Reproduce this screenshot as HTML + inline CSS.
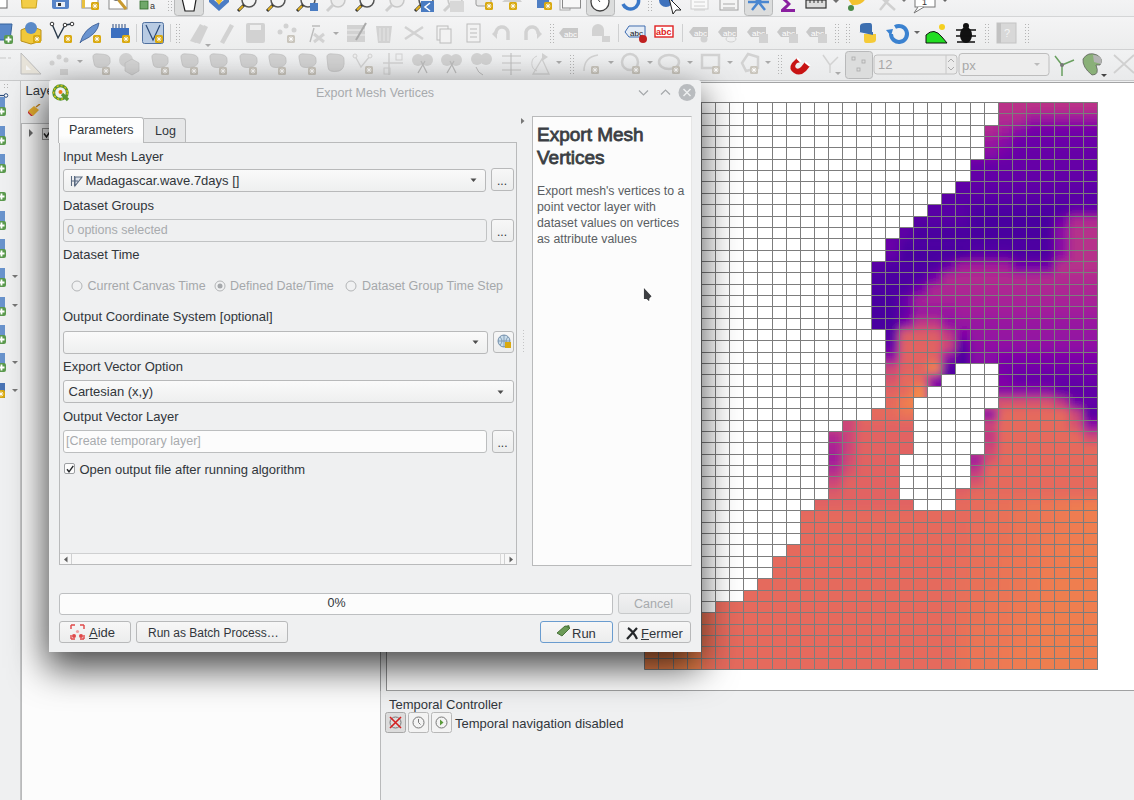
<!DOCTYPE html><html><head><meta charset="utf-8"><style>
*{box-sizing:border-box}
html,body{margin:0;padding:0}
body{width:1134px;height:800px;overflow:hidden;position:relative;background:#eff0f1;font-family:"Liberation Sans",sans-serif;}
div{position:absolute}
.t{white-space:nowrap;line-height:1;}
.btn{border:1px solid #b8b9ba;border-radius:3px;background:linear-gradient(#f7f7f7,#eceded);}
.fld{border:1px solid #bcbebf;border-radius:3px;background:#fcfcfc;}
.cmb{border:1px solid #b8b9ba;border-radius:3px;background:linear-gradient(#fafafa,#eeefef);}
</style></head><body>
<div style="left:0;top:0;width:1134px;height:81px;background:#eff0f1;"></div><div style="left:0;top:0;width:1134px;height:16px;background:linear-gradient(#f3f3f4,#eeeff0);"></div><div style="left:0;top:16px;width:1134px;height:1px;background:#d4d5d6;"></div><div style="left:0;top:17px;width:1134px;height:32px;background:linear-gradient(#f4f4f5,#eceded);"></div><div style="left:0;top:49px;width:1134px;height:1px;background:#d0d1d2;"></div><div style="left:0;top:50px;width:1134px;height:30px;background:linear-gradient(#f1f2f3,#e9eaeb);"></div><div style="left:0;top:80px;width:1134px;height:1px;background:#c9cacb;"></div><svg style="position:absolute;left:0;top:0" width="1134" height="81"><rect x="-10" y="-8" width="17" height="16" fill="#fff" stroke="#666"/><path d="M21 -8H38L36 8H22Z" fill="#f3cd47" stroke="#c9a21c"/><rect x="52" y="-8" width="17" height="17" rx="2" fill="#5784c8"/><rect x="56" y="2" width="9" height="5" fill="#e9eef6"/><rect x="58" y="3" width="3" height="3" fill="#333"/><rect x="82" y="-8" width="16" height="16" fill="#fff" stroke="#888"/><rect x="82" y="-8" width="3" height="16" fill="#e8c040"/><rect x="91" y="2" width="8" height="8" rx="1.5" fill="#d9a90f"/><path d="M95 3.5V8.5M92.5 6H97.5M93.2 4.2L96.8 7.8M96.8 4.2L93.2 7.8" stroke="#fff" stroke-width="0.9"/><rect x="109" y="-8" width="18" height="17" fill="#fff" stroke="#888"/><path d="M117 -2L126 9" stroke="#c99a30" stroke-width="3"/><circle cx="116" cy="-3" r="3.5" fill="#ddd" stroke="#666"/><rect x="140" y="1" width="8" height="8" fill="#6fa86a" stroke="#2f6a2a" stroke-width="0.8"/><text x="150" y="9" font-size="9" font-family="Liberation Sans" fill="#333">a</text><rect x="168" y="1" width="1" height="1" fill="#b4b4b4"/><rect x="171" y="1" width="1" height="1" fill="#b4b4b4"/><rect x="168" y="4" width="1" height="1" fill="#b4b4b4"/><rect x="171" y="4" width="1" height="1" fill="#b4b4b4"/><rect x="168" y="7" width="1" height="1" fill="#b4b4b4"/><rect x="171" y="7" width="1" height="1" fill="#b4b4b4"/><rect x="168" y="10" width="1" height="1" fill="#b4b4b4"/><rect x="171" y="10" width="1" height="1" fill="#b4b4b4"/><rect x="174.5" y="-7.5" width="29" height="23" rx="3" fill="#dcdddd" stroke="#b8b9ba"/><path d="M181 -6L197 -6L194 11L185 11Z" fill="#fff" stroke="#222" stroke-width="1.2"/><path d="M209 -4L219 4L229 -4L229 2L219 11L209 2Z" fill="#4b7cc4"/><path d="M214 -2h10l-5 7z" fill="#f2c030"/><circle cx="249" cy="0" r="7" fill="#f4f4f4" stroke="#555" stroke-width="1.5"/><path d="M244 5L238 11" stroke="#333" stroke-width="3"/><path d="M243 6L239 10" stroke="#e0b020" stroke-width="2"/><circle cx="278" cy="0" r="7" fill="#f4f4f4" stroke="#555" stroke-width="1.5"/><path d="M273 5L267 11" stroke="#333" stroke-width="3"/><path d="M272 6L268 10" stroke="#e0b020" stroke-width="2"/><circle cx="308" cy="0" r="7" fill="#f4f4f4" stroke="#555" stroke-width="1.5"/><path d="M303 5L297 11" stroke="#333" stroke-width="3"/><path d="M302 6L298 10" stroke="#e0b020" stroke-width="2"/><path d="M310 3h8v8h-8z" fill="#4a7cc2"/><circle cx="338" cy="0" r="7" fill="#ececec" stroke="#c8c8c8" stroke-width="1.5"/><path d="M333 5L327 11" stroke="#cfcfcf" stroke-width="3"/><circle cx="367" cy="0" r="7" fill="#f4f4f4" stroke="#555" stroke-width="1.5"/><path d="M362 5L356 11" stroke="#333" stroke-width="3"/><path d="M361 6L357 10" stroke="#e0b020" stroke-width="2"/><circle cx="397" cy="0" r="7" fill="#ececec" stroke="#c8c8c8" stroke-width="1.5"/><path d="M392 5L386 11" stroke="#cfcfcf" stroke-width="3"/><circle cx="426" cy="0" r="7" fill="#f4f4f4" stroke="#555" stroke-width="1.5"/><path d="M421 5L415 11" stroke="#333" stroke-width="3"/><path d="M420 6L416 10" stroke="#e0b020" stroke-width="2"/><rect x="421" y="1" width="13" height="11" fill="#4a7cc2"/><path d="M430 3L425 7L430 11" stroke="#fff" stroke-width="1.6" fill="none"/><circle cx="455" cy="0" r="7" fill="#ececec" stroke="#c8c8c8" stroke-width="1.5"/><path d="M450 5L444 11" stroke="#cfcfcf" stroke-width="3"/><rect x="450" y="1" width="14" height="11" fill="#d8d8d8"/><rect x="476" y="-8" width="15" height="14" rx="2" fill="#e8e8e8" stroke="#999"/><rect x="485" y="2" width="8" height="8" rx="1.5" fill="#d9a90f"/><path d="M489 3.5V8.5M486.5 6H491.5M487.2 4.2L490.8 7.8M490.8 4.2L487.2 7.8" stroke="#fff" stroke-width="0.9"/><path d="M502 2L514 -8L522 2Z" fill="#d0d0d0"/><rect x="509" y="2" width="8" height="8" rx="1.5" fill="#d9a90f"/><path d="M513 3.5V8.5M510.5 6H515.5M511.2 4.2L514.8 7.8M514.8 4.2L511.2 7.8" stroke="#fff" stroke-width="0.9"/><rect x="537" y="-8" width="12" height="16" fill="#4f7fc4"/><rect x="544" y="2" width="8" height="8" rx="1.5" fill="#d9a90f"/><path d="M548 3.5V8.5M545.5 6H550.5M546.2 4.2L549.8 7.8M549.8 4.2L546.2 7.8" stroke="#fff" stroke-width="0.9"/><rect x="560" y="-8" width="10" height="18" fill="#f7f7f7" stroke="#aaa"/><rect x="562.5" y="-8" width="18" height="16" fill="#f7f7f7" stroke="#888"/><rect x="586.5" y="-7.5" width="28" height="23" rx="3" fill="#dcdddd" stroke="#b8b9ba"/><circle cx="600" cy="2" r="9" fill="#fff" stroke="#444" stroke-width="1.3"/><path d="M600 2L596 -3" stroke="#444"/><path d="M623 4 A8 8 0 1 0 638 -2" stroke="#3a78c8" stroke-width="3.5" fill="none"/><rect x="648" y="1" width="1" height="1" fill="#b4b4b4"/><rect x="651" y="1" width="1" height="1" fill="#b4b4b4"/><rect x="648" y="4" width="1" height="1" fill="#b4b4b4"/><rect x="651" y="4" width="1" height="1" fill="#b4b4b4"/><rect x="648" y="7" width="1" height="1" fill="#b4b4b4"/><rect x="651" y="7" width="1" height="1" fill="#b4b4b4"/><rect x="648" y="10" width="1" height="1" fill="#b4b4b4"/><rect x="651" y="10" width="1" height="1" fill="#b4b4b4"/><circle cx="666" cy="0" r="7" fill="#3f72bd"/><path d="M669 -2L681 10L676 10L673 14Z" fill="#fff" stroke="#222"/><rect x="691" y="-8" width="17" height="17" fill="#f9f9f9" stroke="#cdcdcd"/><path d="M694 2h11M694 6h11M694 10h11" stroke="#d0d0d0"/><rect x="720" y="-8" width="18" height="18" fill="#f4f4f4" stroke="#a0a0a0"/><path d="M723 4h12M723 8h12" stroke="#aaa"/><rect x="744.5" y="-7.5" width="28" height="23" rx="3" fill="#dcdddd" stroke="#b8b9ba"/><path d="M752 -6L765 10M765 -6L752 10M748 2H769" stroke="#4a86d0" stroke-width="2.5"/><path d="M781 -4H795L795 -1H786L791 4L786 9H795V12H781V9.5L787 4L781 -1.5Z" fill="#8a1fa0"/><rect x="806" y="0" width="20" height="8" fill="#ddd" stroke="#333" stroke-width="1.2"/><path d="M810 0v3M814 0v3M818 0v3M822 0v3" stroke="#333"/><path d="M833 0h6l-3 3z" fill="#6e6e6e"/><path d="M846 -4Q856 -10 866 -2Q862 6 852 5Z" fill="#f2c230"/><circle cx="851" cy="8" r="3" fill="#4a8a4a"/><path d="M875 -8L895 10M880 10L893 -6" stroke="#d0d0d0" stroke-width="2.5"/><path d="M901 -1h6l-3 3z" fill="#777"/><rect x="915" y="-8" width="20" height="15" fill="#fff" stroke="#777"/><path d="M918 7L914 13L924 7" fill="#fff" stroke="#777"/><text x="922" y="5" font-size="9" font-family="Liberation Sans" fill="#333">1</text><path d="M942 -1h6l-3 3z" fill="#666"/><path d="M-4 24H12L10 40H-4Z" fill="#5a88c8" stroke="#37629c"/><rect x="4" y="35" width="9" height="9" rx="2" fill="#5b9a4e"/><path d="M8.5 36.5V42.5M5.5 39.5H11.5" stroke="#fff" stroke-width="1.8"/><path d="M21 30L31 26L41 30V41L31 44L21 41Z" fill="#f0c83a" stroke="#b8901a"/><circle cx="31" cy="28" r="6" fill="#5a8ac8"/><rect x="33" y="35" width="8" height="8" rx="1.5" fill="#d9a90f"/><path d="M37 36.5V41.5M34.5 39H39.5M35.2 37.2L38.8 40.8M38.8 37.2L35.2 40.8" stroke="#fff" stroke-width="0.9"/><path d="M52 24L58 38L65 25L72 24" stroke="#2a3a4a" stroke-width="1.4" fill="none"/><circle cx="52" cy="24" r="1.8" fill="#fff" stroke="#333"/><circle cx="65" cy="25" r="1.8" fill="#fff" stroke="#333"/><circle cx="72" cy="24" r="1.8" fill="#fff" stroke="#333"/><rect x="64" y="35" width="8" height="8" rx="1.5" fill="#d9a90f"/><path d="M68 36.5V41.5M65.5 39H70.5M66.2 37.2L69.8 40.8M69.8 37.2L66.2 40.8" stroke="#fff" stroke-width="0.9"/><path d="M80 43Q84 28 99 23Q98 34 82 41Z" fill="#6a94d0" stroke="#3a5a90" stroke-width="0.8"/><rect x="93" y="35" width="8" height="8" rx="1.5" fill="#d9a90f"/><path d="M97 36.5V41.5M94.5 39H99.5M95.2 37.2L98.8 40.8M98.8 37.2L95.2 40.8" stroke="#fff" stroke-width="0.9"/><rect x="111" y="28" width="18" height="10" fill="#3c70c0"/><path d="M113 24v4M116 24v4M119 24v4M122 24v4M125 24v4" stroke="#2a4a80"/><rect x="122" y="35" width="8" height="8" rx="1.5" fill="#d9a90f"/><path d="M126 36.5V41.5M123.5 39H128.5M124.2 37.2L127.8 40.8M127.8 37.2L124.2 40.8" stroke="#fff" stroke-width="0.9"/><rect x="136" y="24" width="1" height="18" fill="#cfd0d1"/><rect x="142.5" y="22.5" width="21" height="21" rx="2" fill="#b8cbe3" stroke="#5071a0"/><path d="M146 25L153 40L160 25" stroke="#2a4a78" stroke-width="1.2" fill="none"/><rect x="155" y="35" width="8" height="8" rx="1.5" fill="#d9a90f"/><path d="M159 36.5V41.5M156.5 39H161.5M157.2 37.2L160.8 40.8M160.8 37.2L157.2 40.8" stroke="#fff" stroke-width="0.9"/><rect x="170" y="24" width="1" height="18" fill="#cfd0d1"/><rect x="176" y="24" width="1" height="1" fill="#b4b4b4"/><rect x="179" y="24" width="1" height="1" fill="#b4b4b4"/><rect x="176" y="27" width="1" height="1" fill="#b4b4b4"/><rect x="179" y="27" width="1" height="1" fill="#b4b4b4"/><rect x="176" y="30" width="1" height="1" fill="#b4b4b4"/><rect x="179" y="30" width="1" height="1" fill="#b4b4b4"/><rect x="176" y="33" width="1" height="1" fill="#b4b4b4"/><rect x="179" y="33" width="1" height="1" fill="#b4b4b4"/><rect x="176" y="36" width="1" height="1" fill="#b4b4b4"/><rect x="179" y="36" width="1" height="1" fill="#b4b4b4"/><rect x="176" y="39" width="1" height="1" fill="#b4b4b4"/><rect x="179" y="39" width="1" height="1" fill="#b4b4b4"/><rect x="176" y="42" width="1" height="1" fill="#b4b4b4"/><rect x="179" y="42" width="1" height="1" fill="#b4b4b4"/><path d="M190 41L200 24L204 26L196 43Z" fill="#d2d2d2"/><path d="M194 42L204 25L208 27L200 44Z" fill="#d2d2d2"/><path d="M205 44h6l-3 3z" fill="#aaa"/><path d="M220 42L230 24L234 26L224 44Z" fill="#d2d2d2"/><rect x="246" y="23" width="19" height="20" rx="2" fill="#d2d2d2"/><rect x="250" y="25" width="11" height="5" fill="#eee"/><circle cx="280" cy="32" r="2.5" fill="#d2d2d2"/><circle cx="286" cy="26" r="2.5" fill="#d2d2d2"/><circle cx="294" cy="30" r="2.5" fill="#d2d2d2"/><rect x="287" y="35" width="8" height="8" rx="1.5" fill="#c9c5bc"/><path d="M291 36.5V41.5M288.5 39H293.5M289.2 37.2L292.8 40.8M292.8 37.2L289.2 40.8" stroke="#fff" stroke-width="0.9"/><path d="M310 42L314 28M312 26h8" stroke="#bcbcbc" stroke-width="1.4" fill="none"/><path d="M314 34L324 42M324 34L314 42" stroke="#d2d2d2" stroke-width="3"/><path d="M333 32h6l-3 3z" fill="#aaa"/><rect x="347" y="25" width="18" height="17" fill="#d2d2d2"/><path d="M347 30h18M347 35h18" stroke="#eee"/><path d="M356 40L366 23" stroke="#aaa" stroke-width="2"/><path d="M376 26H392L390 43H378Z" fill="#d2d2d2"/><path d="M380 28V41M384 28V41M388 28V41" stroke="#e6e6e6"/><path d="M405 27L423 39M405 39L423 27" stroke="#d2d2d2" stroke-width="2.5"/><rect x="437" y="26" width="11" height="14" fill="#f2f2f2" stroke="#bcbcbc"/><rect x="440" y="29" width="11" height="14" fill="#f2f2f2" stroke="#bcbcbc"/><rect x="467" y="24" width="13" height="18" fill="#f2f2f2" stroke="#bcbcbc"/><path d="M470 29h7M470 33h7M470 37h7" stroke="#bcbcbc"/><path d="M496 34A6 6 0 0 1 508 32L508 40" stroke="#d2d2d2" stroke-width="3.5" fill="none"/><path d="M492 34l5 -5v10z" fill="#d2d2d2"/><path d="M538 34A6 6 0 0 0 526 32L526 40" stroke="#d2d2d2" stroke-width="3.5" fill="none"/><path d="M542 34l-5 -5v10z" fill="#d2d2d2"/><rect x="550" y="24" width="1" height="1" fill="#b4b4b4"/><rect x="553" y="24" width="1" height="1" fill="#b4b4b4"/><rect x="550" y="27" width="1" height="1" fill="#b4b4b4"/><rect x="553" y="27" width="1" height="1" fill="#b4b4b4"/><rect x="550" y="30" width="1" height="1" fill="#b4b4b4"/><rect x="553" y="30" width="1" height="1" fill="#b4b4b4"/><rect x="550" y="33" width="1" height="1" fill="#b4b4b4"/><rect x="553" y="33" width="1" height="1" fill="#b4b4b4"/><rect x="550" y="36" width="1" height="1" fill="#b4b4b4"/><rect x="553" y="36" width="1" height="1" fill="#b4b4b4"/><rect x="550" y="39" width="1" height="1" fill="#b4b4b4"/><rect x="553" y="39" width="1" height="1" fill="#b4b4b4"/><rect x="550" y="42" width="1" height="1" fill="#b4b4b4"/><rect x="553" y="42" width="1" height="1" fill="#b4b4b4"/><path d="M559 33L563 28H578V38H563Z" fill="#c8c8c8"/><text x="564" y="36.5" font-size="8" font-family="Liberation Sans" fill="#fff">abc</text><path d="M592 30A6 6 0 0 1 604 30V36H592Z" fill="#d2d2d2"/><rect x="602" y="36" width="8" height="6" fill="#d2d2d2"/><rect x="618" y="24" width="1" height="18" fill="#cfd0d1"/><path d="M625 32L629 27H644V37H629Z" fill="#e4ecf6"/><text x="630" y="35.5" font-size="8" font-family="Liberation Sans" fill="#111">abc</text><path d="M625 32L629 26H645V37H629Z" fill="none" stroke="#3a6ab0"/><circle cx="643" cy="39" r="4" fill="#c02020"/><rect x="655" y="26" width="18" height="11" fill="#fff" stroke="#e02020" stroke-width="1.4"/><text x="656" y="35" font-size="9" font-weight="bold" font-family="Liberation Sans" fill="#e02020">abc</text><rect x="682" y="24" width="1" height="18" fill="#cfd0d1"/><path d="M689 32L693 27H708V37H693Z" fill="#c8c8c8"/><text x="694" y="35.5" font-size="8" font-family="Liberation Sans" fill="#fff">abc</text><circle cx="704" cy="39" r="3.5" fill="#d2d2d2"/><path d="M718 32L722 27H737V37H722Z" fill="#c8c8c8"/><text x="723" y="35.5" font-size="8" font-family="Liberation Sans" fill="#fff">abc</text><ellipse cx="731" cy="39" rx="5" ry="3" fill="none" stroke="#d2d2d2"/><path d="M747 32L751 27H766V37H751Z" fill="#c8c8c8"/><text x="752" y="35.5" font-size="8" font-family="Liberation Sans" fill="#fff">abc</text><rect x="759" y="34" width="9" height="9" fill="#d2d2d2"/><path d="M777 32L781 27H796V37H781Z" fill="#c8c8c8"/><text x="782" y="35.5" font-size="8" font-family="Liberation Sans" fill="#fff">abc</text><rect x="789" y="34" width="9" height="9" fill="#d2d2d2"/><path d="M806 32L810 27H825V37H810Z" fill="#c8c8c8"/><text x="811" y="35.5" font-size="8" font-family="Liberation Sans" fill="#fff">abc</text><rect x="818" y="34" width="9" height="9" fill="#d2d2d2"/><rect x="835" y="24" width="1" height="1" fill="#b4b4b4"/><rect x="838" y="24" width="1" height="1" fill="#b4b4b4"/><rect x="835" y="27" width="1" height="1" fill="#b4b4b4"/><rect x="838" y="27" width="1" height="1" fill="#b4b4b4"/><rect x="835" y="30" width="1" height="1" fill="#b4b4b4"/><rect x="838" y="30" width="1" height="1" fill="#b4b4b4"/><rect x="835" y="33" width="1" height="1" fill="#b4b4b4"/><rect x="838" y="33" width="1" height="1" fill="#b4b4b4"/><rect x="835" y="36" width="1" height="1" fill="#b4b4b4"/><rect x="838" y="36" width="1" height="1" fill="#b4b4b4"/><rect x="835" y="39" width="1" height="1" fill="#b4b4b4"/><rect x="838" y="39" width="1" height="1" fill="#b4b4b4"/><rect x="835" y="42" width="1" height="1" fill="#b4b4b4"/><rect x="838" y="42" width="1" height="1" fill="#b4b4b4"/><rect x="846" y="24" width="1" height="1" fill="#b4b4b4"/><rect x="849" y="24" width="1" height="1" fill="#b4b4b4"/><rect x="846" y="27" width="1" height="1" fill="#b4b4b4"/><rect x="849" y="27" width="1" height="1" fill="#b4b4b4"/><rect x="846" y="30" width="1" height="1" fill="#b4b4b4"/><rect x="849" y="30" width="1" height="1" fill="#b4b4b4"/><rect x="846" y="33" width="1" height="1" fill="#b4b4b4"/><rect x="849" y="33" width="1" height="1" fill="#b4b4b4"/><rect x="846" y="36" width="1" height="1" fill="#b4b4b4"/><rect x="849" y="36" width="1" height="1" fill="#b4b4b4"/><rect x="846" y="39" width="1" height="1" fill="#b4b4b4"/><rect x="849" y="39" width="1" height="1" fill="#b4b4b4"/><rect x="846" y="42" width="1" height="1" fill="#b4b4b4"/><rect x="849" y="42" width="1" height="1" fill="#b4b4b4"/><path d="M860 32V26Q860 23 866 23H870Q872 23 872 26V32H862Z" fill="#3d6fb0"/><path d="M876 34V40Q876 43 870 43H866Q864 43 864 40V34H874Z" fill="#f5cb38"/><path d="M859 32H873V35" fill="#3d6fb0"/><path d="M891 34 A8 8 0 1 0 895 27" stroke="#3b82d0" stroke-width="4" fill="none"/><path d="M886 30l7 -1l-2 7z" fill="#3b82d0"/><path d="M914 31h6l-3 3z" fill="#666"/><path d="M926 43V35Q934 27 942 37L947 43Z" fill="#22dd22" stroke="#111" stroke-width="1"/><circle cx="942" cy="27" r="3" fill="#f5d020"/><ellipse cx="966" cy="35" rx="6" ry="8" fill="#111"/><circle cx="966" cy="26" r="3" fill="#111"/><path d="M956 30h20M956 36h20M957 42h18" stroke="#111" stroke-width="1.3"/><rect x="985" y="24" width="1" height="1" fill="#b4b4b4"/><rect x="988" y="24" width="1" height="1" fill="#b4b4b4"/><rect x="985" y="27" width="1" height="1" fill="#b4b4b4"/><rect x="988" y="27" width="1" height="1" fill="#b4b4b4"/><rect x="985" y="30" width="1" height="1" fill="#b4b4b4"/><rect x="988" y="30" width="1" height="1" fill="#b4b4b4"/><rect x="985" y="33" width="1" height="1" fill="#b4b4b4"/><rect x="988" y="33" width="1" height="1" fill="#b4b4b4"/><rect x="985" y="36" width="1" height="1" fill="#b4b4b4"/><rect x="988" y="36" width="1" height="1" fill="#b4b4b4"/><rect x="985" y="39" width="1" height="1" fill="#b4b4b4"/><rect x="988" y="39" width="1" height="1" fill="#b4b4b4"/><rect x="985" y="42" width="1" height="1" fill="#b4b4b4"/><rect x="988" y="42" width="1" height="1" fill="#b4b4b4"/><rect x="997" y="23" width="19" height="20" fill="#d8d8d8" stroke="#c4c4c4"/><rect x="997" y="23" width="4" height="20" fill="#c2c2c2"/><text x="1004" y="37" font-size="11" font-family="Liberation Sans" fill="#f4f4f4">?</text><rect x="1025" y="24" width="1" height="1" fill="#b4b4b4"/><rect x="1028" y="24" width="1" height="1" fill="#b4b4b4"/><rect x="1025" y="27" width="1" height="1" fill="#b4b4b4"/><rect x="1028" y="27" width="1" height="1" fill="#b4b4b4"/><rect x="1025" y="30" width="1" height="1" fill="#b4b4b4"/><rect x="1028" y="30" width="1" height="1" fill="#b4b4b4"/><rect x="1025" y="33" width="1" height="1" fill="#b4b4b4"/><rect x="1028" y="33" width="1" height="1" fill="#b4b4b4"/><rect x="1025" y="36" width="1" height="1" fill="#b4b4b4"/><rect x="1028" y="36" width="1" height="1" fill="#b4b4b4"/><rect x="1025" y="39" width="1" height="1" fill="#b4b4b4"/><rect x="1028" y="39" width="1" height="1" fill="#b4b4b4"/><rect x="1025" y="42" width="1" height="1" fill="#b4b4b4"/><rect x="1028" y="42" width="1" height="1" fill="#b4b4b4"/><path d="M0 58h6M8 58h3" stroke="#c8c8c8" stroke-width="1.2"/><path d="M21 53V74H41Z" fill="#e8e4da" stroke="#bcbcbc"/><path d="M26 65V70H31Z" fill="#f6f6f6"/><circle cx="52" cy="63" r="2.5" fill="#d2d2d2"/><circle cx="59" cy="57" r="2.5" fill="#d2d2d2"/><circle cx="66" cy="60" r="2.5" fill="#d2d2d2"/><path d="M60 69h8v6h-8z" fill="#d2d2d2"/><path d="M77 60h6l-3 3z" fill="#aaa"/><path d="M93 58 Q92 53 99 54 Q111 54 110 60 Q111 65 105 67 Q94 69 94 63 Z" fill="#d2d2d2" stroke="#c2c2c2" stroke-width="0.8"/><rect x="102" y="67" width="8" height="8" rx="1.5" fill="#c9c5bc"/><path d="M106 68.5V73.5M103.5 71H108.5M104.2 69.2L107.8 72.8M107.8 69.2L104.2 72.8" stroke="#fff" stroke-width="0.9"/><path d="M181 58 Q180 53 187 54 Q199 54 198 60 Q199 65 193 67 Q182 69 182 63 Z" fill="#d2d2d2" stroke="#c2c2c2" stroke-width="0.8"/><rect x="190" y="67" width="8" height="8" rx="1.5" fill="#c9c5bc"/><path d="M194 68.5V73.5M191.5 71H196.5M192.2 69.2L195.8 72.8M195.8 69.2L192.2 72.8" stroke="#fff" stroke-width="0.9"/><path d="M210 58 Q209 53 216 54 Q228 54 227 60 Q228 65 222 67 Q211 69 211 63 Z" fill="#d2d2d2" stroke="#c2c2c2" stroke-width="0.8"/><rect x="219" y="67" width="8" height="8" rx="1.5" fill="#c9c5bc"/><path d="M223 68.5V73.5M220.5 71H225.5M221.2 69.2L224.8 72.8M224.8 69.2L221.2 72.8" stroke="#fff" stroke-width="0.9"/><path d="M240 58 Q239 53 246 54 Q258 54 257 60 Q258 65 252 67 Q241 69 241 63 Z" fill="#d2d2d2" stroke="#c2c2c2" stroke-width="0.8"/><rect x="249" y="67" width="8" height="8" rx="1.5" fill="#c9c5bc"/><path d="M253 68.5V73.5M250.5 71H255.5M251.2 69.2L254.8 72.8M254.8 69.2L251.2 72.8" stroke="#fff" stroke-width="0.9"/><path d="M269 58 Q268 53 275 54 Q287 54 286 60 Q287 65 281 67 Q270 69 270 63 Z" fill="#d2d2d2" stroke="#c2c2c2" stroke-width="0.8"/><rect x="278" y="67" width="8" height="8" rx="1.5" fill="#c9c5bc"/><path d="M282 68.5V73.5M279.5 71H284.5M280.2 69.2L283.8 72.8M283.8 69.2L280.2 72.8" stroke="#fff" stroke-width="0.9"/><path d="M299 58 Q298 53 305 54 Q317 54 316 60 Q317 65 311 67 Q300 69 300 63 Z" fill="#d2d2d2" stroke="#c2c2c2" stroke-width="0.8"/><rect x="308" y="67" width="8" height="8" rx="1.5" fill="#c9c5bc"/><path d="M312 68.5V73.5M309.5 71H314.5M310.2 69.2L313.8 72.8M313.8 69.2L310.2 72.8" stroke="#fff" stroke-width="0.9"/><circle cx="126" cy="60" r="7" fill="#d2d2d2"/><path d="M125 63l7-4l7 4v8l-7 4l-7-4z" fill="#d4d4d4" stroke="#bcbcbc" stroke-width="0.6"/><path d="M152 58 Q151 53 158 54 Q169 54 168 60 Q169 65 163 67 Q153 69 153 63 Z" fill="#d2d2d2" stroke="#c2c2c2" stroke-width="0.8"/><rect x="161" y="67" width="8" height="8" rx="1.5" fill="#c9c5bc"/><path d="M165 68.5V73.5M162.5 71H167.5M163.2 69.2L166.8 72.8M166.8 69.2L163.2 72.8" stroke="#fff" stroke-width="0.9"/><path d="M327 58 Q326 53 333 54 Q345 54 344 60 Q345 69 339 71 Q328 73 328 67 Z" fill="#d2d2d2" stroke="#c2c2c2" stroke-width="0.8"/><path d="M355 56L361 67L370 56" stroke="#d2d2d2" stroke-width="1.3" fill="none"/><circle cx="355" cy="56" r="2" fill="#eee" stroke="#d2d2d2"/><circle cx="370" cy="56" r="2" fill="#eee" stroke="#d2d2d2"/><rect x="365" y="66" width="8" height="8" rx="1.5" fill="#c9c5bc"/><path d="M369 67.5V72.5M366.5 70H371.5M367.2 68.2L370.8 71.8M370.8 68.2L367.2 71.8" stroke="#fff" stroke-width="0.9"/><path d="M389 53V75M383 63H403" stroke="#d2d2d2" stroke-width="1.5"/><rect x="396" y="54" width="6" height="6" fill="none" stroke="#d2d2d2"/><rect x="384" y="68" width="6" height="6" fill="none" stroke="#d2d2d2"/><circle cx="418" cy="60" r="6" fill="#d2d2d2"/><circle cx="427" cy="60" r="6" fill="#d2d2d2"/><path d="M418 73L425 61M427 73L421 61" stroke="#bcbcbc" stroke-width="1.3"/><circle cx="447" cy="60" r="6" fill="#d2d2d2"/><circle cx="456" cy="60" r="6" fill="#d2d2d2"/><path d="M447 73L454 61M456 73L450 61" stroke="#bcbcbc" stroke-width="1.3"/><circle cx="477" cy="59" r="6" fill="#d2d2d2"/><circle cx="486" cy="59" r="6" fill="#d2d2d2"/><path d="M476 67Q478 73 483 75" stroke="#bcbcbc" fill="none"/><path d="M502 56H521M502 63H521M502 70H521" stroke="#d2d2d2" stroke-width="1.6"/><path d="M511 53V75" stroke="#bcbcbc"/><path d="M533 74L542 59L549 74Z" fill="none" stroke="#d2d2d2" stroke-width="1.3"/><path d="M542 53V61l6-4z" fill="#d2d2d2"/><path d="M537 56A8 8 0 0 0 537 71" stroke="#d2d2d2" fill="none"/><path d="M556 61h6l-3 3z" fill="#aaa"/><rect x="570" y="55" width="1" height="1" fill="#b4b4b4"/><rect x="573" y="55" width="1" height="1" fill="#b4b4b4"/><rect x="570" y="58" width="1" height="1" fill="#b4b4b4"/><rect x="573" y="58" width="1" height="1" fill="#b4b4b4"/><rect x="570" y="61" width="1" height="1" fill="#b4b4b4"/><rect x="573" y="61" width="1" height="1" fill="#b4b4b4"/><rect x="570" y="64" width="1" height="1" fill="#b4b4b4"/><rect x="573" y="64" width="1" height="1" fill="#b4b4b4"/><rect x="570" y="67" width="1" height="1" fill="#b4b4b4"/><rect x="573" y="67" width="1" height="1" fill="#b4b4b4"/><rect x="570" y="70" width="1" height="1" fill="#b4b4b4"/><rect x="573" y="70" width="1" height="1" fill="#b4b4b4"/><rect x="570" y="73" width="1" height="1" fill="#b4b4b4"/><rect x="573" y="73" width="1" height="1" fill="#b4b4b4"/><path d="M584 71Q584 57 598 55" stroke="#d2d2d2" stroke-width="1.5" fill="none"/><rect x="591" y="66" width="8" height="8" rx="1.5" fill="#c9c5bc"/><path d="M595 67.5V72.5M592.5 70H597.5M593.2 68.2L596.8 71.8M596.8 68.2L593.2 71.8" stroke="#fff" stroke-width="0.9"/><path d="M608 61h6l-3 3z" fill="#aaa"/><circle cx="630" cy="62" r="8" fill="none" stroke="#d2d2d2" stroke-width="2.5"/><rect x="632" y="66" width="8" height="8" rx="1.5" fill="#c9c5bc"/><path d="M636 67.5V72.5M633.5 70H638.5M634.2 68.2L637.8 71.8M637.8 68.2L634.2 71.8" stroke="#fff" stroke-width="0.9"/><path d="M647 61h6l-3 3z" fill="#aaa"/><ellipse cx="669" cy="62" rx="10" ry="7" fill="none" stroke="#d2d2d2" stroke-width="2.5"/><rect x="672" y="66" width="8" height="8" rx="1.5" fill="#c9c5bc"/><path d="M676 67.5V72.5M673.5 70H678.5M674.2 68.2L677.8 71.8M677.8 68.2L674.2 71.8" stroke="#fff" stroke-width="0.9"/><path d="M687 61h6l-3 3z" fill="#aaa"/><rect x="702" y="55" width="17" height="13" fill="none" stroke="#d2d2d2" stroke-width="2.5"/><rect x="712" y="66" width="8" height="8" rx="1.5" fill="#c9c5bc"/><path d="M716 67.5V72.5M713.5 70H718.5M714.2 68.2L717.8 71.8M717.8 68.2L714.2 71.8" stroke="#fff" stroke-width="0.9"/><path d="M727 61h6l-3 3z" fill="#aaa"/><path d="M742 63L748 54L758 57L758 68L746 71Z" fill="none" stroke="#d2d2d2" stroke-width="2.5"/><rect x="750" y="66" width="8" height="8" rx="1.5" fill="#c9c5bc"/><path d="M754 67.5V72.5M751.5 70H756.5M752.2 68.2L755.8 71.8M755.8 68.2L752.2 71.8" stroke="#fff" stroke-width="0.9"/><path d="M765 61h6l-3 3z" fill="#aaa"/><rect x="778" y="55" width="1" height="1" fill="#b4b4b4"/><rect x="781" y="55" width="1" height="1" fill="#b4b4b4"/><rect x="778" y="58" width="1" height="1" fill="#b4b4b4"/><rect x="781" y="58" width="1" height="1" fill="#b4b4b4"/><rect x="778" y="61" width="1" height="1" fill="#b4b4b4"/><rect x="781" y="61" width="1" height="1" fill="#b4b4b4"/><rect x="778" y="64" width="1" height="1" fill="#b4b4b4"/><rect x="781" y="64" width="1" height="1" fill="#b4b4b4"/><rect x="778" y="67" width="1" height="1" fill="#b4b4b4"/><rect x="781" y="67" width="1" height="1" fill="#b4b4b4"/><rect x="778" y="70" width="1" height="1" fill="#b4b4b4"/><rect x="781" y="70" width="1" height="1" fill="#b4b4b4"/><rect x="778" y="73" width="1" height="1" fill="#b4b4b4"/><rect x="781" y="73" width="1" height="1" fill="#b4b4b4"/><path d="M797 58L792 63Q788 69 794 73Q800 77 806 71L810 66L805 62L801 67Q798 70 796 68Q794 66 797 63L801 62Z" fill="#c81414"/><path d="M797 58L801 62M810 66L805 62" stroke="#fff" stroke-width="2"/><path d="M830 73V65L823 55M830 65L838 57" stroke="#d2d2d2" stroke-width="1.5" fill="none"/><path d="M835 72h6l-3 3z" fill="#aaa"/><rect x="845.5" y="51.5" width="27" height="27" rx="3" fill="#dcdddd" stroke="#b8b9ba"/><rect x="852" y="57" width="3" height="3" fill="none" stroke="#aaa" stroke-width="0.8"/><rect x="862" y="60" width="3" height="3" fill="none" stroke="#aaa" stroke-width="0.8"/><rect x="857" y="68" width="3" height="3" fill="none" stroke="#aaa" stroke-width="0.8"/><rect x="874" y="55" width="83" height="19" rx="3" fill="#ebebeb" stroke="#c0c0c0"/><text x="878" y="69" font-size="13" font-family="Liberation Sans" fill="#a8a8a8">12</text><path d="M946 55V74" stroke="#c8c8c8"/><path d="M948 62l3-3l3 3M948 67l3 3l3-3" stroke="#aaa" fill="none"/><rect x="959" y="53.5" width="90" height="22" rx="3" fill="#ededed" stroke="#bdbdbd"/><text x="962" y="70" font-size="13" font-family="Liberation Sans" fill="#a8a8a8">px</text><path d="M1034 63h6l-3 3z" fill="#bbb"/><path d="M1062 65V76M1062 65L1055 56M1062 65L1074 60" stroke="#6aa060" stroke-width="1.5"/><circle cx="1062" cy="65" r="2" fill="#777"/><path d="M1083 59Q1088 51 1097 55Q1104 59 1100 65L1096 65Q1100 75 1092 75Q1082 67 1083 59Z" fill="#8ab078" stroke="#555" stroke-width="0.7"/><path d="M1093 55Q1104 56 1101 64L1094 62Z" fill="#b4b4b4"/><path d="M1101 74h6l-3 3z" fill="#444"/><path d="M1114 55L1134 73M1134 55L1114 73" stroke="#d0d0d0" stroke-width="1.8"/></svg><div style="left:0;top:81px;width:20px;height:719px;background:#eff0f1;"></div><svg style="position:absolute;left:0;top:0" width="20" height="800"><rect x="4" y="84" width="1" height="1" fill="#b4b4b4"/><rect x="7" y="84" width="1" height="1" fill="#b4b4b4"/><rect x="4" y="87" width="1" height="1" fill="#b4b4b4"/><rect x="7" y="87" width="1" height="1" fill="#b4b4b4"/><path d="M0 95.5h4" stroke="#2a4a78" stroke-width="1.2"/><circle cx="6" cy="95.5" r="1.8" fill="#fff" stroke="#2a4a78"/><rect x="-6" y="97" width="11" height="15" fill="#5a88c8" opacity="0.9"/><rect x="-3" y="107" width="9" height="9" rx="2" fill="#5b9a4e"/><path d="M1.5 108.5V114.5M-1.5 111.5H4.5" stroke="#fff" stroke-width="1.8"/><rect x="-6" y="126" width="11" height="15" fill="#5a88c8" opacity="0.9"/><rect x="-3" y="136" width="9" height="9" rx="2" fill="#5b9a4e"/><path d="M1.5 137.5V143.5M-1.5 140.5H4.5" stroke="#fff" stroke-width="1.8"/><rect x="-6" y="154" width="11" height="15" fill="#5a88c8" opacity="0.9"/><rect x="-3" y="164" width="9" height="9" rx="2" fill="#5b9a4e"/><path d="M1.5 165.5V171.5M-1.5 168.5H4.5" stroke="#fff" stroke-width="1.8"/><rect x="-3" y="192" width="9" height="9" rx="2" fill="#5b9a4e"/><path d="M1.5 193.5V199.5M-1.5 196.5H4.5" stroke="#fff" stroke-width="1.8"/><rect x="-6" y="211" width="11" height="15" fill="#5a88c8" opacity="0.9"/><rect x="-3" y="221" width="9" height="9" rx="2" fill="#5b9a4e"/><path d="M1.5 222.5V228.5M-1.5 225.5H4.5" stroke="#fff" stroke-width="1.8"/><rect x="-6" y="239" width="11" height="15" fill="#5a88c8" opacity="0.9"/><rect x="-3" y="249" width="9" height="9" rx="2" fill="#5b9a4e"/><path d="M1.5 250.5V256.5M-1.5 253.5H4.5" stroke="#fff" stroke-width="1.8"/><rect x="-6" y="268" width="11" height="15" fill="#5a88c8" opacity="0.9"/><rect x="-3" y="278" width="9" height="9" rx="2" fill="#5b9a4e"/><path d="M1.5 279.5V285.5M-1.5 282.5H4.5" stroke="#fff" stroke-width="1.8"/><rect x="-6" y="297" width="11" height="15" fill="#5a88c8" opacity="0.9"/><rect x="-3" y="307" width="9" height="9" rx="2" fill="#5b9a4e"/><path d="M1.5 308.5V314.5M-1.5 311.5H4.5" stroke="#fff" stroke-width="1.8"/><rect x="-6" y="325" width="11" height="15" fill="#5a88c8" opacity="0.9"/><rect x="-3" y="335" width="9" height="9" rx="2" fill="#5b9a4e"/><path d="M1.5 336.5V342.5M-1.5 339.5H4.5" stroke="#fff" stroke-width="1.8"/><rect x="-6" y="353" width="11" height="15" fill="#5a88c8" opacity="0.9"/><rect x="-3" y="363" width="9" height="9" rx="2" fill="#5b9a4e"/><path d="M1.5 364.5V370.5M-1.5 367.5H4.5" stroke="#fff" stroke-width="1.8"/><rect x="-6" y="383" width="11" height="15" fill="#4a74b4"/><rect x="-3" y="390" width="8" height="8" rx="1.5" fill="#d9a90f"/><path d="M1 391.5V396.5M-1.5 394H3.5M-0.7999999999999998 392.2L2.8 395.8M2.8 392.2L-0.7999999999999998 395.8" stroke="#fff" stroke-width="0.9"/><path d="M12 275h6l-3 3z" fill="#777"/><path d="M12 304h6l-3 3z" fill="#777"/><path d="M12 361h6l-3 3z" fill="#777"/><path d="M12 389h6l-3 3z" fill="#777"/></svg><div style="left:21px;top:81px;width:360px;height:42px;background:#eff0f1;"></div><div class="t" style="left:25.5px;top:83.70px;font-size:13px;color:#31363b;">Layers</div><div style="left:20px;top:81px;width:1px;height:719px;background:#c4c5c6;"></div><div style="left:21px;top:123px;width:360px;height:690px;background:#fcfcfc;border:1px solid #b9babb;border-right-color:#9c9d9e;"></div><svg style="position:absolute;left:27px;top:104px" width="14" height="13" viewBox="0 0 14 13"><path d="M1 7 L7 2 L12 6 L6 12 Z" fill="#e8b030"/><path d="M1 7 L6 12 L4 12 L1 9Z" fill="#d03030"/><path d="M9 3 L13 0" stroke="#c08020" stroke-width="1.5"/></svg><svg style="position:absolute;left:28px;top:128px" width="24" height="12"><path d="M1 1 L5 5 L1 9Z" fill="#6a6a6a"/><rect x="14.5" y="0.5" width="9" height="11" fill="#f4f4f4" stroke="#999"/><path d="M16 5.5L18.5 9L23 2" stroke="#222" stroke-width="1.5" fill="none"/></svg><div style="left:386px;top:82px;width:748px;height:609px;background:#ffffff;border-left:1px solid #8f9091;border-top:1px solid #a3a4a5;border-bottom:1px solid #a0a1a2;overflow:hidden;"><svg style="position:absolute;left:0;top:0" width="748" height="610"><defs><filter id="bl" x="-5%" y="-5%" width="110%" height="110%"><feGaussianBlur stdDeviation="4.0"/></filter><clipPath id="cm"><rect x="611.34" y="19.60" width="98.98" height="11.34"/><rect x="611.34" y="30.94" width="98.98" height="11.34"/><rect x="597.20" y="42.28" width="113.12" height="11.34"/><rect x="597.20" y="53.62" width="113.12" height="11.34"/><rect x="597.20" y="64.96" width="113.12" height="11.34"/><rect x="583.06" y="76.30" width="127.26" height="11.34"/><rect x="583.06" y="87.64" width="127.26" height="11.34"/><rect x="568.92" y="98.98" width="141.40" height="11.34"/><rect x="554.78" y="110.32" width="155.54" height="11.34"/><rect x="540.64" y="121.66" width="169.68" height="11.34"/><rect x="526.50" y="133.00" width="183.82" height="11.34"/><rect x="512.36" y="144.34" width="197.96" height="11.34"/><rect x="498.22" y="155.68" width="212.10" height="11.34"/><rect x="498.22" y="167.02" width="212.10" height="11.34"/><rect x="484.08" y="178.36" width="226.24" height="11.34"/><rect x="484.08" y="189.70" width="226.24" height="11.34"/><rect x="484.08" y="201.04" width="226.24" height="11.34"/><rect x="484.08" y="212.38" width="226.24" height="11.34"/><rect x="484.08" y="223.72" width="226.24" height="11.34"/><rect x="484.08" y="235.06" width="226.24" height="11.34"/><rect x="498.22" y="246.40" width="212.10" height="11.34"/><rect x="498.22" y="257.74" width="212.10" height="11.34"/><rect x="498.22" y="269.08" width="212.10" height="11.34"/><rect x="498.22" y="280.42" width="70.70" height="11.34"/><rect x="611.34" y="280.42" width="98.98" height="11.34"/><rect x="498.22" y="291.76" width="56.56" height="11.34"/><rect x="611.34" y="291.76" width="98.98" height="11.34"/><rect x="498.22" y="303.10" width="42.42" height="11.34"/><rect x="611.34" y="303.10" width="98.98" height="11.34"/><rect x="498.22" y="314.44" width="28.28" height="11.34"/><rect x="611.34" y="314.44" width="98.98" height="11.34"/><rect x="484.08" y="325.78" width="42.42" height="11.34"/><rect x="597.20" y="325.78" width="113.12" height="11.34"/><rect x="455.80" y="337.12" width="70.70" height="11.34"/><rect x="597.20" y="337.12" width="113.12" height="11.34"/><rect x="441.66" y="348.46" width="84.84" height="11.34"/><rect x="597.20" y="348.46" width="113.12" height="11.34"/><rect x="441.66" y="359.80" width="84.84" height="11.34"/><rect x="597.20" y="359.80" width="113.12" height="11.34"/><rect x="441.66" y="371.14" width="70.70" height="11.34"/><rect x="583.06" y="371.14" width="127.26" height="11.34"/><rect x="441.66" y="382.48" width="70.70" height="11.34"/><rect x="583.06" y="382.48" width="127.26" height="11.34"/><rect x="441.66" y="393.82" width="70.70" height="11.34"/><rect x="583.06" y="393.82" width="127.26" height="11.34"/><rect x="441.66" y="405.16" width="70.70" height="11.34"/><rect x="568.92" y="405.16" width="141.40" height="11.34"/><rect x="427.52" y="416.50" width="98.98" height="11.34"/><rect x="568.92" y="416.50" width="141.40" height="11.34"/><rect x="413.38" y="427.84" width="296.94" height="11.34"/><rect x="413.38" y="439.18" width="296.94" height="11.34"/><rect x="413.38" y="450.52" width="296.94" height="11.34"/><rect x="399.24" y="461.86" width="311.08" height="11.34"/><rect x="385.10" y="473.20" width="325.22" height="11.34"/><rect x="385.10" y="484.54" width="325.22" height="11.34"/><rect x="370.96" y="495.88" width="339.36" height="11.34"/><rect x="356.82" y="507.22" width="353.50" height="11.34"/><rect x="328.54" y="518.56" width="381.78" height="11.34"/><rect x="314.40" y="529.90" width="395.92" height="11.34"/><rect x="314.40" y="541.24" width="395.92" height="11.34"/><rect x="314.40" y="552.58" width="395.92" height="11.34"/><rect x="314.40" y="563.92" width="395.92" height="11.34"/><rect x="314.40" y="575.26" width="395.92" height="11.34"/><rect x="257.84" y="563.92" width="56.56" height="11.34"/><rect x="257.84" y="575.26" width="56.56" height="11.34"/></clipPath></defs><g clip-path="url(#cm)"><g filter="url(#bl)"><rect x="214.9" y="-14.9" width="15.1" height="12.3" fill="#ba3388"/><rect x="229.1" y="-14.9" width="15.1" height="12.3" fill="#ba3388"/><rect x="243.2" y="-14.9" width="15.1" height="12.3" fill="#ba3388"/><rect x="257.3" y="-14.9" width="15.1" height="12.3" fill="#ba3388"/><rect x="271.5" y="-14.9" width="15.1" height="12.3" fill="#ba3388"/><rect x="285.6" y="-14.9" width="15.1" height="12.3" fill="#ba3388"/><rect x="299.8" y="-14.9" width="15.1" height="12.3" fill="#ba3388"/><rect x="313.9" y="-14.9" width="15.1" height="12.3" fill="#ba3388"/><rect x="328.0" y="-14.9" width="15.1" height="12.3" fill="#ba3388"/><rect x="342.2" y="-14.9" width="15.1" height="12.3" fill="#ba3388"/><rect x="356.3" y="-14.9" width="15.1" height="12.3" fill="#ba3388"/><rect x="370.5" y="-14.9" width="15.1" height="12.3" fill="#ba3388"/><rect x="384.6" y="-14.9" width="15.1" height="12.3" fill="#ba3388"/><rect x="398.7" y="-14.9" width="15.1" height="12.3" fill="#ba3388"/><rect x="412.9" y="-14.9" width="15.1" height="12.3" fill="#ba3388"/><rect x="427.0" y="-14.9" width="15.1" height="12.3" fill="#ba3388"/><rect x="441.2" y="-14.9" width="15.1" height="12.3" fill="#ba3388"/><rect x="455.3" y="-14.9" width="15.1" height="12.3" fill="#ba3388"/><rect x="469.4" y="-14.9" width="15.1" height="12.3" fill="#ba3388"/><rect x="483.6" y="-14.9" width="15.1" height="12.3" fill="#ba3388"/><rect x="497.7" y="-14.9" width="15.1" height="12.3" fill="#ba3388"/><rect x="511.9" y="-14.9" width="15.1" height="12.3" fill="#ba3388"/><rect x="526.0" y="-14.9" width="15.1" height="12.3" fill="#ba3388"/><rect x="540.1" y="-14.9" width="15.1" height="12.3" fill="#ba3388"/><rect x="554.3" y="-14.9" width="15.1" height="12.3" fill="#ba3388"/><rect x="568.4" y="-14.9" width="15.1" height="12.3" fill="#ba3388"/><rect x="582.6" y="-14.9" width="15.1" height="12.3" fill="#ba3388"/><rect x="596.7" y="-14.9" width="15.1" height="12.3" fill="#ba3388"/><rect x="610.8" y="-14.9" width="15.1" height="12.3" fill="#ba3388"/><rect x="625.0" y="-14.9" width="15.1" height="12.3" fill="#ba3388"/><rect x="639.1" y="-14.9" width="15.1" height="12.3" fill="#ba3388"/><rect x="653.3" y="-14.9" width="15.1" height="12.3" fill="#ba3388"/><rect x="667.4" y="-14.9" width="15.1" height="12.3" fill="#ba3388"/><rect x="681.5" y="-14.9" width="15.1" height="12.3" fill="#ba3388"/><rect x="695.7" y="-14.9" width="15.1" height="12.3" fill="#ba3388"/><rect x="709.8" y="-14.9" width="15.1" height="12.3" fill="#ba3388"/><rect x="724.0" y="-14.9" width="15.1" height="12.3" fill="#ba3388"/><rect x="738.1" y="-14.9" width="15.1" height="12.3" fill="#ba3388"/><rect x="214.9" y="-3.6" width="15.1" height="12.3" fill="#ba3388"/><rect x="229.1" y="-3.6" width="15.1" height="12.3" fill="#ba3388"/><rect x="243.2" y="-3.6" width="15.1" height="12.3" fill="#ba3388"/><rect x="257.3" y="-3.6" width="15.1" height="12.3" fill="#ba3388"/><rect x="271.5" y="-3.6" width="15.1" height="12.3" fill="#ba3388"/><rect x="285.6" y="-3.6" width="15.1" height="12.3" fill="#ba3388"/><rect x="299.8" y="-3.6" width="15.1" height="12.3" fill="#ba3388"/><rect x="313.9" y="-3.6" width="15.1" height="12.3" fill="#ba3388"/><rect x="328.0" y="-3.6" width="15.1" height="12.3" fill="#ba3388"/><rect x="342.2" y="-3.6" width="15.1" height="12.3" fill="#ba3388"/><rect x="356.3" y="-3.6" width="15.1" height="12.3" fill="#ba3388"/><rect x="370.5" y="-3.6" width="15.1" height="12.3" fill="#ba3388"/><rect x="384.6" y="-3.6" width="15.1" height="12.3" fill="#ba3388"/><rect x="398.7" y="-3.6" width="15.1" height="12.3" fill="#ba3388"/><rect x="412.9" y="-3.6" width="15.1" height="12.3" fill="#ba3388"/><rect x="427.0" y="-3.6" width="15.1" height="12.3" fill="#ba3388"/><rect x="441.2" y="-3.6" width="15.1" height="12.3" fill="#ba3388"/><rect x="455.3" y="-3.6" width="15.1" height="12.3" fill="#ba3388"/><rect x="469.4" y="-3.6" width="15.1" height="12.3" fill="#ba3388"/><rect x="483.6" y="-3.6" width="15.1" height="12.3" fill="#ba3388"/><rect x="497.7" y="-3.6" width="15.1" height="12.3" fill="#ba3388"/><rect x="511.9" y="-3.6" width="15.1" height="12.3" fill="#ba3388"/><rect x="526.0" y="-3.6" width="15.1" height="12.3" fill="#ba3388"/><rect x="540.1" y="-3.6" width="15.1" height="12.3" fill="#ba3388"/><rect x="554.3" y="-3.6" width="15.1" height="12.3" fill="#ba3388"/><rect x="568.4" y="-3.6" width="15.1" height="12.3" fill="#ba3388"/><rect x="582.6" y="-3.6" width="15.1" height="12.3" fill="#ba3388"/><rect x="596.7" y="-3.6" width="15.1" height="12.3" fill="#ba3388"/><rect x="610.8" y="-3.6" width="15.1" height="12.3" fill="#ba3388"/><rect x="625.0" y="-3.6" width="15.1" height="12.3" fill="#ba3388"/><rect x="639.1" y="-3.6" width="15.1" height="12.3" fill="#ba3388"/><rect x="653.3" y="-3.6" width="15.1" height="12.3" fill="#ba3388"/><rect x="667.4" y="-3.6" width="15.1" height="12.3" fill="#ba3388"/><rect x="681.5" y="-3.6" width="15.1" height="12.3" fill="#ba3388"/><rect x="695.7" y="-3.6" width="15.1" height="12.3" fill="#ba3388"/><rect x="709.8" y="-3.6" width="15.1" height="12.3" fill="#ba3388"/><rect x="724.0" y="-3.6" width="15.1" height="12.3" fill="#ba3388"/><rect x="738.1" y="-3.6" width="15.1" height="12.3" fill="#ba3388"/><rect x="214.9" y="7.8" width="15.1" height="12.3" fill="#ba3388"/><rect x="229.1" y="7.8" width="15.1" height="12.3" fill="#ba3388"/><rect x="243.2" y="7.8" width="15.1" height="12.3" fill="#ba3388"/><rect x="257.3" y="7.8" width="15.1" height="12.3" fill="#ba3388"/><rect x="271.5" y="7.8" width="15.1" height="12.3" fill="#ba3388"/><rect x="285.6" y="7.8" width="15.1" height="12.3" fill="#ba3388"/><rect x="299.8" y="7.8" width="15.1" height="12.3" fill="#ba3388"/><rect x="313.9" y="7.8" width="15.1" height="12.3" fill="#ba3388"/><rect x="328.0" y="7.8" width="15.1" height="12.3" fill="#ba3388"/><rect x="342.2" y="7.8" width="15.1" height="12.3" fill="#ba3388"/><rect x="356.3" y="7.8" width="15.1" height="12.3" fill="#ba3388"/><rect x="370.5" y="7.8" width="15.1" height="12.3" fill="#ba3388"/><rect x="384.6" y="7.8" width="15.1" height="12.3" fill="#ba3388"/><rect x="398.7" y="7.8" width="15.1" height="12.3" fill="#ba3388"/><rect x="412.9" y="7.8" width="15.1" height="12.3" fill="#ba3388"/><rect x="427.0" y="7.8" width="15.1" height="12.3" fill="#ba3388"/><rect x="441.2" y="7.8" width="15.1" height="12.3" fill="#ba3388"/><rect x="455.3" y="7.8" width="15.1" height="12.3" fill="#ba3388"/><rect x="469.4" y="7.8" width="15.1" height="12.3" fill="#ba3388"/><rect x="483.6" y="7.8" width="15.1" height="12.3" fill="#ba3388"/><rect x="497.7" y="7.8" width="15.1" height="12.3" fill="#ba3388"/><rect x="511.9" y="7.8" width="15.1" height="12.3" fill="#ba3388"/><rect x="526.0" y="7.8" width="15.1" height="12.3" fill="#ba3388"/><rect x="540.1" y="7.8" width="15.1" height="12.3" fill="#ba3388"/><rect x="554.3" y="7.8" width="15.1" height="12.3" fill="#ba3388"/><rect x="568.4" y="7.8" width="15.1" height="12.3" fill="#ba3388"/><rect x="582.6" y="7.8" width="15.1" height="12.3" fill="#ba3388"/><rect x="596.7" y="7.8" width="15.1" height="12.3" fill="#ba3388"/><rect x="610.8" y="7.8" width="15.1" height="12.3" fill="#ba3388"/><rect x="625.0" y="7.8" width="15.1" height="12.3" fill="#ba3388"/><rect x="639.1" y="7.8" width="15.1" height="12.3" fill="#ba3388"/><rect x="653.3" y="7.8" width="15.1" height="12.3" fill="#ba3388"/><rect x="667.4" y="7.8" width="15.1" height="12.3" fill="#ba3388"/><rect x="681.5" y="7.8" width="15.1" height="12.3" fill="#ba3388"/><rect x="695.7" y="7.8" width="15.1" height="12.3" fill="#ba3388"/><rect x="709.8" y="7.8" width="15.1" height="12.3" fill="#ba3388"/><rect x="724.0" y="7.8" width="15.1" height="12.3" fill="#ba3388"/><rect x="738.1" y="7.8" width="15.1" height="12.3" fill="#ba3388"/><rect x="214.9" y="19.1" width="15.1" height="12.3" fill="#ba3388"/><rect x="229.1" y="19.1" width="15.1" height="12.3" fill="#ba3388"/><rect x="243.2" y="19.1" width="15.1" height="12.3" fill="#ba3388"/><rect x="257.3" y="19.1" width="15.1" height="12.3" fill="#ba3388"/><rect x="271.5" y="19.1" width="15.1" height="12.3" fill="#ba3388"/><rect x="285.6" y="19.1" width="15.1" height="12.3" fill="#ba3388"/><rect x="299.8" y="19.1" width="15.1" height="12.3" fill="#ba3388"/><rect x="313.9" y="19.1" width="15.1" height="12.3" fill="#ba3388"/><rect x="328.0" y="19.1" width="15.1" height="12.3" fill="#ba3388"/><rect x="342.2" y="19.1" width="15.1" height="12.3" fill="#ba3388"/><rect x="356.3" y="19.1" width="15.1" height="12.3" fill="#ba3388"/><rect x="370.5" y="19.1" width="15.1" height="12.3" fill="#ba3388"/><rect x="384.6" y="19.1" width="15.1" height="12.3" fill="#ba3388"/><rect x="398.7" y="19.1" width="15.1" height="12.3" fill="#ba3388"/><rect x="412.9" y="19.1" width="15.1" height="12.3" fill="#ba3388"/><rect x="427.0" y="19.1" width="15.1" height="12.3" fill="#ba3388"/><rect x="441.2" y="19.1" width="15.1" height="12.3" fill="#ba3388"/><rect x="455.3" y="19.1" width="15.1" height="12.3" fill="#ba3388"/><rect x="469.4" y="19.1" width="15.1" height="12.3" fill="#ba3388"/><rect x="483.6" y="19.1" width="15.1" height="12.3" fill="#ba3388"/><rect x="497.7" y="19.1" width="15.1" height="12.3" fill="#ba3388"/><rect x="511.9" y="19.1" width="15.1" height="12.3" fill="#ba3388"/><rect x="526.0" y="19.1" width="15.1" height="12.3" fill="#ba3388"/><rect x="540.1" y="19.1" width="15.1" height="12.3" fill="#ba3388"/><rect x="554.3" y="19.1" width="15.1" height="12.3" fill="#ba3388"/><rect x="568.4" y="19.1" width="15.1" height="12.3" fill="#ba3388"/><rect x="582.6" y="19.1" width="15.1" height="12.3" fill="#ba3388"/><rect x="596.7" y="19.1" width="15.1" height="12.3" fill="#ba3388"/><rect x="610.8" y="19.1" width="15.1" height="12.3" fill="#ba3388"/><rect x="625.0" y="19.1" width="15.1" height="12.3" fill="#ba3388"/><rect x="639.1" y="19.1" width="15.1" height="12.3" fill="#ba3388"/><rect x="653.3" y="19.1" width="15.1" height="12.3" fill="#ba3388"/><rect x="667.4" y="19.1" width="15.1" height="12.3" fill="#ba3388"/><rect x="681.5" y="19.1" width="15.1" height="12.3" fill="#ba3388"/><rect x="695.7" y="19.1" width="15.1" height="12.3" fill="#ba3388"/><rect x="709.8" y="19.1" width="15.1" height="12.3" fill="#ba3388"/><rect x="724.0" y="19.1" width="15.1" height="12.3" fill="#ba3388"/><rect x="738.1" y="19.1" width="15.1" height="12.3" fill="#ba3388"/><rect x="214.9" y="30.4" width="15.1" height="12.3" fill="#b12a90"/><rect x="229.1" y="30.4" width="15.1" height="12.3" fill="#b12a90"/><rect x="243.2" y="30.4" width="15.1" height="12.3" fill="#b12a90"/><rect x="257.3" y="30.4" width="15.1" height="12.3" fill="#b12a90"/><rect x="271.5" y="30.4" width="15.1" height="12.3" fill="#b12a90"/><rect x="285.6" y="30.4" width="15.1" height="12.3" fill="#b12a90"/><rect x="299.8" y="30.4" width="15.1" height="12.3" fill="#b12a90"/><rect x="313.9" y="30.4" width="15.1" height="12.3" fill="#b12a90"/><rect x="328.0" y="30.4" width="15.1" height="12.3" fill="#b12a90"/><rect x="342.2" y="30.4" width="15.1" height="12.3" fill="#b12a90"/><rect x="356.3" y="30.4" width="15.1" height="12.3" fill="#b12a90"/><rect x="370.5" y="30.4" width="15.1" height="12.3" fill="#b12a90"/><rect x="384.6" y="30.4" width="15.1" height="12.3" fill="#b12a90"/><rect x="398.7" y="30.4" width="15.1" height="12.3" fill="#b12a90"/><rect x="412.9" y="30.4" width="15.1" height="12.3" fill="#b12a90"/><rect x="427.0" y="30.4" width="15.1" height="12.3" fill="#b12a90"/><rect x="441.2" y="30.4" width="15.1" height="12.3" fill="#b12a90"/><rect x="455.3" y="30.4" width="15.1" height="12.3" fill="#b12a90"/><rect x="469.4" y="30.4" width="15.1" height="12.3" fill="#b12a90"/><rect x="483.6" y="30.4" width="15.1" height="12.3" fill="#b12a90"/><rect x="497.7" y="30.4" width="15.1" height="12.3" fill="#b12a90"/><rect x="511.9" y="30.4" width="15.1" height="12.3" fill="#b12a90"/><rect x="526.0" y="30.4" width="15.1" height="12.3" fill="#b12a90"/><rect x="540.1" y="30.4" width="15.1" height="12.3" fill="#b12a90"/><rect x="554.3" y="30.4" width="15.1" height="12.3" fill="#b12a90"/><rect x="568.4" y="30.4" width="15.1" height="12.3" fill="#b12a90"/><rect x="582.6" y="30.4" width="15.1" height="12.3" fill="#b12a90"/><rect x="596.7" y="30.4" width="15.1" height="12.3" fill="#b12a90"/><rect x="610.8" y="30.4" width="15.1" height="12.3" fill="#b12a90"/><rect x="625.0" y="30.4" width="15.1" height="12.3" fill="#b12a90"/><rect x="639.1" y="30.4" width="15.1" height="12.3" fill="#9a169f"/><rect x="653.3" y="30.4" width="15.1" height="12.3" fill="#9a169f"/><rect x="667.4" y="30.4" width="15.1" height="12.3" fill="#9a169f"/><rect x="681.5" y="30.4" width="15.1" height="12.3" fill="#9a169f"/><rect x="695.7" y="30.4" width="15.1" height="12.3" fill="#9a169f"/><rect x="709.8" y="30.4" width="15.1" height="12.3" fill="#9a169f"/><rect x="724.0" y="30.4" width="15.1" height="12.3" fill="#9a169f"/><rect x="738.1" y="30.4" width="15.1" height="12.3" fill="#9a169f"/><rect x="214.9" y="41.8" width="15.1" height="12.3" fill="#b12a90"/><rect x="229.1" y="41.8" width="15.1" height="12.3" fill="#b12a90"/><rect x="243.2" y="41.8" width="15.1" height="12.3" fill="#b12a90"/><rect x="257.3" y="41.8" width="15.1" height="12.3" fill="#b12a90"/><rect x="271.5" y="41.8" width="15.1" height="12.3" fill="#b12a90"/><rect x="285.6" y="41.8" width="15.1" height="12.3" fill="#b12a90"/><rect x="299.8" y="41.8" width="15.1" height="12.3" fill="#b12a90"/><rect x="313.9" y="41.8" width="15.1" height="12.3" fill="#b12a90"/><rect x="328.0" y="41.8" width="15.1" height="12.3" fill="#b12a90"/><rect x="342.2" y="41.8" width="15.1" height="12.3" fill="#b12a90"/><rect x="356.3" y="41.8" width="15.1" height="12.3" fill="#b12a90"/><rect x="370.5" y="41.8" width="15.1" height="12.3" fill="#b12a90"/><rect x="384.6" y="41.8" width="15.1" height="12.3" fill="#b12a90"/><rect x="398.7" y="41.8" width="15.1" height="12.3" fill="#b12a90"/><rect x="412.9" y="41.8" width="15.1" height="12.3" fill="#b12a90"/><rect x="427.0" y="41.8" width="15.1" height="12.3" fill="#b12a90"/><rect x="441.2" y="41.8" width="15.1" height="12.3" fill="#b12a90"/><rect x="455.3" y="41.8" width="15.1" height="12.3" fill="#b12a90"/><rect x="469.4" y="41.8" width="15.1" height="12.3" fill="#b12a90"/><rect x="483.6" y="41.8" width="15.1" height="12.3" fill="#b12a90"/><rect x="497.7" y="41.8" width="15.1" height="12.3" fill="#b12a90"/><rect x="511.9" y="41.8" width="15.1" height="12.3" fill="#b12a90"/><rect x="526.0" y="41.8" width="15.1" height="12.3" fill="#b12a90"/><rect x="540.1" y="41.8" width="15.1" height="12.3" fill="#b12a90"/><rect x="554.3" y="41.8" width="15.1" height="12.3" fill="#b12a90"/><rect x="568.4" y="41.8" width="15.1" height="12.3" fill="#b12a90"/><rect x="582.6" y="41.8" width="15.1" height="12.3" fill="#b12a90"/><rect x="596.7" y="41.8" width="15.1" height="12.3" fill="#b12a90"/><rect x="610.8" y="41.8" width="15.1" height="12.3" fill="#a11b9b"/><rect x="625.0" y="41.8" width="15.1" height="12.3" fill="#8808a6"/><rect x="639.1" y="41.8" width="15.1" height="12.3" fill="#7201a8"/><rect x="653.3" y="41.8" width="15.1" height="12.3" fill="#7201a8"/><rect x="667.4" y="41.8" width="15.1" height="12.3" fill="#7201a8"/><rect x="681.5" y="41.8" width="15.1" height="12.3" fill="#7201a8"/><rect x="695.7" y="41.8" width="15.1" height="12.3" fill="#7201a8"/><rect x="709.8" y="41.8" width="15.1" height="12.3" fill="#7201a8"/><rect x="724.0" y="41.8" width="15.1" height="12.3" fill="#7201a8"/><rect x="738.1" y="41.8" width="15.1" height="12.3" fill="#7201a8"/><rect x="214.9" y="53.1" width="15.1" height="12.3" fill="#9a169f"/><rect x="229.1" y="53.1" width="15.1" height="12.3" fill="#9a169f"/><rect x="243.2" y="53.1" width="15.1" height="12.3" fill="#9a169f"/><rect x="257.3" y="53.1" width="15.1" height="12.3" fill="#9a169f"/><rect x="271.5" y="53.1" width="15.1" height="12.3" fill="#9a169f"/><rect x="285.6" y="53.1" width="15.1" height="12.3" fill="#9a169f"/><rect x="299.8" y="53.1" width="15.1" height="12.3" fill="#9a169f"/><rect x="313.9" y="53.1" width="15.1" height="12.3" fill="#9a169f"/><rect x="328.0" y="53.1" width="15.1" height="12.3" fill="#9a169f"/><rect x="342.2" y="53.1" width="15.1" height="12.3" fill="#9a169f"/><rect x="356.3" y="53.1" width="15.1" height="12.3" fill="#9a169f"/><rect x="370.5" y="53.1" width="15.1" height="12.3" fill="#9a169f"/><rect x="384.6" y="53.1" width="15.1" height="12.3" fill="#9a169f"/><rect x="398.7" y="53.1" width="15.1" height="12.3" fill="#9a169f"/><rect x="412.9" y="53.1" width="15.1" height="12.3" fill="#9a169f"/><rect x="427.0" y="53.1" width="15.1" height="12.3" fill="#9a169f"/><rect x="441.2" y="53.1" width="15.1" height="12.3" fill="#9a169f"/><rect x="455.3" y="53.1" width="15.1" height="12.3" fill="#9a169f"/><rect x="469.4" y="53.1" width="15.1" height="12.3" fill="#9a169f"/><rect x="483.6" y="53.1" width="15.1" height="12.3" fill="#9a169f"/><rect x="497.7" y="53.1" width="15.1" height="12.3" fill="#9a169f"/><rect x="511.9" y="53.1" width="15.1" height="12.3" fill="#9a169f"/><rect x="526.0" y="53.1" width="15.1" height="12.3" fill="#9a169f"/><rect x="540.1" y="53.1" width="15.1" height="12.3" fill="#9a169f"/><rect x="554.3" y="53.1" width="15.1" height="12.3" fill="#9a169f"/><rect x="568.4" y="53.1" width="15.1" height="12.3" fill="#9a169f"/><rect x="582.6" y="53.1" width="15.1" height="12.3" fill="#9a169f"/><rect x="596.7" y="53.1" width="15.1" height="12.3" fill="#9a169f"/><rect x="610.8" y="53.1" width="15.1" height="12.3" fill="#8808a6"/><rect x="625.0" y="53.1" width="15.1" height="12.3" fill="#6a00a8"/><rect x="639.1" y="53.1" width="15.1" height="12.3" fill="#6a00a8"/><rect x="653.3" y="53.1" width="15.1" height="12.3" fill="#6a00a8"/><rect x="667.4" y="53.1" width="15.1" height="12.3" fill="#6a00a8"/><rect x="681.5" y="53.1" width="15.1" height="12.3" fill="#6a00a8"/><rect x="695.7" y="53.1" width="15.1" height="12.3" fill="#6a00a8"/><rect x="709.8" y="53.1" width="15.1" height="12.3" fill="#6a00a8"/><rect x="724.0" y="53.1" width="15.1" height="12.3" fill="#6a00a8"/><rect x="738.1" y="53.1" width="15.1" height="12.3" fill="#6a00a8"/><rect x="214.9" y="64.5" width="15.1" height="12.3" fill="#8808a6"/><rect x="229.1" y="64.5" width="15.1" height="12.3" fill="#8808a6"/><rect x="243.2" y="64.5" width="15.1" height="12.3" fill="#8808a6"/><rect x="257.3" y="64.5" width="15.1" height="12.3" fill="#8808a6"/><rect x="271.5" y="64.5" width="15.1" height="12.3" fill="#8808a6"/><rect x="285.6" y="64.5" width="15.1" height="12.3" fill="#8808a6"/><rect x="299.8" y="64.5" width="15.1" height="12.3" fill="#8808a6"/><rect x="313.9" y="64.5" width="15.1" height="12.3" fill="#8808a6"/><rect x="328.0" y="64.5" width="15.1" height="12.3" fill="#8808a6"/><rect x="342.2" y="64.5" width="15.1" height="12.3" fill="#8808a6"/><rect x="356.3" y="64.5" width="15.1" height="12.3" fill="#8808a6"/><rect x="370.5" y="64.5" width="15.1" height="12.3" fill="#8808a6"/><rect x="384.6" y="64.5" width="15.1" height="12.3" fill="#8808a6"/><rect x="398.7" y="64.5" width="15.1" height="12.3" fill="#8808a6"/><rect x="412.9" y="64.5" width="15.1" height="12.3" fill="#8808a6"/><rect x="427.0" y="64.5" width="15.1" height="12.3" fill="#8808a6"/><rect x="441.2" y="64.5" width="15.1" height="12.3" fill="#8808a6"/><rect x="455.3" y="64.5" width="15.1" height="12.3" fill="#8808a6"/><rect x="469.4" y="64.5" width="15.1" height="12.3" fill="#8808a6"/><rect x="483.6" y="64.5" width="15.1" height="12.3" fill="#8808a6"/><rect x="497.7" y="64.5" width="15.1" height="12.3" fill="#8808a6"/><rect x="511.9" y="64.5" width="15.1" height="12.3" fill="#8808a6"/><rect x="526.0" y="64.5" width="15.1" height="12.3" fill="#8808a6"/><rect x="540.1" y="64.5" width="15.1" height="12.3" fill="#8808a6"/><rect x="554.3" y="64.5" width="15.1" height="12.3" fill="#8808a6"/><rect x="568.4" y="64.5" width="15.1" height="12.3" fill="#8808a6"/><rect x="582.6" y="64.5" width="15.1" height="12.3" fill="#8808a6"/><rect x="596.7" y="64.5" width="15.1" height="12.3" fill="#8808a6"/><rect x="610.8" y="64.5" width="15.1" height="12.3" fill="#7201a8"/><rect x="625.0" y="64.5" width="15.1" height="12.3" fill="#6600a7"/><rect x="639.1" y="64.5" width="15.1" height="12.3" fill="#6600a7"/><rect x="653.3" y="64.5" width="15.1" height="12.3" fill="#6600a7"/><rect x="667.4" y="64.5" width="15.1" height="12.3" fill="#6600a7"/><rect x="681.5" y="64.5" width="15.1" height="12.3" fill="#6600a7"/><rect x="695.7" y="64.5" width="15.1" height="12.3" fill="#6600a7"/><rect x="709.8" y="64.5" width="15.1" height="12.3" fill="#6600a7"/><rect x="724.0" y="64.5" width="15.1" height="12.3" fill="#6600a7"/><rect x="738.1" y="64.5" width="15.1" height="12.3" fill="#6600a7"/><rect x="214.9" y="75.8" width="15.1" height="12.3" fill="#6600a7"/><rect x="229.1" y="75.8" width="15.1" height="12.3" fill="#6600a7"/><rect x="243.2" y="75.8" width="15.1" height="12.3" fill="#6600a7"/><rect x="257.3" y="75.8" width="15.1" height="12.3" fill="#6600a7"/><rect x="271.5" y="75.8" width="15.1" height="12.3" fill="#6600a7"/><rect x="285.6" y="75.8" width="15.1" height="12.3" fill="#6600a7"/><rect x="299.8" y="75.8" width="15.1" height="12.3" fill="#6600a7"/><rect x="313.9" y="75.8" width="15.1" height="12.3" fill="#6600a7"/><rect x="328.0" y="75.8" width="15.1" height="12.3" fill="#6600a7"/><rect x="342.2" y="75.8" width="15.1" height="12.3" fill="#6600a7"/><rect x="356.3" y="75.8" width="15.1" height="12.3" fill="#6600a7"/><rect x="370.5" y="75.8" width="15.1" height="12.3" fill="#6600a7"/><rect x="384.6" y="75.8" width="15.1" height="12.3" fill="#6600a7"/><rect x="398.7" y="75.8" width="15.1" height="12.3" fill="#6600a7"/><rect x="412.9" y="75.8" width="15.1" height="12.3" fill="#6600a7"/><rect x="427.0" y="75.8" width="15.1" height="12.3" fill="#6600a7"/><rect x="441.2" y="75.8" width="15.1" height="12.3" fill="#6600a7"/><rect x="455.3" y="75.8" width="15.1" height="12.3" fill="#6600a7"/><rect x="469.4" y="75.8" width="15.1" height="12.3" fill="#6600a7"/><rect x="483.6" y="75.8" width="15.1" height="12.3" fill="#6600a7"/><rect x="497.7" y="75.8" width="15.1" height="12.3" fill="#6600a7"/><rect x="511.9" y="75.8" width="15.1" height="12.3" fill="#6600a7"/><rect x="526.0" y="75.8" width="15.1" height="12.3" fill="#6600a7"/><rect x="540.1" y="75.8" width="15.1" height="12.3" fill="#6600a7"/><rect x="554.3" y="75.8" width="15.1" height="12.3" fill="#6600a7"/><rect x="568.4" y="75.8" width="15.1" height="12.3" fill="#6600a7"/><rect x="582.6" y="75.8" width="15.1" height="12.3" fill="#6600a7"/><rect x="596.7" y="75.8" width="15.1" height="12.3" fill="#6600a7"/><rect x="610.8" y="75.8" width="15.1" height="12.3" fill="#6600a7"/><rect x="625.0" y="75.8" width="15.1" height="12.3" fill="#6600a7"/><rect x="639.1" y="75.8" width="15.1" height="12.3" fill="#6600a7"/><rect x="653.3" y="75.8" width="15.1" height="12.3" fill="#6600a7"/><rect x="667.4" y="75.8" width="15.1" height="12.3" fill="#6600a7"/><rect x="681.5" y="75.8" width="15.1" height="12.3" fill="#6600a7"/><rect x="695.7" y="75.8" width="15.1" height="12.3" fill="#6600a7"/><rect x="709.8" y="75.8" width="15.1" height="12.3" fill="#6600a7"/><rect x="724.0" y="75.8" width="15.1" height="12.3" fill="#6600a7"/><rect x="738.1" y="75.8" width="15.1" height="12.3" fill="#6600a7"/><rect x="214.9" y="87.1" width="15.1" height="12.3" fill="#6300a7"/><rect x="229.1" y="87.1" width="15.1" height="12.3" fill="#6300a7"/><rect x="243.2" y="87.1" width="15.1" height="12.3" fill="#6300a7"/><rect x="257.3" y="87.1" width="15.1" height="12.3" fill="#6300a7"/><rect x="271.5" y="87.1" width="15.1" height="12.3" fill="#6300a7"/><rect x="285.6" y="87.1" width="15.1" height="12.3" fill="#6300a7"/><rect x="299.8" y="87.1" width="15.1" height="12.3" fill="#6300a7"/><rect x="313.9" y="87.1" width="15.1" height="12.3" fill="#6300a7"/><rect x="328.0" y="87.1" width="15.1" height="12.3" fill="#6300a7"/><rect x="342.2" y="87.1" width="15.1" height="12.3" fill="#6300a7"/><rect x="356.3" y="87.1" width="15.1" height="12.3" fill="#6300a7"/><rect x="370.5" y="87.1" width="15.1" height="12.3" fill="#6300a7"/><rect x="384.6" y="87.1" width="15.1" height="12.3" fill="#6300a7"/><rect x="398.7" y="87.1" width="15.1" height="12.3" fill="#6300a7"/><rect x="412.9" y="87.1" width="15.1" height="12.3" fill="#6300a7"/><rect x="427.0" y="87.1" width="15.1" height="12.3" fill="#6300a7"/><rect x="441.2" y="87.1" width="15.1" height="12.3" fill="#6300a7"/><rect x="455.3" y="87.1" width="15.1" height="12.3" fill="#6300a7"/><rect x="469.4" y="87.1" width="15.1" height="12.3" fill="#6300a7"/><rect x="483.6" y="87.1" width="15.1" height="12.3" fill="#6300a7"/><rect x="497.7" y="87.1" width="15.1" height="12.3" fill="#6300a7"/><rect x="511.9" y="87.1" width="15.1" height="12.3" fill="#6300a7"/><rect x="526.0" y="87.1" width="15.1" height="12.3" fill="#6300a7"/><rect x="540.1" y="87.1" width="15.1" height="12.3" fill="#6300a7"/><rect x="554.3" y="87.1" width="15.1" height="12.3" fill="#6300a7"/><rect x="568.4" y="87.1" width="15.1" height="12.3" fill="#6300a7"/><rect x="582.6" y="87.1" width="15.1" height="12.3" fill="#6300a7"/><rect x="596.7" y="87.1" width="15.1" height="12.3" fill="#6300a7"/><rect x="610.8" y="87.1" width="15.1" height="12.3" fill="#6300a7"/><rect x="625.0" y="87.1" width="15.1" height="12.3" fill="#6300a7"/><rect x="639.1" y="87.1" width="15.1" height="12.3" fill="#6300a7"/><rect x="653.3" y="87.1" width="15.1" height="12.3" fill="#6300a7"/><rect x="667.4" y="87.1" width="15.1" height="12.3" fill="#6300a7"/><rect x="681.5" y="87.1" width="15.1" height="12.3" fill="#6300a7"/><rect x="695.7" y="87.1" width="15.1" height="12.3" fill="#6300a7"/><rect x="709.8" y="87.1" width="15.1" height="12.3" fill="#6300a7"/><rect x="724.0" y="87.1" width="15.1" height="12.3" fill="#6300a7"/><rect x="738.1" y="87.1" width="15.1" height="12.3" fill="#6300a7"/><rect x="214.9" y="98.5" width="15.1" height="12.3" fill="#5e01a6"/><rect x="229.1" y="98.5" width="15.1" height="12.3" fill="#5e01a6"/><rect x="243.2" y="98.5" width="15.1" height="12.3" fill="#5e01a6"/><rect x="257.3" y="98.5" width="15.1" height="12.3" fill="#5e01a6"/><rect x="271.5" y="98.5" width="15.1" height="12.3" fill="#5e01a6"/><rect x="285.6" y="98.5" width="15.1" height="12.3" fill="#5e01a6"/><rect x="299.8" y="98.5" width="15.1" height="12.3" fill="#5e01a6"/><rect x="313.9" y="98.5" width="15.1" height="12.3" fill="#5e01a6"/><rect x="328.0" y="98.5" width="15.1" height="12.3" fill="#5e01a6"/><rect x="342.2" y="98.5" width="15.1" height="12.3" fill="#5e01a6"/><rect x="356.3" y="98.5" width="15.1" height="12.3" fill="#5e01a6"/><rect x="370.5" y="98.5" width="15.1" height="12.3" fill="#5e01a6"/><rect x="384.6" y="98.5" width="15.1" height="12.3" fill="#5e01a6"/><rect x="398.7" y="98.5" width="15.1" height="12.3" fill="#5e01a6"/><rect x="412.9" y="98.5" width="15.1" height="12.3" fill="#5e01a6"/><rect x="427.0" y="98.5" width="15.1" height="12.3" fill="#5e01a6"/><rect x="441.2" y="98.5" width="15.1" height="12.3" fill="#5e01a6"/><rect x="455.3" y="98.5" width="15.1" height="12.3" fill="#5e01a6"/><rect x="469.4" y="98.5" width="15.1" height="12.3" fill="#5e01a6"/><rect x="483.6" y="98.5" width="15.1" height="12.3" fill="#5e01a6"/><rect x="497.7" y="98.5" width="15.1" height="12.3" fill="#5e01a6"/><rect x="511.9" y="98.5" width="15.1" height="12.3" fill="#5e01a6"/><rect x="526.0" y="98.5" width="15.1" height="12.3" fill="#5e01a6"/><rect x="540.1" y="98.5" width="15.1" height="12.3" fill="#5e01a6"/><rect x="554.3" y="98.5" width="15.1" height="12.3" fill="#5e01a6"/><rect x="568.4" y="98.5" width="15.1" height="12.3" fill="#5e01a6"/><rect x="582.6" y="98.5" width="15.1" height="12.3" fill="#5e01a6"/><rect x="596.7" y="98.5" width="15.1" height="12.3" fill="#5e01a6"/><rect x="610.8" y="98.5" width="15.1" height="12.3" fill="#5e01a6"/><rect x="625.0" y="98.5" width="15.1" height="12.3" fill="#5e01a6"/><rect x="639.1" y="98.5" width="15.1" height="12.3" fill="#5e01a6"/><rect x="653.3" y="98.5" width="15.1" height="12.3" fill="#5e01a6"/><rect x="667.4" y="98.5" width="15.1" height="12.3" fill="#5e01a6"/><rect x="681.5" y="98.5" width="15.1" height="12.3" fill="#5e01a6"/><rect x="695.7" y="98.5" width="15.1" height="12.3" fill="#5e01a6"/><rect x="709.8" y="98.5" width="15.1" height="12.3" fill="#5e01a6"/><rect x="724.0" y="98.5" width="15.1" height="12.3" fill="#5e01a6"/><rect x="738.1" y="98.5" width="15.1" height="12.3" fill="#5e01a6"/><rect x="214.9" y="109.8" width="15.1" height="12.3" fill="#5901a5"/><rect x="229.1" y="109.8" width="15.1" height="12.3" fill="#5901a5"/><rect x="243.2" y="109.8" width="15.1" height="12.3" fill="#5901a5"/><rect x="257.3" y="109.8" width="15.1" height="12.3" fill="#5901a5"/><rect x="271.5" y="109.8" width="15.1" height="12.3" fill="#5901a5"/><rect x="285.6" y="109.8" width="15.1" height="12.3" fill="#5901a5"/><rect x="299.8" y="109.8" width="15.1" height="12.3" fill="#5901a5"/><rect x="313.9" y="109.8" width="15.1" height="12.3" fill="#5901a5"/><rect x="328.0" y="109.8" width="15.1" height="12.3" fill="#5901a5"/><rect x="342.2" y="109.8" width="15.1" height="12.3" fill="#5901a5"/><rect x="356.3" y="109.8" width="15.1" height="12.3" fill="#5901a5"/><rect x="370.5" y="109.8" width="15.1" height="12.3" fill="#5901a5"/><rect x="384.6" y="109.8" width="15.1" height="12.3" fill="#5901a5"/><rect x="398.7" y="109.8" width="15.1" height="12.3" fill="#5901a5"/><rect x="412.9" y="109.8" width="15.1" height="12.3" fill="#5901a5"/><rect x="427.0" y="109.8" width="15.1" height="12.3" fill="#5901a5"/><rect x="441.2" y="109.8" width="15.1" height="12.3" fill="#5901a5"/><rect x="455.3" y="109.8" width="15.1" height="12.3" fill="#5901a5"/><rect x="469.4" y="109.8" width="15.1" height="12.3" fill="#5901a5"/><rect x="483.6" y="109.8" width="15.1" height="12.3" fill="#5901a5"/><rect x="497.7" y="109.8" width="15.1" height="12.3" fill="#5901a5"/><rect x="511.9" y="109.8" width="15.1" height="12.3" fill="#5901a5"/><rect x="526.0" y="109.8" width="15.1" height="12.3" fill="#5901a5"/><rect x="540.1" y="109.8" width="15.1" height="12.3" fill="#5901a5"/><rect x="554.3" y="109.8" width="15.1" height="12.3" fill="#5901a5"/><rect x="568.4" y="109.8" width="15.1" height="12.3" fill="#5901a5"/><rect x="582.6" y="109.8" width="15.1" height="12.3" fill="#5901a5"/><rect x="596.7" y="109.8" width="15.1" height="12.3" fill="#5901a5"/><rect x="610.8" y="109.8" width="15.1" height="12.3" fill="#5901a5"/><rect x="625.0" y="109.8" width="15.1" height="12.3" fill="#5901a5"/><rect x="639.1" y="109.8" width="15.1" height="12.3" fill="#5901a5"/><rect x="653.3" y="109.8" width="15.1" height="12.3" fill="#5901a5"/><rect x="667.4" y="109.8" width="15.1" height="12.3" fill="#5901a5"/><rect x="681.5" y="109.8" width="15.1" height="12.3" fill="#5901a5"/><rect x="695.7" y="109.8" width="15.1" height="12.3" fill="#5901a5"/><rect x="709.8" y="109.8" width="15.1" height="12.3" fill="#5901a5"/><rect x="724.0" y="109.8" width="15.1" height="12.3" fill="#5901a5"/><rect x="738.1" y="109.8" width="15.1" height="12.3" fill="#5901a5"/><rect x="214.9" y="121.2" width="15.1" height="12.3" fill="#5901a5"/><rect x="229.1" y="121.2" width="15.1" height="12.3" fill="#5901a5"/><rect x="243.2" y="121.2" width="15.1" height="12.3" fill="#5901a5"/><rect x="257.3" y="121.2" width="15.1" height="12.3" fill="#5901a5"/><rect x="271.5" y="121.2" width="15.1" height="12.3" fill="#5901a5"/><rect x="285.6" y="121.2" width="15.1" height="12.3" fill="#5901a5"/><rect x="299.8" y="121.2" width="15.1" height="12.3" fill="#5901a5"/><rect x="313.9" y="121.2" width="15.1" height="12.3" fill="#5901a5"/><rect x="328.0" y="121.2" width="15.1" height="12.3" fill="#5901a5"/><rect x="342.2" y="121.2" width="15.1" height="12.3" fill="#5901a5"/><rect x="356.3" y="121.2" width="15.1" height="12.3" fill="#5901a5"/><rect x="370.5" y="121.2" width="15.1" height="12.3" fill="#5901a5"/><rect x="384.6" y="121.2" width="15.1" height="12.3" fill="#5901a5"/><rect x="398.7" y="121.2" width="15.1" height="12.3" fill="#5901a5"/><rect x="412.9" y="121.2" width="15.1" height="12.3" fill="#5901a5"/><rect x="427.0" y="121.2" width="15.1" height="12.3" fill="#5901a5"/><rect x="441.2" y="121.2" width="15.1" height="12.3" fill="#5901a5"/><rect x="455.3" y="121.2" width="15.1" height="12.3" fill="#5901a5"/><rect x="469.4" y="121.2" width="15.1" height="12.3" fill="#5901a5"/><rect x="483.6" y="121.2" width="15.1" height="12.3" fill="#5901a5"/><rect x="497.7" y="121.2" width="15.1" height="12.3" fill="#5901a5"/><rect x="511.9" y="121.2" width="15.1" height="12.3" fill="#5901a5"/><rect x="526.0" y="121.2" width="15.1" height="12.3" fill="#5901a5"/><rect x="540.1" y="121.2" width="15.1" height="12.3" fill="#5901a5"/><rect x="554.3" y="121.2" width="15.1" height="12.3" fill="#5901a5"/><rect x="568.4" y="121.2" width="15.1" height="12.3" fill="#5901a5"/><rect x="582.6" y="121.2" width="15.1" height="12.3" fill="#4e02a2"/><rect x="596.7" y="121.2" width="15.1" height="12.3" fill="#4e02a2"/><rect x="610.8" y="121.2" width="15.1" height="12.3" fill="#4e02a2"/><rect x="625.0" y="121.2" width="15.1" height="12.3" fill="#4e02a2"/><rect x="639.1" y="121.2" width="15.1" height="12.3" fill="#4e02a2"/><rect x="653.3" y="121.2" width="15.1" height="12.3" fill="#4e02a2"/><rect x="667.4" y="121.2" width="15.1" height="12.3" fill="#4e02a2"/><rect x="681.5" y="121.2" width="15.1" height="12.3" fill="#6300a7"/><rect x="695.7" y="121.2" width="15.1" height="12.3" fill="#6300a7"/><rect x="709.8" y="121.2" width="15.1" height="12.3" fill="#6300a7"/><rect x="724.0" y="121.2" width="15.1" height="12.3" fill="#6300a7"/><rect x="738.1" y="121.2" width="15.1" height="12.3" fill="#6300a7"/><rect x="214.9" y="132.5" width="15.1" height="12.3" fill="#5601a4"/><rect x="229.1" y="132.5" width="15.1" height="12.3" fill="#5601a4"/><rect x="243.2" y="132.5" width="15.1" height="12.3" fill="#5601a4"/><rect x="257.3" y="132.5" width="15.1" height="12.3" fill="#5601a4"/><rect x="271.5" y="132.5" width="15.1" height="12.3" fill="#5601a4"/><rect x="285.6" y="132.5" width="15.1" height="12.3" fill="#5601a4"/><rect x="299.8" y="132.5" width="15.1" height="12.3" fill="#5601a4"/><rect x="313.9" y="132.5" width="15.1" height="12.3" fill="#5601a4"/><rect x="328.0" y="132.5" width="15.1" height="12.3" fill="#5601a4"/><rect x="342.2" y="132.5" width="15.1" height="12.3" fill="#5601a4"/><rect x="356.3" y="132.5" width="15.1" height="12.3" fill="#5601a4"/><rect x="370.5" y="132.5" width="15.1" height="12.3" fill="#5601a4"/><rect x="384.6" y="132.5" width="15.1" height="12.3" fill="#5601a4"/><rect x="398.7" y="132.5" width="15.1" height="12.3" fill="#5601a4"/><rect x="412.9" y="132.5" width="15.1" height="12.3" fill="#5601a4"/><rect x="427.0" y="132.5" width="15.1" height="12.3" fill="#5601a4"/><rect x="441.2" y="132.5" width="15.1" height="12.3" fill="#5601a4"/><rect x="455.3" y="132.5" width="15.1" height="12.3" fill="#5601a4"/><rect x="469.4" y="132.5" width="15.1" height="12.3" fill="#5601a4"/><rect x="483.6" y="132.5" width="15.1" height="12.3" fill="#5601a4"/><rect x="497.7" y="132.5" width="15.1" height="12.3" fill="#5601a4"/><rect x="511.9" y="132.5" width="15.1" height="12.3" fill="#5601a4"/><rect x="526.0" y="132.5" width="15.1" height="12.3" fill="#5601a4"/><rect x="540.1" y="132.5" width="15.1" height="12.3" fill="#5601a4"/><rect x="554.3" y="132.5" width="15.1" height="12.3" fill="#5601a4"/><rect x="568.4" y="132.5" width="15.1" height="12.3" fill="#5601a4"/><rect x="582.6" y="132.5" width="15.1" height="12.3" fill="#4903a0"/><rect x="596.7" y="132.5" width="15.1" height="12.3" fill="#4903a0"/><rect x="610.8" y="132.5" width="15.1" height="12.3" fill="#4903a0"/><rect x="625.0" y="132.5" width="15.1" height="12.3" fill="#4903a0"/><rect x="639.1" y="132.5" width="15.1" height="12.3" fill="#4903a0"/><rect x="653.3" y="132.5" width="15.1" height="12.3" fill="#4903a0"/><rect x="667.4" y="132.5" width="15.1" height="12.3" fill="#7201a8"/><rect x="681.5" y="132.5" width="15.1" height="12.3" fill="#b12a90"/><rect x="695.7" y="132.5" width="15.1" height="12.3" fill="#b12a90"/><rect x="709.8" y="132.5" width="15.1" height="12.3" fill="#b12a90"/><rect x="724.0" y="132.5" width="15.1" height="12.3" fill="#b12a90"/><rect x="738.1" y="132.5" width="15.1" height="12.3" fill="#b12a90"/><rect x="214.9" y="143.8" width="15.1" height="12.3" fill="#5e01a6"/><rect x="229.1" y="143.8" width="15.1" height="12.3" fill="#5e01a6"/><rect x="243.2" y="143.8" width="15.1" height="12.3" fill="#5e01a6"/><rect x="257.3" y="143.8" width="15.1" height="12.3" fill="#5e01a6"/><rect x="271.5" y="143.8" width="15.1" height="12.3" fill="#5e01a6"/><rect x="285.6" y="143.8" width="15.1" height="12.3" fill="#5e01a6"/><rect x="299.8" y="143.8" width="15.1" height="12.3" fill="#5e01a6"/><rect x="313.9" y="143.8" width="15.1" height="12.3" fill="#5e01a6"/><rect x="328.0" y="143.8" width="15.1" height="12.3" fill="#5e01a6"/><rect x="342.2" y="143.8" width="15.1" height="12.3" fill="#5e01a6"/><rect x="356.3" y="143.8" width="15.1" height="12.3" fill="#5e01a6"/><rect x="370.5" y="143.8" width="15.1" height="12.3" fill="#5e01a6"/><rect x="384.6" y="143.8" width="15.1" height="12.3" fill="#5e01a6"/><rect x="398.7" y="143.8" width="15.1" height="12.3" fill="#5e01a6"/><rect x="412.9" y="143.8" width="15.1" height="12.3" fill="#5e01a6"/><rect x="427.0" y="143.8" width="15.1" height="12.3" fill="#5e01a6"/><rect x="441.2" y="143.8" width="15.1" height="12.3" fill="#5e01a6"/><rect x="455.3" y="143.8" width="15.1" height="12.3" fill="#5e01a6"/><rect x="469.4" y="143.8" width="15.1" height="12.3" fill="#5e01a6"/><rect x="483.6" y="143.8" width="15.1" height="12.3" fill="#5e01a6"/><rect x="497.7" y="143.8" width="15.1" height="12.3" fill="#5e01a6"/><rect x="511.9" y="143.8" width="15.1" height="12.3" fill="#5e01a6"/><rect x="526.0" y="143.8" width="15.1" height="12.3" fill="#4903a0"/><rect x="540.1" y="143.8" width="15.1" height="12.3" fill="#4903a0"/><rect x="554.3" y="143.8" width="15.1" height="12.3" fill="#4903a0"/><rect x="568.4" y="143.8" width="15.1" height="12.3" fill="#4903a0"/><rect x="582.6" y="143.8" width="15.1" height="12.3" fill="#4903a0"/><rect x="596.7" y="143.8" width="15.1" height="12.3" fill="#4903a0"/><rect x="610.8" y="143.8" width="15.1" height="12.3" fill="#4903a0"/><rect x="625.0" y="143.8" width="15.1" height="12.3" fill="#4903a0"/><rect x="639.1" y="143.8" width="15.1" height="12.3" fill="#4903a0"/><rect x="653.3" y="143.8" width="15.1" height="12.3" fill="#4903a0"/><rect x="667.4" y="143.8" width="15.1" height="12.3" fill="#8f0da4"/><rect x="681.5" y="143.8" width="15.1" height="12.3" fill="#b6308b"/><rect x="695.7" y="143.8" width="15.1" height="12.3" fill="#b6308b"/><rect x="709.8" y="143.8" width="15.1" height="12.3" fill="#b6308b"/><rect x="724.0" y="143.8" width="15.1" height="12.3" fill="#b6308b"/><rect x="738.1" y="143.8" width="15.1" height="12.3" fill="#b6308b"/><rect x="214.9" y="155.2" width="15.1" height="12.3" fill="#6a00a8"/><rect x="229.1" y="155.2" width="15.1" height="12.3" fill="#6a00a8"/><rect x="243.2" y="155.2" width="15.1" height="12.3" fill="#6a00a8"/><rect x="257.3" y="155.2" width="15.1" height="12.3" fill="#6a00a8"/><rect x="271.5" y="155.2" width="15.1" height="12.3" fill="#6a00a8"/><rect x="285.6" y="155.2" width="15.1" height="12.3" fill="#6a00a8"/><rect x="299.8" y="155.2" width="15.1" height="12.3" fill="#6a00a8"/><rect x="313.9" y="155.2" width="15.1" height="12.3" fill="#6a00a8"/><rect x="328.0" y="155.2" width="15.1" height="12.3" fill="#6a00a8"/><rect x="342.2" y="155.2" width="15.1" height="12.3" fill="#6a00a8"/><rect x="356.3" y="155.2" width="15.1" height="12.3" fill="#6a00a8"/><rect x="370.5" y="155.2" width="15.1" height="12.3" fill="#6a00a8"/><rect x="384.6" y="155.2" width="15.1" height="12.3" fill="#6a00a8"/><rect x="398.7" y="155.2" width="15.1" height="12.3" fill="#6a00a8"/><rect x="412.9" y="155.2" width="15.1" height="12.3" fill="#6a00a8"/><rect x="427.0" y="155.2" width="15.1" height="12.3" fill="#6a00a8"/><rect x="441.2" y="155.2" width="15.1" height="12.3" fill="#6a00a8"/><rect x="455.3" y="155.2" width="15.1" height="12.3" fill="#6a00a8"/><rect x="469.4" y="155.2" width="15.1" height="12.3" fill="#6a00a8"/><rect x="483.6" y="155.2" width="15.1" height="12.3" fill="#6a00a8"/><rect x="497.7" y="155.2" width="15.1" height="12.3" fill="#6a00a8"/><rect x="511.9" y="155.2" width="15.1" height="12.3" fill="#4e02a2"/><rect x="526.0" y="155.2" width="15.1" height="12.3" fill="#4e02a2"/><rect x="540.1" y="155.2" width="15.1" height="12.3" fill="#4e02a2"/><rect x="554.3" y="155.2" width="15.1" height="12.3" fill="#4e02a2"/><rect x="568.4" y="155.2" width="15.1" height="12.3" fill="#4e02a2"/><rect x="582.6" y="155.2" width="15.1" height="12.3" fill="#4e02a2"/><rect x="596.7" y="155.2" width="15.1" height="12.3" fill="#4e02a2"/><rect x="610.8" y="155.2" width="15.1" height="12.3" fill="#4e02a2"/><rect x="625.0" y="155.2" width="15.1" height="12.3" fill="#4e02a2"/><rect x="639.1" y="155.2" width="15.1" height="12.3" fill="#4e02a2"/><rect x="653.3" y="155.2" width="15.1" height="12.3" fill="#4e02a2"/><rect x="667.4" y="155.2" width="15.1" height="12.3" fill="#8808a6"/><rect x="681.5" y="155.2" width="15.1" height="12.3" fill="#b6308b"/><rect x="695.7" y="155.2" width="15.1" height="12.3" fill="#b6308b"/><rect x="709.8" y="155.2" width="15.1" height="12.3" fill="#b6308b"/><rect x="724.0" y="155.2" width="15.1" height="12.3" fill="#b6308b"/><rect x="738.1" y="155.2" width="15.1" height="12.3" fill="#b6308b"/><rect x="214.9" y="166.5" width="15.1" height="12.3" fill="#6300a7"/><rect x="229.1" y="166.5" width="15.1" height="12.3" fill="#6300a7"/><rect x="243.2" y="166.5" width="15.1" height="12.3" fill="#6300a7"/><rect x="257.3" y="166.5" width="15.1" height="12.3" fill="#6300a7"/><rect x="271.5" y="166.5" width="15.1" height="12.3" fill="#6300a7"/><rect x="285.6" y="166.5" width="15.1" height="12.3" fill="#6300a7"/><rect x="299.8" y="166.5" width="15.1" height="12.3" fill="#6300a7"/><rect x="313.9" y="166.5" width="15.1" height="12.3" fill="#6300a7"/><rect x="328.0" y="166.5" width="15.1" height="12.3" fill="#6300a7"/><rect x="342.2" y="166.5" width="15.1" height="12.3" fill="#6300a7"/><rect x="356.3" y="166.5" width="15.1" height="12.3" fill="#6300a7"/><rect x="370.5" y="166.5" width="15.1" height="12.3" fill="#6300a7"/><rect x="384.6" y="166.5" width="15.1" height="12.3" fill="#6300a7"/><rect x="398.7" y="166.5" width="15.1" height="12.3" fill="#6300a7"/><rect x="412.9" y="166.5" width="15.1" height="12.3" fill="#6300a7"/><rect x="427.0" y="166.5" width="15.1" height="12.3" fill="#6300a7"/><rect x="441.2" y="166.5" width="15.1" height="12.3" fill="#6300a7"/><rect x="455.3" y="166.5" width="15.1" height="12.3" fill="#6300a7"/><rect x="469.4" y="166.5" width="15.1" height="12.3" fill="#6300a7"/><rect x="483.6" y="166.5" width="15.1" height="12.3" fill="#6300a7"/><rect x="497.7" y="166.5" width="15.1" height="12.3" fill="#6300a7"/><rect x="511.9" y="166.5" width="15.1" height="12.3" fill="#4903a0"/><rect x="526.0" y="166.5" width="15.1" height="12.3" fill="#4903a0"/><rect x="540.1" y="166.5" width="15.1" height="12.3" fill="#4903a0"/><rect x="554.3" y="166.5" width="15.1" height="12.3" fill="#4903a0"/><rect x="568.4" y="166.5" width="15.1" height="12.3" fill="#4903a0"/><rect x="582.6" y="166.5" width="15.1" height="12.3" fill="#5901a5"/><rect x="596.7" y="166.5" width="15.1" height="12.3" fill="#5901a5"/><rect x="610.8" y="166.5" width="15.1" height="12.3" fill="#5901a5"/><rect x="625.0" y="166.5" width="15.1" height="12.3" fill="#4e02a2"/><rect x="639.1" y="166.5" width="15.1" height="12.3" fill="#4e02a2"/><rect x="653.3" y="166.5" width="15.1" height="12.3" fill="#4e02a2"/><rect x="667.4" y="166.5" width="15.1" height="12.3" fill="#8f0da4"/><rect x="681.5" y="166.5" width="15.1" height="12.3" fill="#b6308b"/><rect x="695.7" y="166.5" width="15.1" height="12.3" fill="#b6308b"/><rect x="709.8" y="166.5" width="15.1" height="12.3" fill="#b6308b"/><rect x="724.0" y="166.5" width="15.1" height="12.3" fill="#b6308b"/><rect x="738.1" y="166.5" width="15.1" height="12.3" fill="#b6308b"/><rect x="214.9" y="177.9" width="15.1" height="12.3" fill="#5601a4"/><rect x="229.1" y="177.9" width="15.1" height="12.3" fill="#5601a4"/><rect x="243.2" y="177.9" width="15.1" height="12.3" fill="#5601a4"/><rect x="257.3" y="177.9" width="15.1" height="12.3" fill="#5601a4"/><rect x="271.5" y="177.9" width="15.1" height="12.3" fill="#5601a4"/><rect x="285.6" y="177.9" width="15.1" height="12.3" fill="#5601a4"/><rect x="299.8" y="177.9" width="15.1" height="12.3" fill="#5601a4"/><rect x="313.9" y="177.9" width="15.1" height="12.3" fill="#5601a4"/><rect x="328.0" y="177.9" width="15.1" height="12.3" fill="#5601a4"/><rect x="342.2" y="177.9" width="15.1" height="12.3" fill="#5601a4"/><rect x="356.3" y="177.9" width="15.1" height="12.3" fill="#5601a4"/><rect x="370.5" y="177.9" width="15.1" height="12.3" fill="#5601a4"/><rect x="384.6" y="177.9" width="15.1" height="12.3" fill="#5601a4"/><rect x="398.7" y="177.9" width="15.1" height="12.3" fill="#5601a4"/><rect x="412.9" y="177.9" width="15.1" height="12.3" fill="#5601a4"/><rect x="427.0" y="177.9" width="15.1" height="12.3" fill="#5601a4"/><rect x="441.2" y="177.9" width="15.1" height="12.3" fill="#5601a4"/><rect x="455.3" y="177.9" width="15.1" height="12.3" fill="#5601a4"/><rect x="469.4" y="177.9" width="15.1" height="12.3" fill="#5601a4"/><rect x="483.6" y="177.9" width="15.1" height="12.3" fill="#5601a4"/><rect x="497.7" y="177.9" width="15.1" height="12.3" fill="#4e02a2"/><rect x="511.9" y="177.9" width="15.1" height="12.3" fill="#4e02a2"/><rect x="526.0" y="177.9" width="15.1" height="12.3" fill="#4e02a2"/><rect x="540.1" y="177.9" width="15.1" height="12.3" fill="#4e02a2"/><rect x="554.3" y="177.9" width="15.1" height="12.3" fill="#6a00a8"/><rect x="568.4" y="177.9" width="15.1" height="12.3" fill="#a51f99"/><rect x="582.6" y="177.9" width="15.1" height="12.3" fill="#a51f99"/><rect x="596.7" y="177.9" width="15.1" height="12.3" fill="#a51f99"/><rect x="610.8" y="177.9" width="15.1" height="12.3" fill="#a51f99"/><rect x="625.0" y="177.9" width="15.1" height="12.3" fill="#7201a8"/><rect x="639.1" y="177.9" width="15.1" height="12.3" fill="#7201a8"/><rect x="653.3" y="177.9" width="15.1" height="12.3" fill="#7201a8"/><rect x="667.4" y="177.9" width="15.1" height="12.3" fill="#b6308b"/><rect x="681.5" y="177.9" width="15.1" height="12.3" fill="#b6308b"/><rect x="695.7" y="177.9" width="15.1" height="12.3" fill="#b6308b"/><rect x="709.8" y="177.9" width="15.1" height="12.3" fill="#b6308b"/><rect x="724.0" y="177.9" width="15.1" height="12.3" fill="#b6308b"/><rect x="738.1" y="177.9" width="15.1" height="12.3" fill="#b6308b"/><rect x="214.9" y="189.2" width="15.1" height="12.3" fill="#4e02a2"/><rect x="229.1" y="189.2" width="15.1" height="12.3" fill="#4e02a2"/><rect x="243.2" y="189.2" width="15.1" height="12.3" fill="#4e02a2"/><rect x="257.3" y="189.2" width="15.1" height="12.3" fill="#4e02a2"/><rect x="271.5" y="189.2" width="15.1" height="12.3" fill="#4e02a2"/><rect x="285.6" y="189.2" width="15.1" height="12.3" fill="#4e02a2"/><rect x="299.8" y="189.2" width="15.1" height="12.3" fill="#4e02a2"/><rect x="313.9" y="189.2" width="15.1" height="12.3" fill="#4e02a2"/><rect x="328.0" y="189.2" width="15.1" height="12.3" fill="#4e02a2"/><rect x="342.2" y="189.2" width="15.1" height="12.3" fill="#4e02a2"/><rect x="356.3" y="189.2" width="15.1" height="12.3" fill="#4e02a2"/><rect x="370.5" y="189.2" width="15.1" height="12.3" fill="#4e02a2"/><rect x="384.6" y="189.2" width="15.1" height="12.3" fill="#4e02a2"/><rect x="398.7" y="189.2" width="15.1" height="12.3" fill="#4e02a2"/><rect x="412.9" y="189.2" width="15.1" height="12.3" fill="#4e02a2"/><rect x="427.0" y="189.2" width="15.1" height="12.3" fill="#4e02a2"/><rect x="441.2" y="189.2" width="15.1" height="12.3" fill="#4e02a2"/><rect x="455.3" y="189.2" width="15.1" height="12.3" fill="#4e02a2"/><rect x="469.4" y="189.2" width="15.1" height="12.3" fill="#4e02a2"/><rect x="483.6" y="189.2" width="15.1" height="12.3" fill="#4e02a2"/><rect x="497.7" y="189.2" width="15.1" height="12.3" fill="#4e02a2"/><rect x="511.9" y="189.2" width="15.1" height="12.3" fill="#4e02a2"/><rect x="526.0" y="189.2" width="15.1" height="12.3" fill="#4e02a2"/><rect x="540.1" y="189.2" width="15.1" height="12.3" fill="#7201a8"/><rect x="554.3" y="189.2" width="15.1" height="12.3" fill="#b12a90"/><rect x="568.4" y="189.2" width="15.1" height="12.3" fill="#b12a90"/><rect x="582.6" y="189.2" width="15.1" height="12.3" fill="#b12a90"/><rect x="596.7" y="189.2" width="15.1" height="12.3" fill="#b12a90"/><rect x="610.8" y="189.2" width="15.1" height="12.3" fill="#b12a90"/><rect x="625.0" y="189.2" width="15.1" height="12.3" fill="#b12a90"/><rect x="639.1" y="189.2" width="15.1" height="12.3" fill="#b12a90"/><rect x="653.3" y="189.2" width="15.1" height="12.3" fill="#b12a90"/><rect x="667.4" y="189.2" width="15.1" height="12.3" fill="#b12a90"/><rect x="681.5" y="189.2" width="15.1" height="12.3" fill="#b12a90"/><rect x="695.7" y="189.2" width="15.1" height="12.3" fill="#b12a90"/><rect x="709.8" y="189.2" width="15.1" height="12.3" fill="#b12a90"/><rect x="724.0" y="189.2" width="15.1" height="12.3" fill="#b12a90"/><rect x="738.1" y="189.2" width="15.1" height="12.3" fill="#b12a90"/><rect x="214.9" y="200.5" width="15.1" height="12.3" fill="#4e02a2"/><rect x="229.1" y="200.5" width="15.1" height="12.3" fill="#4e02a2"/><rect x="243.2" y="200.5" width="15.1" height="12.3" fill="#4e02a2"/><rect x="257.3" y="200.5" width="15.1" height="12.3" fill="#4e02a2"/><rect x="271.5" y="200.5" width="15.1" height="12.3" fill="#4e02a2"/><rect x="285.6" y="200.5" width="15.1" height="12.3" fill="#4e02a2"/><rect x="299.8" y="200.5" width="15.1" height="12.3" fill="#4e02a2"/><rect x="313.9" y="200.5" width="15.1" height="12.3" fill="#4e02a2"/><rect x="328.0" y="200.5" width="15.1" height="12.3" fill="#4e02a2"/><rect x="342.2" y="200.5" width="15.1" height="12.3" fill="#4e02a2"/><rect x="356.3" y="200.5" width="15.1" height="12.3" fill="#4e02a2"/><rect x="370.5" y="200.5" width="15.1" height="12.3" fill="#4e02a2"/><rect x="384.6" y="200.5" width="15.1" height="12.3" fill="#4e02a2"/><rect x="398.7" y="200.5" width="15.1" height="12.3" fill="#4e02a2"/><rect x="412.9" y="200.5" width="15.1" height="12.3" fill="#4e02a2"/><rect x="427.0" y="200.5" width="15.1" height="12.3" fill="#4e02a2"/><rect x="441.2" y="200.5" width="15.1" height="12.3" fill="#4e02a2"/><rect x="455.3" y="200.5" width="15.1" height="12.3" fill="#4e02a2"/><rect x="469.4" y="200.5" width="15.1" height="12.3" fill="#4e02a2"/><rect x="483.6" y="200.5" width="15.1" height="12.3" fill="#4e02a2"/><rect x="497.7" y="200.5" width="15.1" height="12.3" fill="#4e02a2"/><rect x="511.9" y="200.5" width="15.1" height="12.3" fill="#4e02a2"/><rect x="526.0" y="200.5" width="15.1" height="12.3" fill="#7201a8"/><rect x="540.1" y="200.5" width="15.1" height="12.3" fill="#ad2793"/><rect x="554.3" y="200.5" width="15.1" height="12.3" fill="#ad2793"/><rect x="568.4" y="200.5" width="15.1" height="12.3" fill="#ad2793"/><rect x="582.6" y="200.5" width="15.1" height="12.3" fill="#ad2793"/><rect x="596.7" y="200.5" width="15.1" height="12.3" fill="#ad2793"/><rect x="610.8" y="200.5" width="15.1" height="12.3" fill="#ad2793"/><rect x="625.0" y="200.5" width="15.1" height="12.3" fill="#ad2793"/><rect x="639.1" y="200.5" width="15.1" height="12.3" fill="#ad2793"/><rect x="653.3" y="200.5" width="15.1" height="12.3" fill="#ad2793"/><rect x="667.4" y="200.5" width="15.1" height="12.3" fill="#ad2793"/><rect x="681.5" y="200.5" width="15.1" height="12.3" fill="#ad2793"/><rect x="695.7" y="200.5" width="15.1" height="12.3" fill="#ad2793"/><rect x="709.8" y="200.5" width="15.1" height="12.3" fill="#ad2793"/><rect x="724.0" y="200.5" width="15.1" height="12.3" fill="#ad2793"/><rect x="738.1" y="200.5" width="15.1" height="12.3" fill="#ad2793"/><rect x="214.9" y="211.9" width="15.1" height="12.3" fill="#4903a0"/><rect x="229.1" y="211.9" width="15.1" height="12.3" fill="#4903a0"/><rect x="243.2" y="211.9" width="15.1" height="12.3" fill="#4903a0"/><rect x="257.3" y="211.9" width="15.1" height="12.3" fill="#4903a0"/><rect x="271.5" y="211.9" width="15.1" height="12.3" fill="#4903a0"/><rect x="285.6" y="211.9" width="15.1" height="12.3" fill="#4903a0"/><rect x="299.8" y="211.9" width="15.1" height="12.3" fill="#4903a0"/><rect x="313.9" y="211.9" width="15.1" height="12.3" fill="#4903a0"/><rect x="328.0" y="211.9" width="15.1" height="12.3" fill="#4903a0"/><rect x="342.2" y="211.9" width="15.1" height="12.3" fill="#4903a0"/><rect x="356.3" y="211.9" width="15.1" height="12.3" fill="#4903a0"/><rect x="370.5" y="211.9" width="15.1" height="12.3" fill="#4903a0"/><rect x="384.6" y="211.9" width="15.1" height="12.3" fill="#4903a0"/><rect x="398.7" y="211.9" width="15.1" height="12.3" fill="#4903a0"/><rect x="412.9" y="211.9" width="15.1" height="12.3" fill="#4903a0"/><rect x="427.0" y="211.9" width="15.1" height="12.3" fill="#4903a0"/><rect x="441.2" y="211.9" width="15.1" height="12.3" fill="#4903a0"/><rect x="455.3" y="211.9" width="15.1" height="12.3" fill="#4903a0"/><rect x="469.4" y="211.9" width="15.1" height="12.3" fill="#4903a0"/><rect x="483.6" y="211.9" width="15.1" height="12.3" fill="#4903a0"/><rect x="497.7" y="211.9" width="15.1" height="12.3" fill="#4903a0"/><rect x="511.9" y="211.9" width="15.1" height="12.3" fill="#6a00a8"/><rect x="526.0" y="211.9" width="15.1" height="12.3" fill="#a72197"/><rect x="540.1" y="211.9" width="15.1" height="12.3" fill="#a72197"/><rect x="554.3" y="211.9" width="15.1" height="12.3" fill="#a72197"/><rect x="568.4" y="211.9" width="15.1" height="12.3" fill="#a72197"/><rect x="582.6" y="211.9" width="15.1" height="12.3" fill="#a72197"/><rect x="596.7" y="211.9" width="15.1" height="12.3" fill="#a72197"/><rect x="610.8" y="211.9" width="15.1" height="12.3" fill="#a72197"/><rect x="625.0" y="211.9" width="15.1" height="12.3" fill="#a72197"/><rect x="639.1" y="211.9" width="15.1" height="12.3" fill="#a72197"/><rect x="653.3" y="211.9" width="15.1" height="12.3" fill="#a72197"/><rect x="667.4" y="211.9" width="15.1" height="12.3" fill="#a72197"/><rect x="681.5" y="211.9" width="15.1" height="12.3" fill="#a72197"/><rect x="695.7" y="211.9" width="15.1" height="12.3" fill="#a72197"/><rect x="709.8" y="211.9" width="15.1" height="12.3" fill="#a72197"/><rect x="724.0" y="211.9" width="15.1" height="12.3" fill="#a72197"/><rect x="738.1" y="211.9" width="15.1" height="12.3" fill="#a72197"/><rect x="214.9" y="223.2" width="15.1" height="12.3" fill="#4903a0"/><rect x="229.1" y="223.2" width="15.1" height="12.3" fill="#4903a0"/><rect x="243.2" y="223.2" width="15.1" height="12.3" fill="#4903a0"/><rect x="257.3" y="223.2" width="15.1" height="12.3" fill="#4903a0"/><rect x="271.5" y="223.2" width="15.1" height="12.3" fill="#4903a0"/><rect x="285.6" y="223.2" width="15.1" height="12.3" fill="#4903a0"/><rect x="299.8" y="223.2" width="15.1" height="12.3" fill="#4903a0"/><rect x="313.9" y="223.2" width="15.1" height="12.3" fill="#4903a0"/><rect x="328.0" y="223.2" width="15.1" height="12.3" fill="#4903a0"/><rect x="342.2" y="223.2" width="15.1" height="12.3" fill="#4903a0"/><rect x="356.3" y="223.2" width="15.1" height="12.3" fill="#4903a0"/><rect x="370.5" y="223.2" width="15.1" height="12.3" fill="#4903a0"/><rect x="384.6" y="223.2" width="15.1" height="12.3" fill="#4903a0"/><rect x="398.7" y="223.2" width="15.1" height="12.3" fill="#4903a0"/><rect x="412.9" y="223.2" width="15.1" height="12.3" fill="#4903a0"/><rect x="427.0" y="223.2" width="15.1" height="12.3" fill="#4903a0"/><rect x="441.2" y="223.2" width="15.1" height="12.3" fill="#4903a0"/><rect x="455.3" y="223.2" width="15.1" height="12.3" fill="#4903a0"/><rect x="469.4" y="223.2" width="15.1" height="12.3" fill="#4903a0"/><rect x="483.6" y="223.2" width="15.1" height="12.3" fill="#4903a0"/><rect x="497.7" y="223.2" width="15.1" height="12.3" fill="#4903a0"/><rect x="511.9" y="223.2" width="15.1" height="12.3" fill="#6300a7"/><rect x="526.0" y="223.2" width="15.1" height="12.3" fill="#9613a1"/><rect x="540.1" y="223.2" width="15.1" height="12.3" fill="#9613a1"/><rect x="554.3" y="223.2" width="15.1" height="12.3" fill="#9613a1"/><rect x="568.4" y="223.2" width="15.1" height="12.3" fill="#a11b9b"/><rect x="582.6" y="223.2" width="15.1" height="12.3" fill="#a11b9b"/><rect x="596.7" y="223.2" width="15.1" height="12.3" fill="#a11b9b"/><rect x="610.8" y="223.2" width="15.1" height="12.3" fill="#a11b9b"/><rect x="625.0" y="223.2" width="15.1" height="12.3" fill="#a11b9b"/><rect x="639.1" y="223.2" width="15.1" height="12.3" fill="#a11b9b"/><rect x="653.3" y="223.2" width="15.1" height="12.3" fill="#a11b9b"/><rect x="667.4" y="223.2" width="15.1" height="12.3" fill="#a11b9b"/><rect x="681.5" y="223.2" width="15.1" height="12.3" fill="#a11b9b"/><rect x="695.7" y="223.2" width="15.1" height="12.3" fill="#a11b9b"/><rect x="709.8" y="223.2" width="15.1" height="12.3" fill="#a11b9b"/><rect x="724.0" y="223.2" width="15.1" height="12.3" fill="#a11b9b"/><rect x="738.1" y="223.2" width="15.1" height="12.3" fill="#a11b9b"/><rect x="214.9" y="234.6" width="15.1" height="12.3" fill="#4903a0"/><rect x="229.1" y="234.6" width="15.1" height="12.3" fill="#4903a0"/><rect x="243.2" y="234.6" width="15.1" height="12.3" fill="#4903a0"/><rect x="257.3" y="234.6" width="15.1" height="12.3" fill="#4903a0"/><rect x="271.5" y="234.6" width="15.1" height="12.3" fill="#4903a0"/><rect x="285.6" y="234.6" width="15.1" height="12.3" fill="#4903a0"/><rect x="299.8" y="234.6" width="15.1" height="12.3" fill="#4903a0"/><rect x="313.9" y="234.6" width="15.1" height="12.3" fill="#4903a0"/><rect x="328.0" y="234.6" width="15.1" height="12.3" fill="#4903a0"/><rect x="342.2" y="234.6" width="15.1" height="12.3" fill="#4903a0"/><rect x="356.3" y="234.6" width="15.1" height="12.3" fill="#4903a0"/><rect x="370.5" y="234.6" width="15.1" height="12.3" fill="#4903a0"/><rect x="384.6" y="234.6" width="15.1" height="12.3" fill="#4903a0"/><rect x="398.7" y="234.6" width="15.1" height="12.3" fill="#4903a0"/><rect x="412.9" y="234.6" width="15.1" height="12.3" fill="#4903a0"/><rect x="427.0" y="234.6" width="15.1" height="12.3" fill="#4903a0"/><rect x="441.2" y="234.6" width="15.1" height="12.3" fill="#4903a0"/><rect x="455.3" y="234.6" width="15.1" height="12.3" fill="#4903a0"/><rect x="469.4" y="234.6" width="15.1" height="12.3" fill="#4903a0"/><rect x="483.6" y="234.6" width="15.1" height="12.3" fill="#4903a0"/><rect x="497.7" y="234.6" width="15.1" height="12.3" fill="#4903a0"/><rect x="511.9" y="234.6" width="15.1" height="12.3" fill="#7e03a8"/><rect x="526.0" y="234.6" width="15.1" height="12.3" fill="#bf3984"/><rect x="540.1" y="234.6" width="15.1" height="12.3" fill="#bf3984"/><rect x="554.3" y="234.6" width="15.1" height="12.3" fill="#8f0da4"/><rect x="568.4" y="234.6" width="15.1" height="12.3" fill="#9613a1"/><rect x="582.6" y="234.6" width="15.1" height="12.3" fill="#9613a1"/><rect x="596.7" y="234.6" width="15.1" height="12.3" fill="#9613a1"/><rect x="610.8" y="234.6" width="15.1" height="12.3" fill="#9613a1"/><rect x="625.0" y="234.6" width="15.1" height="12.3" fill="#9613a1"/><rect x="639.1" y="234.6" width="15.1" height="12.3" fill="#9613a1"/><rect x="653.3" y="234.6" width="15.1" height="12.3" fill="#9613a1"/><rect x="667.4" y="234.6" width="15.1" height="12.3" fill="#9613a1"/><rect x="681.5" y="234.6" width="15.1" height="12.3" fill="#9613a1"/><rect x="695.7" y="234.6" width="15.1" height="12.3" fill="#9613a1"/><rect x="709.8" y="234.6" width="15.1" height="12.3" fill="#9613a1"/><rect x="724.0" y="234.6" width="15.1" height="12.3" fill="#9613a1"/><rect x="738.1" y="234.6" width="15.1" height="12.3" fill="#9613a1"/><rect x="214.9" y="245.9" width="15.1" height="12.3" fill="#4903a0"/><rect x="229.1" y="245.9" width="15.1" height="12.3" fill="#4903a0"/><rect x="243.2" y="245.9" width="15.1" height="12.3" fill="#4903a0"/><rect x="257.3" y="245.9" width="15.1" height="12.3" fill="#4903a0"/><rect x="271.5" y="245.9" width="15.1" height="12.3" fill="#4903a0"/><rect x="285.6" y="245.9" width="15.1" height="12.3" fill="#4903a0"/><rect x="299.8" y="245.9" width="15.1" height="12.3" fill="#4903a0"/><rect x="313.9" y="245.9" width="15.1" height="12.3" fill="#4903a0"/><rect x="328.0" y="245.9" width="15.1" height="12.3" fill="#4903a0"/><rect x="342.2" y="245.9" width="15.1" height="12.3" fill="#4903a0"/><rect x="356.3" y="245.9" width="15.1" height="12.3" fill="#4903a0"/><rect x="370.5" y="245.9" width="15.1" height="12.3" fill="#4903a0"/><rect x="384.6" y="245.9" width="15.1" height="12.3" fill="#4903a0"/><rect x="398.7" y="245.9" width="15.1" height="12.3" fill="#4903a0"/><rect x="412.9" y="245.9" width="15.1" height="12.3" fill="#4903a0"/><rect x="427.0" y="245.9" width="15.1" height="12.3" fill="#4903a0"/><rect x="441.2" y="245.9" width="15.1" height="12.3" fill="#4903a0"/><rect x="455.3" y="245.9" width="15.1" height="12.3" fill="#4903a0"/><rect x="469.4" y="245.9" width="15.1" height="12.3" fill="#4903a0"/><rect x="483.6" y="245.9" width="15.1" height="12.3" fill="#4903a0"/><rect x="497.7" y="245.9" width="15.1" height="12.3" fill="#5601a4"/><rect x="511.9" y="245.9" width="15.1" height="12.3" fill="#dd5e66"/><rect x="526.0" y="245.9" width="15.1" height="12.3" fill="#dd5e66"/><rect x="540.1" y="245.9" width="15.1" height="12.3" fill="#dd5e66"/><rect x="554.3" y="245.9" width="15.1" height="12.3" fill="#bf3984"/><rect x="568.4" y="245.9" width="15.1" height="12.3" fill="#7e03a8"/><rect x="582.6" y="245.9" width="15.1" height="12.3" fill="#9613a1"/><rect x="596.7" y="245.9" width="15.1" height="12.3" fill="#9613a1"/><rect x="610.8" y="245.9" width="15.1" height="12.3" fill="#9613a1"/><rect x="625.0" y="245.9" width="15.1" height="12.3" fill="#9613a1"/><rect x="639.1" y="245.9" width="15.1" height="12.3" fill="#9613a1"/><rect x="653.3" y="245.9" width="15.1" height="12.3" fill="#9613a1"/><rect x="667.4" y="245.9" width="15.1" height="12.3" fill="#9613a1"/><rect x="681.5" y="245.9" width="15.1" height="12.3" fill="#9613a1"/><rect x="695.7" y="245.9" width="15.1" height="12.3" fill="#9613a1"/><rect x="709.8" y="245.9" width="15.1" height="12.3" fill="#9613a1"/><rect x="724.0" y="245.9" width="15.1" height="12.3" fill="#9613a1"/><rect x="738.1" y="245.9" width="15.1" height="12.3" fill="#9613a1"/><rect x="214.9" y="257.2" width="15.1" height="12.3" fill="#6300a7"/><rect x="229.1" y="257.2" width="15.1" height="12.3" fill="#6300a7"/><rect x="243.2" y="257.2" width="15.1" height="12.3" fill="#6300a7"/><rect x="257.3" y="257.2" width="15.1" height="12.3" fill="#6300a7"/><rect x="271.5" y="257.2" width="15.1" height="12.3" fill="#6300a7"/><rect x="285.6" y="257.2" width="15.1" height="12.3" fill="#6300a7"/><rect x="299.8" y="257.2" width="15.1" height="12.3" fill="#6300a7"/><rect x="313.9" y="257.2" width="15.1" height="12.3" fill="#6300a7"/><rect x="328.0" y="257.2" width="15.1" height="12.3" fill="#6300a7"/><rect x="342.2" y="257.2" width="15.1" height="12.3" fill="#6300a7"/><rect x="356.3" y="257.2" width="15.1" height="12.3" fill="#6300a7"/><rect x="370.5" y="257.2" width="15.1" height="12.3" fill="#6300a7"/><rect x="384.6" y="257.2" width="15.1" height="12.3" fill="#6300a7"/><rect x="398.7" y="257.2" width="15.1" height="12.3" fill="#6300a7"/><rect x="412.9" y="257.2" width="15.1" height="12.3" fill="#6300a7"/><rect x="427.0" y="257.2" width="15.1" height="12.3" fill="#6300a7"/><rect x="441.2" y="257.2" width="15.1" height="12.3" fill="#6300a7"/><rect x="455.3" y="257.2" width="15.1" height="12.3" fill="#6300a7"/><rect x="469.4" y="257.2" width="15.1" height="12.3" fill="#6300a7"/><rect x="483.6" y="257.2" width="15.1" height="12.3" fill="#6300a7"/><rect x="497.7" y="257.2" width="15.1" height="12.3" fill="#6300a7"/><rect x="511.9" y="257.2" width="15.1" height="12.3" fill="#e16462"/><rect x="526.0" y="257.2" width="15.1" height="12.3" fill="#e16462"/><rect x="540.1" y="257.2" width="15.1" height="12.3" fill="#e16462"/><rect x="554.3" y="257.2" width="15.1" height="12.3" fill="#cc4778"/><rect x="568.4" y="257.2" width="15.1" height="12.3" fill="#5601a4"/><rect x="582.6" y="257.2" width="15.1" height="12.3" fill="#8f0da4"/><rect x="596.7" y="257.2" width="15.1" height="12.3" fill="#8f0da4"/><rect x="610.8" y="257.2" width="15.1" height="12.3" fill="#8f0da4"/><rect x="625.0" y="257.2" width="15.1" height="12.3" fill="#8f0da4"/><rect x="639.1" y="257.2" width="15.1" height="12.3" fill="#8f0da4"/><rect x="653.3" y="257.2" width="15.1" height="12.3" fill="#8f0da4"/><rect x="667.4" y="257.2" width="15.1" height="12.3" fill="#8f0da4"/><rect x="681.5" y="257.2" width="15.1" height="12.3" fill="#8f0da4"/><rect x="695.7" y="257.2" width="15.1" height="12.3" fill="#8f0da4"/><rect x="709.8" y="257.2" width="15.1" height="12.3" fill="#8f0da4"/><rect x="724.0" y="257.2" width="15.1" height="12.3" fill="#8f0da4"/><rect x="738.1" y="257.2" width="15.1" height="12.3" fill="#8f0da4"/><rect x="214.9" y="268.6" width="15.1" height="12.3" fill="#8f0da4"/><rect x="229.1" y="268.6" width="15.1" height="12.3" fill="#8f0da4"/><rect x="243.2" y="268.6" width="15.1" height="12.3" fill="#8f0da4"/><rect x="257.3" y="268.6" width="15.1" height="12.3" fill="#8f0da4"/><rect x="271.5" y="268.6" width="15.1" height="12.3" fill="#8f0da4"/><rect x="285.6" y="268.6" width="15.1" height="12.3" fill="#8f0da4"/><rect x="299.8" y="268.6" width="15.1" height="12.3" fill="#8f0da4"/><rect x="313.9" y="268.6" width="15.1" height="12.3" fill="#8f0da4"/><rect x="328.0" y="268.6" width="15.1" height="12.3" fill="#8f0da4"/><rect x="342.2" y="268.6" width="15.1" height="12.3" fill="#8f0da4"/><rect x="356.3" y="268.6" width="15.1" height="12.3" fill="#8f0da4"/><rect x="370.5" y="268.6" width="15.1" height="12.3" fill="#8f0da4"/><rect x="384.6" y="268.6" width="15.1" height="12.3" fill="#8f0da4"/><rect x="398.7" y="268.6" width="15.1" height="12.3" fill="#8f0da4"/><rect x="412.9" y="268.6" width="15.1" height="12.3" fill="#8f0da4"/><rect x="427.0" y="268.6" width="15.1" height="12.3" fill="#8f0da4"/><rect x="441.2" y="268.6" width="15.1" height="12.3" fill="#8f0da4"/><rect x="455.3" y="268.6" width="15.1" height="12.3" fill="#8f0da4"/><rect x="469.4" y="268.6" width="15.1" height="12.3" fill="#8f0da4"/><rect x="483.6" y="268.6" width="15.1" height="12.3" fill="#8f0da4"/><rect x="497.7" y="268.6" width="15.1" height="12.3" fill="#8f0da4"/><rect x="511.9" y="268.6" width="15.1" height="12.3" fill="#e16462"/><rect x="526.0" y="268.6" width="15.1" height="12.3" fill="#e16462"/><rect x="540.1" y="268.6" width="15.1" height="12.3" fill="#e16462"/><rect x="554.3" y="268.6" width="15.1" height="12.3" fill="#8f0da4"/><rect x="568.4" y="268.6" width="15.1" height="12.3" fill="#4903a0"/><rect x="582.6" y="268.6" width="15.1" height="12.3" fill="#8808a6"/><rect x="596.7" y="268.6" width="15.1" height="12.3" fill="#8808a6"/><rect x="610.8" y="268.6" width="15.1" height="12.3" fill="#7e03a8"/><rect x="625.0" y="268.6" width="15.1" height="12.3" fill="#7e03a8"/><rect x="639.1" y="268.6" width="15.1" height="12.3" fill="#7e03a8"/><rect x="653.3" y="268.6" width="15.1" height="12.3" fill="#7e03a8"/><rect x="667.4" y="268.6" width="15.1" height="12.3" fill="#7e03a8"/><rect x="681.5" y="268.6" width="15.1" height="12.3" fill="#7e03a8"/><rect x="695.7" y="268.6" width="15.1" height="12.3" fill="#7e03a8"/><rect x="709.8" y="268.6" width="15.1" height="12.3" fill="#7e03a8"/><rect x="724.0" y="268.6" width="15.1" height="12.3" fill="#7e03a8"/><rect x="738.1" y="268.6" width="15.1" height="12.3" fill="#7e03a8"/><rect x="214.9" y="279.9" width="15.1" height="12.3" fill="#cc4778"/><rect x="229.1" y="279.9" width="15.1" height="12.3" fill="#cc4778"/><rect x="243.2" y="279.9" width="15.1" height="12.3" fill="#cc4778"/><rect x="257.3" y="279.9" width="15.1" height="12.3" fill="#cc4778"/><rect x="271.5" y="279.9" width="15.1" height="12.3" fill="#cc4778"/><rect x="285.6" y="279.9" width="15.1" height="12.3" fill="#cc4778"/><rect x="299.8" y="279.9" width="15.1" height="12.3" fill="#cc4778"/><rect x="313.9" y="279.9" width="15.1" height="12.3" fill="#cc4778"/><rect x="328.0" y="279.9" width="15.1" height="12.3" fill="#cc4778"/><rect x="342.2" y="279.9" width="15.1" height="12.3" fill="#cc4778"/><rect x="356.3" y="279.9" width="15.1" height="12.3" fill="#cc4778"/><rect x="370.5" y="279.9" width="15.1" height="12.3" fill="#cc4778"/><rect x="384.6" y="279.9" width="15.1" height="12.3" fill="#cc4778"/><rect x="398.7" y="279.9" width="15.1" height="12.3" fill="#cc4778"/><rect x="412.9" y="279.9" width="15.1" height="12.3" fill="#cc4778"/><rect x="427.0" y="279.9" width="15.1" height="12.3" fill="#cc4778"/><rect x="441.2" y="279.9" width="15.1" height="12.3" fill="#cc4778"/><rect x="455.3" y="279.9" width="15.1" height="12.3" fill="#cc4778"/><rect x="469.4" y="279.9" width="15.1" height="12.3" fill="#cc4778"/><rect x="483.6" y="279.9" width="15.1" height="12.3" fill="#cc4778"/><rect x="497.7" y="279.9" width="15.1" height="12.3" fill="#cc4778"/><rect x="511.9" y="279.9" width="15.1" height="12.3" fill="#e16462"/><rect x="526.0" y="279.9" width="15.1" height="12.3" fill="#e16462"/><rect x="540.1" y="279.9" width="15.1" height="12.3" fill="#f2844b"/><rect x="554.3" y="279.9" width="15.1" height="12.3" fill="#5601a4"/><rect x="568.4" y="279.9" width="15.1" height="12.3" fill="#4903a0"/><rect x="582.6" y="279.9" width="15.1" height="12.3" fill="#8808a6"/><rect x="596.7" y="279.9" width="15.1" height="12.3" fill="#8808a6"/><rect x="610.8" y="279.9" width="15.1" height="12.3" fill="#7201a8"/><rect x="625.0" y="279.9" width="15.1" height="12.3" fill="#7201a8"/><rect x="639.1" y="279.9" width="15.1" height="12.3" fill="#7201a8"/><rect x="653.3" y="279.9" width="15.1" height="12.3" fill="#7201a8"/><rect x="667.4" y="279.9" width="15.1" height="12.3" fill="#7201a8"/><rect x="681.5" y="279.9" width="15.1" height="12.3" fill="#7201a8"/><rect x="695.7" y="279.9" width="15.1" height="12.3" fill="#7201a8"/><rect x="709.8" y="279.9" width="15.1" height="12.3" fill="#7201a8"/><rect x="724.0" y="279.9" width="15.1" height="12.3" fill="#7201a8"/><rect x="738.1" y="279.9" width="15.1" height="12.3" fill="#7201a8"/><rect x="214.9" y="291.3" width="15.1" height="12.3" fill="#d6556d"/><rect x="229.1" y="291.3" width="15.1" height="12.3" fill="#d6556d"/><rect x="243.2" y="291.3" width="15.1" height="12.3" fill="#d6556d"/><rect x="257.3" y="291.3" width="15.1" height="12.3" fill="#d6556d"/><rect x="271.5" y="291.3" width="15.1" height="12.3" fill="#d6556d"/><rect x="285.6" y="291.3" width="15.1" height="12.3" fill="#d6556d"/><rect x="299.8" y="291.3" width="15.1" height="12.3" fill="#d6556d"/><rect x="313.9" y="291.3" width="15.1" height="12.3" fill="#d6556d"/><rect x="328.0" y="291.3" width="15.1" height="12.3" fill="#d6556d"/><rect x="342.2" y="291.3" width="15.1" height="12.3" fill="#d6556d"/><rect x="356.3" y="291.3" width="15.1" height="12.3" fill="#d6556d"/><rect x="370.5" y="291.3" width="15.1" height="12.3" fill="#d6556d"/><rect x="384.6" y="291.3" width="15.1" height="12.3" fill="#d6556d"/><rect x="398.7" y="291.3" width="15.1" height="12.3" fill="#d6556d"/><rect x="412.9" y="291.3" width="15.1" height="12.3" fill="#d6556d"/><rect x="427.0" y="291.3" width="15.1" height="12.3" fill="#d6556d"/><rect x="441.2" y="291.3" width="15.1" height="12.3" fill="#d6556d"/><rect x="455.3" y="291.3" width="15.1" height="12.3" fill="#d6556d"/><rect x="469.4" y="291.3" width="15.1" height="12.3" fill="#d6556d"/><rect x="483.6" y="291.3" width="15.1" height="12.3" fill="#d6556d"/><rect x="497.7" y="291.3" width="15.1" height="12.3" fill="#d6556d"/><rect x="511.9" y="291.3" width="15.1" height="12.3" fill="#e56a5d"/><rect x="526.0" y="291.3" width="15.1" height="12.3" fill="#e56a5d"/><rect x="540.1" y="291.3" width="15.1" height="12.3" fill="#8f0da4"/><rect x="554.3" y="291.3" width="15.1" height="12.3" fill="#5601a4"/><rect x="568.4" y="291.3" width="15.1" height="12.3" fill="#4903a0"/><rect x="582.6" y="291.3" width="15.1" height="12.3" fill="#8808a6"/><rect x="596.7" y="291.3" width="15.1" height="12.3" fill="#7e03a8"/><rect x="610.8" y="291.3" width="15.1" height="12.3" fill="#7e03a8"/><rect x="625.0" y="291.3" width="15.1" height="12.3" fill="#6300a7"/><rect x="639.1" y="291.3" width="15.1" height="12.3" fill="#6300a7"/><rect x="653.3" y="291.3" width="15.1" height="12.3" fill="#6300a7"/><rect x="667.4" y="291.3" width="15.1" height="12.3" fill="#6300a7"/><rect x="681.5" y="291.3" width="15.1" height="12.3" fill="#6300a7"/><rect x="695.7" y="291.3" width="15.1" height="12.3" fill="#6a00a8"/><rect x="709.8" y="291.3" width="15.1" height="12.3" fill="#6a00a8"/><rect x="724.0" y="291.3" width="15.1" height="12.3" fill="#6a00a8"/><rect x="738.1" y="291.3" width="15.1" height="12.3" fill="#6a00a8"/><rect x="214.9" y="302.6" width="15.1" height="12.3" fill="#e16462"/><rect x="229.1" y="302.6" width="15.1" height="12.3" fill="#e16462"/><rect x="243.2" y="302.6" width="15.1" height="12.3" fill="#e16462"/><rect x="257.3" y="302.6" width="15.1" height="12.3" fill="#e16462"/><rect x="271.5" y="302.6" width="15.1" height="12.3" fill="#e16462"/><rect x="285.6" y="302.6" width="15.1" height="12.3" fill="#e16462"/><rect x="299.8" y="302.6" width="15.1" height="12.3" fill="#e16462"/><rect x="313.9" y="302.6" width="15.1" height="12.3" fill="#e16462"/><rect x="328.0" y="302.6" width="15.1" height="12.3" fill="#e16462"/><rect x="342.2" y="302.6" width="15.1" height="12.3" fill="#e16462"/><rect x="356.3" y="302.6" width="15.1" height="12.3" fill="#e16462"/><rect x="370.5" y="302.6" width="15.1" height="12.3" fill="#e16462"/><rect x="384.6" y="302.6" width="15.1" height="12.3" fill="#e16462"/><rect x="398.7" y="302.6" width="15.1" height="12.3" fill="#e16462"/><rect x="412.9" y="302.6" width="15.1" height="12.3" fill="#e16462"/><rect x="427.0" y="302.6" width="15.1" height="12.3" fill="#e16462"/><rect x="441.2" y="302.6" width="15.1" height="12.3" fill="#e16462"/><rect x="455.3" y="302.6" width="15.1" height="12.3" fill="#e16462"/><rect x="469.4" y="302.6" width="15.1" height="12.3" fill="#e16462"/><rect x="483.6" y="302.6" width="15.1" height="12.3" fill="#e16462"/><rect x="497.7" y="302.6" width="15.1" height="12.3" fill="#e16462"/><rect x="511.9" y="302.6" width="15.1" height="12.3" fill="#e56a5d"/><rect x="526.0" y="302.6" width="15.1" height="12.3" fill="#f58b47"/><rect x="540.1" y="302.6" width="15.1" height="12.3" fill="#8f0da4"/><rect x="554.3" y="302.6" width="15.1" height="12.3" fill="#5601a4"/><rect x="568.4" y="302.6" width="15.1" height="12.3" fill="#4903a0"/><rect x="582.6" y="302.6" width="15.1" height="12.3" fill="#8808a6"/><rect x="596.7" y="302.6" width="15.1" height="12.3" fill="#8808a6"/><rect x="610.8" y="302.6" width="15.1" height="12.3" fill="#8808a6"/><rect x="625.0" y="302.6" width="15.1" height="12.3" fill="#8808a6"/><rect x="639.1" y="302.6" width="15.1" height="12.3" fill="#8808a6"/><rect x="653.3" y="302.6" width="15.1" height="12.3" fill="#8808a6"/><rect x="667.4" y="302.6" width="15.1" height="12.3" fill="#6300a7"/><rect x="681.5" y="302.6" width="15.1" height="12.3" fill="#5e01a6"/><rect x="695.7" y="302.6" width="15.1" height="12.3" fill="#5e01a6"/><rect x="709.8" y="302.6" width="15.1" height="12.3" fill="#5e01a6"/><rect x="724.0" y="302.6" width="15.1" height="12.3" fill="#5e01a6"/><rect x="738.1" y="302.6" width="15.1" height="12.3" fill="#5e01a6"/><rect x="214.9" y="313.9" width="15.1" height="12.3" fill="#cc4778"/><rect x="229.1" y="313.9" width="15.1" height="12.3" fill="#cc4778"/><rect x="243.2" y="313.9" width="15.1" height="12.3" fill="#cc4778"/><rect x="257.3" y="313.9" width="15.1" height="12.3" fill="#cc4778"/><rect x="271.5" y="313.9" width="15.1" height="12.3" fill="#cc4778"/><rect x="285.6" y="313.9" width="15.1" height="12.3" fill="#cc4778"/><rect x="299.8" y="313.9" width="15.1" height="12.3" fill="#cc4778"/><rect x="313.9" y="313.9" width="15.1" height="12.3" fill="#cc4778"/><rect x="328.0" y="313.9" width="15.1" height="12.3" fill="#cc4778"/><rect x="342.2" y="313.9" width="15.1" height="12.3" fill="#cc4778"/><rect x="356.3" y="313.9" width="15.1" height="12.3" fill="#cc4778"/><rect x="370.5" y="313.9" width="15.1" height="12.3" fill="#cc4778"/><rect x="384.6" y="313.9" width="15.1" height="12.3" fill="#cc4778"/><rect x="398.7" y="313.9" width="15.1" height="12.3" fill="#cc4778"/><rect x="412.9" y="313.9" width="15.1" height="12.3" fill="#cc4778"/><rect x="427.0" y="313.9" width="15.1" height="12.3" fill="#cc4778"/><rect x="441.2" y="313.9" width="15.1" height="12.3" fill="#cc4778"/><rect x="455.3" y="313.9" width="15.1" height="12.3" fill="#cc4778"/><rect x="469.4" y="313.9" width="15.1" height="12.3" fill="#e56a5d"/><rect x="483.6" y="313.9" width="15.1" height="12.3" fill="#e56a5d"/><rect x="497.7" y="313.9" width="15.1" height="12.3" fill="#e56a5d"/><rect x="511.9" y="313.9" width="15.1" height="12.3" fill="#ef7e50"/><rect x="526.0" y="313.9" width="15.1" height="12.3" fill="#f58b47"/><rect x="540.1" y="313.9" width="15.1" height="12.3" fill="#8f0da4"/><rect x="554.3" y="313.9" width="15.1" height="12.3" fill="#5601a4"/><rect x="568.4" y="313.9" width="15.1" height="12.3" fill="#d6556d"/><rect x="582.6" y="313.9" width="15.1" height="12.3" fill="#d6556d"/><rect x="596.7" y="313.9" width="15.1" height="12.3" fill="#d6556d"/><rect x="610.8" y="313.9" width="15.1" height="12.3" fill="#d6556d"/><rect x="625.0" y="313.9" width="15.1" height="12.3" fill="#d6556d"/><rect x="639.1" y="313.9" width="15.1" height="12.3" fill="#d6556d"/><rect x="653.3" y="313.9" width="15.1" height="12.3" fill="#d6556d"/><rect x="667.4" y="313.9" width="15.1" height="12.3" fill="#bf3984"/><rect x="681.5" y="313.9" width="15.1" height="12.3" fill="#7201a8"/><rect x="695.7" y="313.9" width="15.1" height="12.3" fill="#6300a7"/><rect x="709.8" y="313.9" width="15.1" height="12.3" fill="#6300a7"/><rect x="724.0" y="313.9" width="15.1" height="12.3" fill="#6300a7"/><rect x="738.1" y="313.9" width="15.1" height="12.3" fill="#6300a7"/><rect x="214.9" y="325.3" width="15.1" height="12.3" fill="#cc4778"/><rect x="229.1" y="325.3" width="15.1" height="12.3" fill="#cc4778"/><rect x="243.2" y="325.3" width="15.1" height="12.3" fill="#cc4778"/><rect x="257.3" y="325.3" width="15.1" height="12.3" fill="#cc4778"/><rect x="271.5" y="325.3" width="15.1" height="12.3" fill="#cc4778"/><rect x="285.6" y="325.3" width="15.1" height="12.3" fill="#cc4778"/><rect x="299.8" y="325.3" width="15.1" height="12.3" fill="#cc4778"/><rect x="313.9" y="325.3" width="15.1" height="12.3" fill="#cc4778"/><rect x="328.0" y="325.3" width="15.1" height="12.3" fill="#cc4778"/><rect x="342.2" y="325.3" width="15.1" height="12.3" fill="#cc4778"/><rect x="356.3" y="325.3" width="15.1" height="12.3" fill="#cc4778"/><rect x="370.5" y="325.3" width="15.1" height="12.3" fill="#cc4778"/><rect x="384.6" y="325.3" width="15.1" height="12.3" fill="#cc4778"/><rect x="398.7" y="325.3" width="15.1" height="12.3" fill="#cc4778"/><rect x="412.9" y="325.3" width="15.1" height="12.3" fill="#cc4778"/><rect x="427.0" y="325.3" width="15.1" height="12.3" fill="#cc4778"/><rect x="441.2" y="325.3" width="15.1" height="12.3" fill="#cc4778"/><rect x="455.3" y="325.3" width="15.1" height="12.3" fill="#cc4778"/><rect x="469.4" y="325.3" width="15.1" height="12.3" fill="#e56a5d"/><rect x="483.6" y="325.3" width="15.1" height="12.3" fill="#e56a5d"/><rect x="497.7" y="325.3" width="15.1" height="12.3" fill="#e56a5d"/><rect x="511.9" y="325.3" width="15.1" height="12.3" fill="#ea7457"/><rect x="526.0" y="325.3" width="15.1" height="12.3" fill="#ea7457"/><rect x="540.1" y="325.3" width="15.1" height="12.3" fill="#ea7457"/><rect x="554.3" y="325.3" width="15.1" height="12.3" fill="#ea7457"/><rect x="568.4" y="325.3" width="15.1" height="12.3" fill="#8f0da4"/><rect x="582.6" y="325.3" width="15.1" height="12.3" fill="#8f0da4"/><rect x="596.7" y="325.3" width="15.1" height="12.3" fill="#8f0da4"/><rect x="610.8" y="325.3" width="15.1" height="12.3" fill="#e56a5d"/><rect x="625.0" y="325.3" width="15.1" height="12.3" fill="#e56a5d"/><rect x="639.1" y="325.3" width="15.1" height="12.3" fill="#e56a5d"/><rect x="653.3" y="325.3" width="15.1" height="12.3" fill="#e56a5d"/><rect x="667.4" y="325.3" width="15.1" height="12.3" fill="#e56a5d"/><rect x="681.5" y="325.3" width="15.1" height="12.3" fill="#cc4778"/><rect x="695.7" y="325.3" width="15.1" height="12.3" fill="#5601a4"/><rect x="709.8" y="325.3" width="15.1" height="12.3" fill="#5601a4"/><rect x="724.0" y="325.3" width="15.1" height="12.3" fill="#5601a4"/><rect x="738.1" y="325.3" width="15.1" height="12.3" fill="#5601a4"/><rect x="214.9" y="336.6" width="15.1" height="12.3" fill="#cc4778"/><rect x="229.1" y="336.6" width="15.1" height="12.3" fill="#cc4778"/><rect x="243.2" y="336.6" width="15.1" height="12.3" fill="#cc4778"/><rect x="257.3" y="336.6" width="15.1" height="12.3" fill="#cc4778"/><rect x="271.5" y="336.6" width="15.1" height="12.3" fill="#cc4778"/><rect x="285.6" y="336.6" width="15.1" height="12.3" fill="#cc4778"/><rect x="299.8" y="336.6" width="15.1" height="12.3" fill="#cc4778"/><rect x="313.9" y="336.6" width="15.1" height="12.3" fill="#cc4778"/><rect x="328.0" y="336.6" width="15.1" height="12.3" fill="#cc4778"/><rect x="342.2" y="336.6" width="15.1" height="12.3" fill="#cc4778"/><rect x="356.3" y="336.6" width="15.1" height="12.3" fill="#cc4778"/><rect x="370.5" y="336.6" width="15.1" height="12.3" fill="#cc4778"/><rect x="384.6" y="336.6" width="15.1" height="12.3" fill="#cc4778"/><rect x="398.7" y="336.6" width="15.1" height="12.3" fill="#cc4778"/><rect x="412.9" y="336.6" width="15.1" height="12.3" fill="#cc4778"/><rect x="427.0" y="336.6" width="15.1" height="12.3" fill="#cc4778"/><rect x="441.2" y="336.6" width="15.1" height="12.3" fill="#cc4778"/><rect x="455.3" y="336.6" width="15.1" height="12.3" fill="#cc4778"/><rect x="469.4" y="336.6" width="15.1" height="12.3" fill="#e16462"/><rect x="483.6" y="336.6" width="15.1" height="12.3" fill="#e16462"/><rect x="497.7" y="336.6" width="15.1" height="12.3" fill="#e16462"/><rect x="511.9" y="336.6" width="15.1" height="12.3" fill="#e16462"/><rect x="526.0" y="336.6" width="15.1" height="12.3" fill="#e16462"/><rect x="540.1" y="336.6" width="15.1" height="12.3" fill="#e16462"/><rect x="554.3" y="336.6" width="15.1" height="12.3" fill="#e16462"/><rect x="568.4" y="336.6" width="15.1" height="12.3" fill="#cc4778"/><rect x="582.6" y="336.6" width="15.1" height="12.3" fill="#cc4778"/><rect x="596.7" y="336.6" width="15.1" height="12.3" fill="#cc4778"/><rect x="610.8" y="336.6" width="15.1" height="12.3" fill="#e56a5d"/><rect x="625.0" y="336.6" width="15.1" height="12.3" fill="#e56a5d"/><rect x="639.1" y="336.6" width="15.1" height="12.3" fill="#e56a5d"/><rect x="653.3" y="336.6" width="15.1" height="12.3" fill="#e56a5d"/><rect x="667.4" y="336.6" width="15.1" height="12.3" fill="#e56a5d"/><rect x="681.5" y="336.6" width="15.1" height="12.3" fill="#d6556d"/><rect x="695.7" y="336.6" width="15.1" height="12.3" fill="#8f0da4"/><rect x="709.8" y="336.6" width="15.1" height="12.3" fill="#8f0da4"/><rect x="724.0" y="336.6" width="15.1" height="12.3" fill="#8f0da4"/><rect x="738.1" y="336.6" width="15.1" height="12.3" fill="#8f0da4"/><rect x="214.9" y="348.0" width="15.1" height="12.3" fill="#b12a90"/><rect x="229.1" y="348.0" width="15.1" height="12.3" fill="#b12a90"/><rect x="243.2" y="348.0" width="15.1" height="12.3" fill="#b12a90"/><rect x="257.3" y="348.0" width="15.1" height="12.3" fill="#b12a90"/><rect x="271.5" y="348.0" width="15.1" height="12.3" fill="#b12a90"/><rect x="285.6" y="348.0" width="15.1" height="12.3" fill="#b12a90"/><rect x="299.8" y="348.0" width="15.1" height="12.3" fill="#b12a90"/><rect x="313.9" y="348.0" width="15.1" height="12.3" fill="#b12a90"/><rect x="328.0" y="348.0" width="15.1" height="12.3" fill="#b12a90"/><rect x="342.2" y="348.0" width="15.1" height="12.3" fill="#b12a90"/><rect x="356.3" y="348.0" width="15.1" height="12.3" fill="#b12a90"/><rect x="370.5" y="348.0" width="15.1" height="12.3" fill="#b12a90"/><rect x="384.6" y="348.0" width="15.1" height="12.3" fill="#b12a90"/><rect x="398.7" y="348.0" width="15.1" height="12.3" fill="#b12a90"/><rect x="412.9" y="348.0" width="15.1" height="12.3" fill="#b12a90"/><rect x="427.0" y="348.0" width="15.1" height="12.3" fill="#b12a90"/><rect x="441.2" y="348.0" width="15.1" height="12.3" fill="#b12a90"/><rect x="455.3" y="348.0" width="15.1" height="12.3" fill="#cc4778"/><rect x="469.4" y="348.0" width="15.1" height="12.3" fill="#e16462"/><rect x="483.6" y="348.0" width="15.1" height="12.3" fill="#e16462"/><rect x="497.7" y="348.0" width="15.1" height="12.3" fill="#e16462"/><rect x="511.9" y="348.0" width="15.1" height="12.3" fill="#e16462"/><rect x="526.0" y="348.0" width="15.1" height="12.3" fill="#e16462"/><rect x="540.1" y="348.0" width="15.1" height="12.3" fill="#e16462"/><rect x="554.3" y="348.0" width="15.1" height="12.3" fill="#e16462"/><rect x="568.4" y="348.0" width="15.1" height="12.3" fill="#bf3984"/><rect x="582.6" y="348.0" width="15.1" height="12.3" fill="#bf3984"/><rect x="596.7" y="348.0" width="15.1" height="12.3" fill="#bf3984"/><rect x="610.8" y="348.0" width="15.1" height="12.3" fill="#e56a5d"/><rect x="625.0" y="348.0" width="15.1" height="12.3" fill="#e56a5d"/><rect x="639.1" y="348.0" width="15.1" height="12.3" fill="#e56a5d"/><rect x="653.3" y="348.0" width="15.1" height="12.3" fill="#e56a5d"/><rect x="667.4" y="348.0" width="15.1" height="12.3" fill="#e56a5d"/><rect x="681.5" y="348.0" width="15.1" height="12.3" fill="#e56a5d"/><rect x="695.7" y="348.0" width="15.1" height="12.3" fill="#cc4778"/><rect x="709.8" y="348.0" width="15.1" height="12.3" fill="#cc4778"/><rect x="724.0" y="348.0" width="15.1" height="12.3" fill="#cc4778"/><rect x="738.1" y="348.0" width="15.1" height="12.3" fill="#cc4778"/><rect x="214.9" y="359.3" width="15.1" height="12.3" fill="#ab2494"/><rect x="229.1" y="359.3" width="15.1" height="12.3" fill="#ab2494"/><rect x="243.2" y="359.3" width="15.1" height="12.3" fill="#ab2494"/><rect x="257.3" y="359.3" width="15.1" height="12.3" fill="#ab2494"/><rect x="271.5" y="359.3" width="15.1" height="12.3" fill="#ab2494"/><rect x="285.6" y="359.3" width="15.1" height="12.3" fill="#ab2494"/><rect x="299.8" y="359.3" width="15.1" height="12.3" fill="#ab2494"/><rect x="313.9" y="359.3" width="15.1" height="12.3" fill="#ab2494"/><rect x="328.0" y="359.3" width="15.1" height="12.3" fill="#ab2494"/><rect x="342.2" y="359.3" width="15.1" height="12.3" fill="#ab2494"/><rect x="356.3" y="359.3" width="15.1" height="12.3" fill="#ab2494"/><rect x="370.5" y="359.3" width="15.1" height="12.3" fill="#ab2494"/><rect x="384.6" y="359.3" width="15.1" height="12.3" fill="#ab2494"/><rect x="398.7" y="359.3" width="15.1" height="12.3" fill="#ab2494"/><rect x="412.9" y="359.3" width="15.1" height="12.3" fill="#ab2494"/><rect x="427.0" y="359.3" width="15.1" height="12.3" fill="#ab2494"/><rect x="441.2" y="359.3" width="15.1" height="12.3" fill="#ab2494"/><rect x="455.3" y="359.3" width="15.1" height="12.3" fill="#cc4778"/><rect x="469.4" y="359.3" width="15.1" height="12.3" fill="#e16462"/><rect x="483.6" y="359.3" width="15.1" height="12.3" fill="#e16462"/><rect x="497.7" y="359.3" width="15.1" height="12.3" fill="#e16462"/><rect x="511.9" y="359.3" width="15.1" height="12.3" fill="#e16462"/><rect x="526.0" y="359.3" width="15.1" height="12.3" fill="#e16462"/><rect x="540.1" y="359.3" width="15.1" height="12.3" fill="#e16462"/><rect x="554.3" y="359.3" width="15.1" height="12.3" fill="#e16462"/><rect x="568.4" y="359.3" width="15.1" height="12.3" fill="#cc4778"/><rect x="582.6" y="359.3" width="15.1" height="12.3" fill="#cc4778"/><rect x="596.7" y="359.3" width="15.1" height="12.3" fill="#cc4778"/><rect x="610.8" y="359.3" width="15.1" height="12.3" fill="#e56a5d"/><rect x="625.0" y="359.3" width="15.1" height="12.3" fill="#e56a5d"/><rect x="639.1" y="359.3" width="15.1" height="12.3" fill="#e56a5d"/><rect x="653.3" y="359.3" width="15.1" height="12.3" fill="#e56a5d"/><rect x="667.4" y="359.3" width="15.1" height="12.3" fill="#e56a5d"/><rect x="681.5" y="359.3" width="15.1" height="12.3" fill="#e56a5d"/><rect x="695.7" y="359.3" width="15.1" height="12.3" fill="#e56a5d"/><rect x="709.8" y="359.3" width="15.1" height="12.3" fill="#e56a5d"/><rect x="724.0" y="359.3" width="15.1" height="12.3" fill="#e56a5d"/><rect x="738.1" y="359.3" width="15.1" height="12.3" fill="#e56a5d"/><rect x="214.9" y="370.6" width="15.1" height="12.3" fill="#a11b9b"/><rect x="229.1" y="370.6" width="15.1" height="12.3" fill="#a11b9b"/><rect x="243.2" y="370.6" width="15.1" height="12.3" fill="#a11b9b"/><rect x="257.3" y="370.6" width="15.1" height="12.3" fill="#a11b9b"/><rect x="271.5" y="370.6" width="15.1" height="12.3" fill="#a11b9b"/><rect x="285.6" y="370.6" width="15.1" height="12.3" fill="#a11b9b"/><rect x="299.8" y="370.6" width="15.1" height="12.3" fill="#a11b9b"/><rect x="313.9" y="370.6" width="15.1" height="12.3" fill="#a11b9b"/><rect x="328.0" y="370.6" width="15.1" height="12.3" fill="#a11b9b"/><rect x="342.2" y="370.6" width="15.1" height="12.3" fill="#a11b9b"/><rect x="356.3" y="370.6" width="15.1" height="12.3" fill="#a11b9b"/><rect x="370.5" y="370.6" width="15.1" height="12.3" fill="#a11b9b"/><rect x="384.6" y="370.6" width="15.1" height="12.3" fill="#a11b9b"/><rect x="398.7" y="370.6" width="15.1" height="12.3" fill="#a11b9b"/><rect x="412.9" y="370.6" width="15.1" height="12.3" fill="#a11b9b"/><rect x="427.0" y="370.6" width="15.1" height="12.3" fill="#a11b9b"/><rect x="441.2" y="370.6" width="15.1" height="12.3" fill="#a11b9b"/><rect x="455.3" y="370.6" width="15.1" height="12.3" fill="#d04d73"/><rect x="469.4" y="370.6" width="15.1" height="12.3" fill="#e16462"/><rect x="483.6" y="370.6" width="15.1" height="12.3" fill="#e16462"/><rect x="497.7" y="370.6" width="15.1" height="12.3" fill="#e16462"/><rect x="511.9" y="370.6" width="15.1" height="12.3" fill="#e16462"/><rect x="526.0" y="370.6" width="15.1" height="12.3" fill="#e16462"/><rect x="540.1" y="370.6" width="15.1" height="12.3" fill="#e16462"/><rect x="554.3" y="370.6" width="15.1" height="12.3" fill="#a11b9b"/><rect x="568.4" y="370.6" width="15.1" height="12.3" fill="#a11b9b"/><rect x="582.6" y="370.6" width="15.1" height="12.3" fill="#a11b9b"/><rect x="596.7" y="370.6" width="15.1" height="12.3" fill="#d6556d"/><rect x="610.8" y="370.6" width="15.1" height="12.3" fill="#e56a5d"/><rect x="625.0" y="370.6" width="15.1" height="12.3" fill="#e56a5d"/><rect x="639.1" y="370.6" width="15.1" height="12.3" fill="#e56a5d"/><rect x="653.3" y="370.6" width="15.1" height="12.3" fill="#e56a5d"/><rect x="667.4" y="370.6" width="15.1" height="12.3" fill="#e56a5d"/><rect x="681.5" y="370.6" width="15.1" height="12.3" fill="#e56a5d"/><rect x="695.7" y="370.6" width="15.1" height="12.3" fill="#e56a5d"/><rect x="709.8" y="370.6" width="15.1" height="12.3" fill="#e56a5d"/><rect x="724.0" y="370.6" width="15.1" height="12.3" fill="#e56a5d"/><rect x="738.1" y="370.6" width="15.1" height="12.3" fill="#e56a5d"/><rect x="214.9" y="382.0" width="15.1" height="12.3" fill="#b12a90"/><rect x="229.1" y="382.0" width="15.1" height="12.3" fill="#b12a90"/><rect x="243.2" y="382.0" width="15.1" height="12.3" fill="#b12a90"/><rect x="257.3" y="382.0" width="15.1" height="12.3" fill="#b12a90"/><rect x="271.5" y="382.0" width="15.1" height="12.3" fill="#b12a90"/><rect x="285.6" y="382.0" width="15.1" height="12.3" fill="#b12a90"/><rect x="299.8" y="382.0" width="15.1" height="12.3" fill="#b12a90"/><rect x="313.9" y="382.0" width="15.1" height="12.3" fill="#b12a90"/><rect x="328.0" y="382.0" width="15.1" height="12.3" fill="#b12a90"/><rect x="342.2" y="382.0" width="15.1" height="12.3" fill="#b12a90"/><rect x="356.3" y="382.0" width="15.1" height="12.3" fill="#b12a90"/><rect x="370.5" y="382.0" width="15.1" height="12.3" fill="#b12a90"/><rect x="384.6" y="382.0" width="15.1" height="12.3" fill="#b12a90"/><rect x="398.7" y="382.0" width="15.1" height="12.3" fill="#b12a90"/><rect x="412.9" y="382.0" width="15.1" height="12.3" fill="#b12a90"/><rect x="427.0" y="382.0" width="15.1" height="12.3" fill="#b12a90"/><rect x="441.2" y="382.0" width="15.1" height="12.3" fill="#b12a90"/><rect x="455.3" y="382.0" width="15.1" height="12.3" fill="#d6556d"/><rect x="469.4" y="382.0" width="15.1" height="12.3" fill="#e16462"/><rect x="483.6" y="382.0" width="15.1" height="12.3" fill="#e16462"/><rect x="497.7" y="382.0" width="15.1" height="12.3" fill="#e16462"/><rect x="511.9" y="382.0" width="15.1" height="12.3" fill="#e16462"/><rect x="526.0" y="382.0" width="15.1" height="12.3" fill="#e16462"/><rect x="540.1" y="382.0" width="15.1" height="12.3" fill="#e16462"/><rect x="554.3" y="382.0" width="15.1" height="12.3" fill="#bf3984"/><rect x="568.4" y="382.0" width="15.1" height="12.3" fill="#bf3984"/><rect x="582.6" y="382.0" width="15.1" height="12.3" fill="#bf3984"/><rect x="596.7" y="382.0" width="15.1" height="12.3" fill="#e56a5d"/><rect x="610.8" y="382.0" width="15.1" height="12.3" fill="#e56a5d"/><rect x="625.0" y="382.0" width="15.1" height="12.3" fill="#e56a5d"/><rect x="639.1" y="382.0" width="15.1" height="12.3" fill="#e56a5d"/><rect x="653.3" y="382.0" width="15.1" height="12.3" fill="#e56a5d"/><rect x="667.4" y="382.0" width="15.1" height="12.3" fill="#e56a5d"/><rect x="681.5" y="382.0" width="15.1" height="12.3" fill="#e56a5d"/><rect x="695.7" y="382.0" width="15.1" height="12.3" fill="#e56a5d"/><rect x="709.8" y="382.0" width="15.1" height="12.3" fill="#e56a5d"/><rect x="724.0" y="382.0" width="15.1" height="12.3" fill="#e56a5d"/><rect x="738.1" y="382.0" width="15.1" height="12.3" fill="#e56a5d"/><rect x="214.9" y="393.3" width="15.1" height="12.3" fill="#cc4778"/><rect x="229.1" y="393.3" width="15.1" height="12.3" fill="#cc4778"/><rect x="243.2" y="393.3" width="15.1" height="12.3" fill="#cc4778"/><rect x="257.3" y="393.3" width="15.1" height="12.3" fill="#cc4778"/><rect x="271.5" y="393.3" width="15.1" height="12.3" fill="#cc4778"/><rect x="285.6" y="393.3" width="15.1" height="12.3" fill="#cc4778"/><rect x="299.8" y="393.3" width="15.1" height="12.3" fill="#cc4778"/><rect x="313.9" y="393.3" width="15.1" height="12.3" fill="#cc4778"/><rect x="328.0" y="393.3" width="15.1" height="12.3" fill="#cc4778"/><rect x="342.2" y="393.3" width="15.1" height="12.3" fill="#cc4778"/><rect x="356.3" y="393.3" width="15.1" height="12.3" fill="#cc4778"/><rect x="370.5" y="393.3" width="15.1" height="12.3" fill="#cc4778"/><rect x="384.6" y="393.3" width="15.1" height="12.3" fill="#cc4778"/><rect x="398.7" y="393.3" width="15.1" height="12.3" fill="#cc4778"/><rect x="412.9" y="393.3" width="15.1" height="12.3" fill="#cc4778"/><rect x="427.0" y="393.3" width="15.1" height="12.3" fill="#cc4778"/><rect x="441.2" y="393.3" width="15.1" height="12.3" fill="#cc4778"/><rect x="455.3" y="393.3" width="15.1" height="12.3" fill="#e16462"/><rect x="469.4" y="393.3" width="15.1" height="12.3" fill="#e16462"/><rect x="483.6" y="393.3" width="15.1" height="12.3" fill="#e16462"/><rect x="497.7" y="393.3" width="15.1" height="12.3" fill="#e16462"/><rect x="511.9" y="393.3" width="15.1" height="12.3" fill="#e16462"/><rect x="526.0" y="393.3" width="15.1" height="12.3" fill="#e16462"/><rect x="540.1" y="393.3" width="15.1" height="12.3" fill="#e16462"/><rect x="554.3" y="393.3" width="15.1" height="12.3" fill="#d6556d"/><rect x="568.4" y="393.3" width="15.1" height="12.3" fill="#d6556d"/><rect x="582.6" y="393.3" width="15.1" height="12.3" fill="#d6556d"/><rect x="596.7" y="393.3" width="15.1" height="12.3" fill="#e56a5d"/><rect x="610.8" y="393.3" width="15.1" height="12.3" fill="#e56a5d"/><rect x="625.0" y="393.3" width="15.1" height="12.3" fill="#e56a5d"/><rect x="639.1" y="393.3" width="15.1" height="12.3" fill="#e56a5d"/><rect x="653.3" y="393.3" width="15.1" height="12.3" fill="#e56a5d"/><rect x="667.4" y="393.3" width="15.1" height="12.3" fill="#e56a5d"/><rect x="681.5" y="393.3" width="15.1" height="12.3" fill="#e56a5d"/><rect x="695.7" y="393.3" width="15.1" height="12.3" fill="#e56a5d"/><rect x="709.8" y="393.3" width="15.1" height="12.3" fill="#e56a5d"/><rect x="724.0" y="393.3" width="15.1" height="12.3" fill="#e56a5d"/><rect x="738.1" y="393.3" width="15.1" height="12.3" fill="#e56a5d"/><rect x="214.9" y="404.7" width="15.1" height="12.3" fill="#da5b69"/><rect x="229.1" y="404.7" width="15.1" height="12.3" fill="#da5b69"/><rect x="243.2" y="404.7" width="15.1" height="12.3" fill="#da5b69"/><rect x="257.3" y="404.7" width="15.1" height="12.3" fill="#da5b69"/><rect x="271.5" y="404.7" width="15.1" height="12.3" fill="#da5b69"/><rect x="285.6" y="404.7" width="15.1" height="12.3" fill="#da5b69"/><rect x="299.8" y="404.7" width="15.1" height="12.3" fill="#da5b69"/><rect x="313.9" y="404.7" width="15.1" height="12.3" fill="#da5b69"/><rect x="328.0" y="404.7" width="15.1" height="12.3" fill="#da5b69"/><rect x="342.2" y="404.7" width="15.1" height="12.3" fill="#da5b69"/><rect x="356.3" y="404.7" width="15.1" height="12.3" fill="#da5b69"/><rect x="370.5" y="404.7" width="15.1" height="12.3" fill="#da5b69"/><rect x="384.6" y="404.7" width="15.1" height="12.3" fill="#da5b69"/><rect x="398.7" y="404.7" width="15.1" height="12.3" fill="#da5b69"/><rect x="412.9" y="404.7" width="15.1" height="12.3" fill="#da5b69"/><rect x="427.0" y="404.7" width="15.1" height="12.3" fill="#da5b69"/><rect x="441.2" y="404.7" width="15.1" height="12.3" fill="#da5b69"/><rect x="455.3" y="404.7" width="15.1" height="12.3" fill="#e16462"/><rect x="469.4" y="404.7" width="15.1" height="12.3" fill="#e16462"/><rect x="483.6" y="404.7" width="15.1" height="12.3" fill="#e16462"/><rect x="497.7" y="404.7" width="15.1" height="12.3" fill="#e16462"/><rect x="511.9" y="404.7" width="15.1" height="12.3" fill="#e16462"/><rect x="526.0" y="404.7" width="15.1" height="12.3" fill="#e16462"/><rect x="540.1" y="404.7" width="15.1" height="12.3" fill="#e16462"/><rect x="554.3" y="404.7" width="15.1" height="12.3" fill="#e16462"/><rect x="568.4" y="404.7" width="15.1" height="12.3" fill="#e16462"/><rect x="582.6" y="404.7" width="15.1" height="12.3" fill="#e56a5d"/><rect x="596.7" y="404.7" width="15.1" height="12.3" fill="#e56a5d"/><rect x="610.8" y="404.7" width="15.1" height="12.3" fill="#e56a5d"/><rect x="625.0" y="404.7" width="15.1" height="12.3" fill="#e56a5d"/><rect x="639.1" y="404.7" width="15.1" height="12.3" fill="#e56a5d"/><rect x="653.3" y="404.7" width="15.1" height="12.3" fill="#e56a5d"/><rect x="667.4" y="404.7" width="15.1" height="12.3" fill="#e56a5d"/><rect x="681.5" y="404.7" width="15.1" height="12.3" fill="#e56a5d"/><rect x="695.7" y="404.7" width="15.1" height="12.3" fill="#e56a5d"/><rect x="709.8" y="404.7" width="15.1" height="12.3" fill="#e56a5d"/><rect x="724.0" y="404.7" width="15.1" height="12.3" fill="#e56a5d"/><rect x="738.1" y="404.7" width="15.1" height="12.3" fill="#e56a5d"/><rect x="214.9" y="416.0" width="15.1" height="12.3" fill="#e16462"/><rect x="229.1" y="416.0" width="15.1" height="12.3" fill="#e16462"/><rect x="243.2" y="416.0" width="15.1" height="12.3" fill="#e16462"/><rect x="257.3" y="416.0" width="15.1" height="12.3" fill="#e16462"/><rect x="271.5" y="416.0" width="15.1" height="12.3" fill="#e16462"/><rect x="285.6" y="416.0" width="15.1" height="12.3" fill="#e16462"/><rect x="299.8" y="416.0" width="15.1" height="12.3" fill="#e16462"/><rect x="313.9" y="416.0" width="15.1" height="12.3" fill="#e16462"/><rect x="328.0" y="416.0" width="15.1" height="12.3" fill="#e16462"/><rect x="342.2" y="416.0" width="15.1" height="12.3" fill="#e16462"/><rect x="356.3" y="416.0" width="15.1" height="12.3" fill="#e16462"/><rect x="370.5" y="416.0" width="15.1" height="12.3" fill="#e16462"/><rect x="384.6" y="416.0" width="15.1" height="12.3" fill="#e16462"/><rect x="398.7" y="416.0" width="15.1" height="12.3" fill="#e16462"/><rect x="412.9" y="416.0" width="15.1" height="12.3" fill="#e16462"/><rect x="427.0" y="416.0" width="15.1" height="12.3" fill="#e16462"/><rect x="441.2" y="416.0" width="15.1" height="12.3" fill="#e16462"/><rect x="455.3" y="416.0" width="15.1" height="12.3" fill="#e16462"/><rect x="469.4" y="416.0" width="15.1" height="12.3" fill="#e16462"/><rect x="483.6" y="416.0" width="15.1" height="12.3" fill="#e16462"/><rect x="497.7" y="416.0" width="15.1" height="12.3" fill="#e16462"/><rect x="511.9" y="416.0" width="15.1" height="12.3" fill="#e16462"/><rect x="526.0" y="416.0" width="15.1" height="12.3" fill="#e16462"/><rect x="540.1" y="416.0" width="15.1" height="12.3" fill="#e56a5d"/><rect x="554.3" y="416.0" width="15.1" height="12.3" fill="#e56a5d"/><rect x="568.4" y="416.0" width="15.1" height="12.3" fill="#e56a5d"/><rect x="582.6" y="416.0" width="15.1" height="12.3" fill="#e66c5c"/><rect x="596.7" y="416.0" width="15.1" height="12.3" fill="#e76f5a"/><rect x="610.8" y="416.0" width="15.1" height="12.3" fill="#e87059"/><rect x="625.0" y="416.0" width="15.1" height="12.3" fill="#e97257"/><rect x="639.1" y="416.0" width="15.1" height="12.3" fill="#eb7556"/><rect x="653.3" y="416.0" width="15.1" height="12.3" fill="#eb7655"/><rect x="667.4" y="416.0" width="15.1" height="12.3" fill="#ed7953"/><rect x="681.5" y="416.0" width="15.1" height="12.3" fill="#ee7b51"/><rect x="695.7" y="416.0" width="15.1" height="12.3" fill="#ef7e50"/><rect x="709.8" y="416.0" width="15.1" height="12.3" fill="#ef7e50"/><rect x="724.0" y="416.0" width="15.1" height="12.3" fill="#ef7e50"/><rect x="738.1" y="416.0" width="15.1" height="12.3" fill="#ef7e50"/><rect x="214.9" y="427.3" width="15.1" height="12.3" fill="#e56a5d"/><rect x="229.1" y="427.3" width="15.1" height="12.3" fill="#e56a5d"/><rect x="243.2" y="427.3" width="15.1" height="12.3" fill="#e56a5d"/><rect x="257.3" y="427.3" width="15.1" height="12.3" fill="#e56a5d"/><rect x="271.5" y="427.3" width="15.1" height="12.3" fill="#e56a5d"/><rect x="285.6" y="427.3" width="15.1" height="12.3" fill="#e56a5d"/><rect x="299.8" y="427.3" width="15.1" height="12.3" fill="#e56a5d"/><rect x="313.9" y="427.3" width="15.1" height="12.3" fill="#e56a5d"/><rect x="328.0" y="427.3" width="15.1" height="12.3" fill="#e56a5d"/><rect x="342.2" y="427.3" width="15.1" height="12.3" fill="#e56a5d"/><rect x="356.3" y="427.3" width="15.1" height="12.3" fill="#e56a5d"/><rect x="370.5" y="427.3" width="15.1" height="12.3" fill="#e56a5d"/><rect x="384.6" y="427.3" width="15.1" height="12.3" fill="#e56a5d"/><rect x="398.7" y="427.3" width="15.1" height="12.3" fill="#e56a5d"/><rect x="412.9" y="427.3" width="15.1" height="12.3" fill="#e56a5d"/><rect x="427.0" y="427.3" width="15.1" height="12.3" fill="#e56a5d"/><rect x="441.2" y="427.3" width="15.1" height="12.3" fill="#e56a5d"/><rect x="455.3" y="427.3" width="15.1" height="12.3" fill="#e56a5d"/><rect x="469.4" y="427.3" width="15.1" height="12.3" fill="#e56a5d"/><rect x="483.6" y="427.3" width="15.1" height="12.3" fill="#e56a5d"/><rect x="497.7" y="427.3" width="15.1" height="12.3" fill="#e56a5d"/><rect x="511.9" y="427.3" width="15.1" height="12.3" fill="#e56a5d"/><rect x="526.0" y="427.3" width="15.1" height="12.3" fill="#e56a5d"/><rect x="540.1" y="427.3" width="15.1" height="12.3" fill="#e56a5d"/><rect x="554.3" y="427.3" width="15.1" height="12.3" fill="#e56a5d"/><rect x="568.4" y="427.3" width="15.1" height="12.3" fill="#e56b5d"/><rect x="582.6" y="427.3" width="15.1" height="12.3" fill="#e66c5c"/><rect x="596.7" y="427.3" width="15.1" height="12.3" fill="#e76f5a"/><rect x="610.8" y="427.3" width="15.1" height="12.3" fill="#e97158"/><rect x="625.0" y="427.3" width="15.1" height="12.3" fill="#ea7457"/><rect x="639.1" y="427.3" width="15.1" height="12.3" fill="#eb7556"/><rect x="653.3" y="427.3" width="15.1" height="12.3" fill="#ec7754"/><rect x="667.4" y="427.3" width="15.1" height="12.3" fill="#ed7a52"/><rect x="681.5" y="427.3" width="15.1" height="12.3" fill="#ee7b51"/><rect x="695.7" y="427.3" width="15.1" height="12.3" fill="#ef7e50"/><rect x="709.8" y="427.3" width="15.1" height="12.3" fill="#ef7e50"/><rect x="724.0" y="427.3" width="15.1" height="12.3" fill="#ef7e50"/><rect x="738.1" y="427.3" width="15.1" height="12.3" fill="#ef7e50"/><rect x="214.9" y="438.7" width="15.1" height="12.3" fill="#e56a5d"/><rect x="229.1" y="438.7" width="15.1" height="12.3" fill="#e56a5d"/><rect x="243.2" y="438.7" width="15.1" height="12.3" fill="#e56a5d"/><rect x="257.3" y="438.7" width="15.1" height="12.3" fill="#e56a5d"/><rect x="271.5" y="438.7" width="15.1" height="12.3" fill="#e56a5d"/><rect x="285.6" y="438.7" width="15.1" height="12.3" fill="#e56a5d"/><rect x="299.8" y="438.7" width="15.1" height="12.3" fill="#e56a5d"/><rect x="313.9" y="438.7" width="15.1" height="12.3" fill="#e56a5d"/><rect x="328.0" y="438.7" width="15.1" height="12.3" fill="#e56a5d"/><rect x="342.2" y="438.7" width="15.1" height="12.3" fill="#e56a5d"/><rect x="356.3" y="438.7" width="15.1" height="12.3" fill="#e56a5d"/><rect x="370.5" y="438.7" width="15.1" height="12.3" fill="#e56a5d"/><rect x="384.6" y="438.7" width="15.1" height="12.3" fill="#e56a5d"/><rect x="398.7" y="438.7" width="15.1" height="12.3" fill="#e56a5d"/><rect x="412.9" y="438.7" width="15.1" height="12.3" fill="#e56a5d"/><rect x="427.0" y="438.7" width="15.1" height="12.3" fill="#e56a5d"/><rect x="441.2" y="438.7" width="15.1" height="12.3" fill="#e56a5d"/><rect x="455.3" y="438.7" width="15.1" height="12.3" fill="#e56a5d"/><rect x="469.4" y="438.7" width="15.1" height="12.3" fill="#e56a5d"/><rect x="483.6" y="438.7" width="15.1" height="12.3" fill="#e56a5d"/><rect x="497.7" y="438.7" width="15.1" height="12.3" fill="#e56a5d"/><rect x="511.9" y="438.7" width="15.1" height="12.3" fill="#e56a5d"/><rect x="526.0" y="438.7" width="15.1" height="12.3" fill="#e56a5d"/><rect x="540.1" y="438.7" width="15.1" height="12.3" fill="#e56a5d"/><rect x="554.3" y="438.7" width="15.1" height="12.3" fill="#e56a5d"/><rect x="568.4" y="438.7" width="15.1" height="12.3" fill="#e56b5d"/><rect x="582.6" y="438.7" width="15.1" height="12.3" fill="#e76e5b"/><rect x="596.7" y="438.7" width="15.1" height="12.3" fill="#e87059"/><rect x="610.8" y="438.7" width="15.1" height="12.3" fill="#e97158"/><rect x="625.0" y="438.7" width="15.1" height="12.3" fill="#ea7457"/><rect x="639.1" y="438.7" width="15.1" height="12.3" fill="#eb7655"/><rect x="653.3" y="438.7" width="15.1" height="12.3" fill="#ec7754"/><rect x="667.4" y="438.7" width="15.1" height="12.3" fill="#ed7a52"/><rect x="681.5" y="438.7" width="15.1" height="12.3" fill="#ef7c51"/><rect x="695.7" y="438.7" width="15.1" height="12.3" fill="#ef7e50"/><rect x="709.8" y="438.7" width="15.1" height="12.3" fill="#ef7e50"/><rect x="724.0" y="438.7" width="15.1" height="12.3" fill="#ef7e50"/><rect x="738.1" y="438.7" width="15.1" height="12.3" fill="#ef7e50"/><rect x="214.9" y="450.0" width="15.1" height="12.3" fill="#e56a5d"/><rect x="229.1" y="450.0" width="15.1" height="12.3" fill="#e56a5d"/><rect x="243.2" y="450.0" width="15.1" height="12.3" fill="#e56a5d"/><rect x="257.3" y="450.0" width="15.1" height="12.3" fill="#e56a5d"/><rect x="271.5" y="450.0" width="15.1" height="12.3" fill="#e56a5d"/><rect x="285.6" y="450.0" width="15.1" height="12.3" fill="#e56a5d"/><rect x="299.8" y="450.0" width="15.1" height="12.3" fill="#e56a5d"/><rect x="313.9" y="450.0" width="15.1" height="12.3" fill="#e56a5d"/><rect x="328.0" y="450.0" width="15.1" height="12.3" fill="#e56a5d"/><rect x="342.2" y="450.0" width="15.1" height="12.3" fill="#e56a5d"/><rect x="356.3" y="450.0" width="15.1" height="12.3" fill="#e56a5d"/><rect x="370.5" y="450.0" width="15.1" height="12.3" fill="#e56a5d"/><rect x="384.6" y="450.0" width="15.1" height="12.3" fill="#e56a5d"/><rect x="398.7" y="450.0" width="15.1" height="12.3" fill="#e56a5d"/><rect x="412.9" y="450.0" width="15.1" height="12.3" fill="#e56a5d"/><rect x="427.0" y="450.0" width="15.1" height="12.3" fill="#e56a5d"/><rect x="441.2" y="450.0" width="15.1" height="12.3" fill="#e56a5d"/><rect x="455.3" y="450.0" width="15.1" height="12.3" fill="#e56a5d"/><rect x="469.4" y="450.0" width="15.1" height="12.3" fill="#e56a5d"/><rect x="483.6" y="450.0" width="15.1" height="12.3" fill="#e56a5d"/><rect x="497.7" y="450.0" width="15.1" height="12.3" fill="#e56a5d"/><rect x="511.9" y="450.0" width="15.1" height="12.3" fill="#e56a5d"/><rect x="526.0" y="450.0" width="15.1" height="12.3" fill="#e56a5d"/><rect x="540.1" y="450.0" width="15.1" height="12.3" fill="#e56a5d"/><rect x="554.3" y="450.0" width="15.1" height="12.3" fill="#e56a5d"/><rect x="568.4" y="450.0" width="15.1" height="12.3" fill="#e66c5c"/><rect x="582.6" y="450.0" width="15.1" height="12.3" fill="#e76e5b"/><rect x="596.7" y="450.0" width="15.1" height="12.3" fill="#e87059"/><rect x="610.8" y="450.0" width="15.1" height="12.3" fill="#e97257"/><rect x="625.0" y="450.0" width="15.1" height="12.3" fill="#eb7556"/><rect x="639.1" y="450.0" width="15.1" height="12.3" fill="#eb7655"/><rect x="653.3" y="450.0" width="15.1" height="12.3" fill="#ed7953"/><rect x="667.4" y="450.0" width="15.1" height="12.3" fill="#ee7b51"/><rect x="681.5" y="450.0" width="15.1" height="12.3" fill="#ef7c51"/><rect x="695.7" y="450.0" width="15.1" height="12.3" fill="#ef7e50"/><rect x="709.8" y="450.0" width="15.1" height="12.3" fill="#ef7e50"/><rect x="724.0" y="450.0" width="15.1" height="12.3" fill="#ef7e50"/><rect x="738.1" y="450.0" width="15.1" height="12.3" fill="#ef7e50"/><rect x="214.9" y="461.4" width="15.1" height="12.3" fill="#e56a5d"/><rect x="229.1" y="461.4" width="15.1" height="12.3" fill="#e56a5d"/><rect x="243.2" y="461.4" width="15.1" height="12.3" fill="#e56a5d"/><rect x="257.3" y="461.4" width="15.1" height="12.3" fill="#e56a5d"/><rect x="271.5" y="461.4" width="15.1" height="12.3" fill="#e56a5d"/><rect x="285.6" y="461.4" width="15.1" height="12.3" fill="#e56a5d"/><rect x="299.8" y="461.4" width="15.1" height="12.3" fill="#e56a5d"/><rect x="313.9" y="461.4" width="15.1" height="12.3" fill="#e56a5d"/><rect x="328.0" y="461.4" width="15.1" height="12.3" fill="#e56a5d"/><rect x="342.2" y="461.4" width="15.1" height="12.3" fill="#e56a5d"/><rect x="356.3" y="461.4" width="15.1" height="12.3" fill="#e56a5d"/><rect x="370.5" y="461.4" width="15.1" height="12.3" fill="#e56a5d"/><rect x="384.6" y="461.4" width="15.1" height="12.3" fill="#e56a5d"/><rect x="398.7" y="461.4" width="15.1" height="12.3" fill="#e56a5d"/><rect x="412.9" y="461.4" width="15.1" height="12.3" fill="#e56a5d"/><rect x="427.0" y="461.4" width="15.1" height="12.3" fill="#e56a5d"/><rect x="441.2" y="461.4" width="15.1" height="12.3" fill="#e56a5d"/><rect x="455.3" y="461.4" width="15.1" height="12.3" fill="#e56a5d"/><rect x="469.4" y="461.4" width="15.1" height="12.3" fill="#e56a5d"/><rect x="483.6" y="461.4" width="15.1" height="12.3" fill="#e56a5d"/><rect x="497.7" y="461.4" width="15.1" height="12.3" fill="#e56a5d"/><rect x="511.9" y="461.4" width="15.1" height="12.3" fill="#e56a5d"/><rect x="526.0" y="461.4" width="15.1" height="12.3" fill="#e56a5d"/><rect x="540.1" y="461.4" width="15.1" height="12.3" fill="#e56a5d"/><rect x="554.3" y="461.4" width="15.1" height="12.3" fill="#e56a5d"/><rect x="568.4" y="461.4" width="15.1" height="12.3" fill="#e66c5c"/><rect x="582.6" y="461.4" width="15.1" height="12.3" fill="#e76f5a"/><rect x="596.7" y="461.4" width="15.1" height="12.3" fill="#e97158"/><rect x="610.8" y="461.4" width="15.1" height="12.3" fill="#e97257"/><rect x="625.0" y="461.4" width="15.1" height="12.3" fill="#eb7556"/><rect x="639.1" y="461.4" width="15.1" height="12.3" fill="#ec7754"/><rect x="653.3" y="461.4" width="15.1" height="12.3" fill="#ed7a52"/><rect x="667.4" y="461.4" width="15.1" height="12.3" fill="#ee7b51"/><rect x="681.5" y="461.4" width="15.1" height="12.3" fill="#ef7e50"/><rect x="695.7" y="461.4" width="15.1" height="12.3" fill="#ef7e50"/><rect x="709.8" y="461.4" width="15.1" height="12.3" fill="#ef7e50"/><rect x="724.0" y="461.4" width="15.1" height="12.3" fill="#ef7e50"/><rect x="738.1" y="461.4" width="15.1" height="12.3" fill="#ef7e50"/><rect x="214.9" y="472.7" width="15.1" height="12.3" fill="#e56a5d"/><rect x="229.1" y="472.7" width="15.1" height="12.3" fill="#e56a5d"/><rect x="243.2" y="472.7" width="15.1" height="12.3" fill="#e56a5d"/><rect x="257.3" y="472.7" width="15.1" height="12.3" fill="#e56a5d"/><rect x="271.5" y="472.7" width="15.1" height="12.3" fill="#e56a5d"/><rect x="285.6" y="472.7" width="15.1" height="12.3" fill="#e56a5d"/><rect x="299.8" y="472.7" width="15.1" height="12.3" fill="#e56a5d"/><rect x="313.9" y="472.7" width="15.1" height="12.3" fill="#e56a5d"/><rect x="328.0" y="472.7" width="15.1" height="12.3" fill="#e56a5d"/><rect x="342.2" y="472.7" width="15.1" height="12.3" fill="#e56a5d"/><rect x="356.3" y="472.7" width="15.1" height="12.3" fill="#e56a5d"/><rect x="370.5" y="472.7" width="15.1" height="12.3" fill="#e56a5d"/><rect x="384.6" y="472.7" width="15.1" height="12.3" fill="#e56a5d"/><rect x="398.7" y="472.7" width="15.1" height="12.3" fill="#e56a5d"/><rect x="412.9" y="472.7" width="15.1" height="12.3" fill="#e56a5d"/><rect x="427.0" y="472.7" width="15.1" height="12.3" fill="#e56a5d"/><rect x="441.2" y="472.7" width="15.1" height="12.3" fill="#e56a5d"/><rect x="455.3" y="472.7" width="15.1" height="12.3" fill="#e56a5d"/><rect x="469.4" y="472.7" width="15.1" height="12.3" fill="#e56a5d"/><rect x="483.6" y="472.7" width="15.1" height="12.3" fill="#e56a5d"/><rect x="497.7" y="472.7" width="15.1" height="12.3" fill="#e56a5d"/><rect x="511.9" y="472.7" width="15.1" height="12.3" fill="#e56a5d"/><rect x="526.0" y="472.7" width="15.1" height="12.3" fill="#e56a5d"/><rect x="540.1" y="472.7" width="15.1" height="12.3" fill="#e56a5d"/><rect x="554.3" y="472.7" width="15.1" height="12.3" fill="#e56a5d"/><rect x="568.4" y="472.7" width="15.1" height="12.3" fill="#e76e5b"/><rect x="582.6" y="472.7" width="15.1" height="12.3" fill="#e76f5a"/><rect x="596.7" y="472.7" width="15.1" height="12.3" fill="#e97158"/><rect x="610.8" y="472.7" width="15.1" height="12.3" fill="#ea7457"/><rect x="625.0" y="472.7" width="15.1" height="12.3" fill="#eb7655"/><rect x="639.1" y="472.7" width="15.1" height="12.3" fill="#ec7754"/><rect x="653.3" y="472.7" width="15.1" height="12.3" fill="#ed7a52"/><rect x="667.4" y="472.7" width="15.1" height="12.3" fill="#ef7c51"/><rect x="681.5" y="472.7" width="15.1" height="12.3" fill="#ef7e50"/><rect x="695.7" y="472.7" width="15.1" height="12.3" fill="#ef7e50"/><rect x="709.8" y="472.7" width="15.1" height="12.3" fill="#ef7e50"/><rect x="724.0" y="472.7" width="15.1" height="12.3" fill="#ef7e50"/><rect x="738.1" y="472.7" width="15.1" height="12.3" fill="#ef7e50"/><rect x="214.9" y="484.0" width="15.1" height="12.3" fill="#e56a5d"/><rect x="229.1" y="484.0" width="15.1" height="12.3" fill="#e56a5d"/><rect x="243.2" y="484.0" width="15.1" height="12.3" fill="#e56a5d"/><rect x="257.3" y="484.0" width="15.1" height="12.3" fill="#e56a5d"/><rect x="271.5" y="484.0" width="15.1" height="12.3" fill="#e56a5d"/><rect x="285.6" y="484.0" width="15.1" height="12.3" fill="#e56a5d"/><rect x="299.8" y="484.0" width="15.1" height="12.3" fill="#e56a5d"/><rect x="313.9" y="484.0" width="15.1" height="12.3" fill="#e56a5d"/><rect x="328.0" y="484.0" width="15.1" height="12.3" fill="#e56a5d"/><rect x="342.2" y="484.0" width="15.1" height="12.3" fill="#e56a5d"/><rect x="356.3" y="484.0" width="15.1" height="12.3" fill="#e56a5d"/><rect x="370.5" y="484.0" width="15.1" height="12.3" fill="#e56a5d"/><rect x="384.6" y="484.0" width="15.1" height="12.3" fill="#e56a5d"/><rect x="398.7" y="484.0" width="15.1" height="12.3" fill="#e56a5d"/><rect x="412.9" y="484.0" width="15.1" height="12.3" fill="#e56a5d"/><rect x="427.0" y="484.0" width="15.1" height="12.3" fill="#e56a5d"/><rect x="441.2" y="484.0" width="15.1" height="12.3" fill="#e56a5d"/><rect x="455.3" y="484.0" width="15.1" height="12.3" fill="#e56a5d"/><rect x="469.4" y="484.0" width="15.1" height="12.3" fill="#e56a5d"/><rect x="483.6" y="484.0" width="15.1" height="12.3" fill="#e56a5d"/><rect x="497.7" y="484.0" width="15.1" height="12.3" fill="#e56a5d"/><rect x="511.9" y="484.0" width="15.1" height="12.3" fill="#e56a5d"/><rect x="526.0" y="484.0" width="15.1" height="12.3" fill="#e56a5d"/><rect x="540.1" y="484.0" width="15.1" height="12.3" fill="#e56a5d"/><rect x="554.3" y="484.0" width="15.1" height="12.3" fill="#e56a5d"/><rect x="568.4" y="484.0" width="15.1" height="12.3" fill="#e76e5b"/><rect x="582.6" y="484.0" width="15.1" height="12.3" fill="#e87059"/><rect x="596.7" y="484.0" width="15.1" height="12.3" fill="#e97257"/><rect x="610.8" y="484.0" width="15.1" height="12.3" fill="#ea7457"/><rect x="625.0" y="484.0" width="15.1" height="12.3" fill="#eb7655"/><rect x="639.1" y="484.0" width="15.1" height="12.3" fill="#ed7953"/><rect x="653.3" y="484.0" width="15.1" height="12.3" fill="#ee7b51"/><rect x="667.4" y="484.0" width="15.1" height="12.3" fill="#ef7c51"/><rect x="681.5" y="484.0" width="15.1" height="12.3" fill="#ef7e50"/><rect x="695.7" y="484.0" width="15.1" height="12.3" fill="#ef7e50"/><rect x="709.8" y="484.0" width="15.1" height="12.3" fill="#ef7e50"/><rect x="724.0" y="484.0" width="15.1" height="12.3" fill="#ef7e50"/><rect x="738.1" y="484.0" width="15.1" height="12.3" fill="#ef7e50"/><rect x="214.9" y="495.4" width="15.1" height="12.3" fill="#e56a5d"/><rect x="229.1" y="495.4" width="15.1" height="12.3" fill="#e56a5d"/><rect x="243.2" y="495.4" width="15.1" height="12.3" fill="#e56a5d"/><rect x="257.3" y="495.4" width="15.1" height="12.3" fill="#e56a5d"/><rect x="271.5" y="495.4" width="15.1" height="12.3" fill="#e56a5d"/><rect x="285.6" y="495.4" width="15.1" height="12.3" fill="#e56a5d"/><rect x="299.8" y="495.4" width="15.1" height="12.3" fill="#e56a5d"/><rect x="313.9" y="495.4" width="15.1" height="12.3" fill="#e56a5d"/><rect x="328.0" y="495.4" width="15.1" height="12.3" fill="#e56a5d"/><rect x="342.2" y="495.4" width="15.1" height="12.3" fill="#e56a5d"/><rect x="356.3" y="495.4" width="15.1" height="12.3" fill="#e56a5d"/><rect x="370.5" y="495.4" width="15.1" height="12.3" fill="#e56a5d"/><rect x="384.6" y="495.4" width="15.1" height="12.3" fill="#e56a5d"/><rect x="398.7" y="495.4" width="15.1" height="12.3" fill="#e56a5d"/><rect x="412.9" y="495.4" width="15.1" height="12.3" fill="#e56a5d"/><rect x="427.0" y="495.4" width="15.1" height="12.3" fill="#e56a5d"/><rect x="441.2" y="495.4" width="15.1" height="12.3" fill="#e56a5d"/><rect x="455.3" y="495.4" width="15.1" height="12.3" fill="#e56a5d"/><rect x="469.4" y="495.4" width="15.1" height="12.3" fill="#e56a5d"/><rect x="483.6" y="495.4" width="15.1" height="12.3" fill="#e56a5d"/><rect x="497.7" y="495.4" width="15.1" height="12.3" fill="#e56a5d"/><rect x="511.9" y="495.4" width="15.1" height="12.3" fill="#e56a5d"/><rect x="526.0" y="495.4" width="15.1" height="12.3" fill="#e56a5d"/><rect x="540.1" y="495.4" width="15.1" height="12.3" fill="#e56a5d"/><rect x="554.3" y="495.4" width="15.1" height="12.3" fill="#e56a5d"/><rect x="568.4" y="495.4" width="15.1" height="12.3" fill="#e76f5a"/><rect x="582.6" y="495.4" width="15.1" height="12.3" fill="#e97158"/><rect x="596.7" y="495.4" width="15.1" height="12.3" fill="#e97257"/><rect x="610.8" y="495.4" width="15.1" height="12.3" fill="#eb7556"/><rect x="625.0" y="495.4" width="15.1" height="12.3" fill="#ec7754"/><rect x="639.1" y="495.4" width="15.1" height="12.3" fill="#ed7953"/><rect x="653.3" y="495.4" width="15.1" height="12.3" fill="#ee7b51"/><rect x="667.4" y="495.4" width="15.1" height="12.3" fill="#ef7e50"/><rect x="681.5" y="495.4" width="15.1" height="12.3" fill="#ef7e50"/><rect x="695.7" y="495.4" width="15.1" height="12.3" fill="#ef7e50"/><rect x="709.8" y="495.4" width="15.1" height="12.3" fill="#ef7e50"/><rect x="724.0" y="495.4" width="15.1" height="12.3" fill="#ef7e50"/><rect x="738.1" y="495.4" width="15.1" height="12.3" fill="#ef7e50"/><rect x="214.9" y="506.7" width="15.1" height="12.3" fill="#e56a5d"/><rect x="229.1" y="506.7" width="15.1" height="12.3" fill="#e56a5d"/><rect x="243.2" y="506.7" width="15.1" height="12.3" fill="#e56a5d"/><rect x="257.3" y="506.7" width="15.1" height="12.3" fill="#e56a5d"/><rect x="271.5" y="506.7" width="15.1" height="12.3" fill="#e56a5d"/><rect x="285.6" y="506.7" width="15.1" height="12.3" fill="#e56a5d"/><rect x="299.8" y="506.7" width="15.1" height="12.3" fill="#e56a5d"/><rect x="313.9" y="506.7" width="15.1" height="12.3" fill="#e56a5d"/><rect x="328.0" y="506.7" width="15.1" height="12.3" fill="#e56a5d"/><rect x="342.2" y="506.7" width="15.1" height="12.3" fill="#e56a5d"/><rect x="356.3" y="506.7" width="15.1" height="12.3" fill="#e56a5d"/><rect x="370.5" y="506.7" width="15.1" height="12.3" fill="#e56a5d"/><rect x="384.6" y="506.7" width="15.1" height="12.3" fill="#e56a5d"/><rect x="398.7" y="506.7" width="15.1" height="12.3" fill="#e56a5d"/><rect x="412.9" y="506.7" width="15.1" height="12.3" fill="#e56a5d"/><rect x="427.0" y="506.7" width="15.1" height="12.3" fill="#e56a5d"/><rect x="441.2" y="506.7" width="15.1" height="12.3" fill="#e56a5d"/><rect x="455.3" y="506.7" width="15.1" height="12.3" fill="#e56a5d"/><rect x="469.4" y="506.7" width="15.1" height="12.3" fill="#e56a5d"/><rect x="483.6" y="506.7" width="15.1" height="12.3" fill="#e56a5d"/><rect x="497.7" y="506.7" width="15.1" height="12.3" fill="#e56a5d"/><rect x="511.9" y="506.7" width="15.1" height="12.3" fill="#e56a5d"/><rect x="526.0" y="506.7" width="15.1" height="12.3" fill="#e56a5d"/><rect x="540.1" y="506.7" width="15.1" height="12.3" fill="#e56a5d"/><rect x="554.3" y="506.7" width="15.1" height="12.3" fill="#e56a5d"/><rect x="568.4" y="506.7" width="15.1" height="12.3" fill="#e76f5a"/><rect x="582.6" y="506.7" width="15.1" height="12.3" fill="#e97158"/><rect x="596.7" y="506.7" width="15.1" height="12.3" fill="#ea7457"/><rect x="610.8" y="506.7" width="15.1" height="12.3" fill="#eb7556"/><rect x="625.0" y="506.7" width="15.1" height="12.3" fill="#ec7754"/><rect x="639.1" y="506.7" width="15.1" height="12.3" fill="#ed7a52"/><rect x="653.3" y="506.7" width="15.1" height="12.3" fill="#ef7c51"/><rect x="667.4" y="506.7" width="15.1" height="12.3" fill="#ef7e50"/><rect x="681.5" y="506.7" width="15.1" height="12.3" fill="#ef7e50"/><rect x="695.7" y="506.7" width="15.1" height="12.3" fill="#ef7e50"/><rect x="709.8" y="506.7" width="15.1" height="12.3" fill="#ef7e50"/><rect x="724.0" y="506.7" width="15.1" height="12.3" fill="#ef7e50"/><rect x="738.1" y="506.7" width="15.1" height="12.3" fill="#ef7e50"/><rect x="214.9" y="518.1" width="15.1" height="12.3" fill="#f2844b"/><rect x="229.1" y="518.1" width="15.1" height="12.3" fill="#f2844b"/><rect x="243.2" y="518.1" width="15.1" height="12.3" fill="#f2844b"/><rect x="257.3" y="518.1" width="15.1" height="12.3" fill="#f2844b"/><rect x="271.5" y="518.1" width="15.1" height="12.3" fill="#f2844b"/><rect x="285.6" y="518.1" width="15.1" height="12.3" fill="#f2844b"/><rect x="299.8" y="518.1" width="15.1" height="12.3" fill="#f2844b"/><rect x="313.9" y="518.1" width="15.1" height="12.3" fill="#e56a5d"/><rect x="328.0" y="518.1" width="15.1" height="12.3" fill="#e56a5d"/><rect x="342.2" y="518.1" width="15.1" height="12.3" fill="#e56a5d"/><rect x="356.3" y="518.1" width="15.1" height="12.3" fill="#e56a5d"/><rect x="370.5" y="518.1" width="15.1" height="12.3" fill="#e56a5d"/><rect x="384.6" y="518.1" width="15.1" height="12.3" fill="#e56a5d"/><rect x="398.7" y="518.1" width="15.1" height="12.3" fill="#e56a5d"/><rect x="412.9" y="518.1" width="15.1" height="12.3" fill="#e56a5d"/><rect x="427.0" y="518.1" width="15.1" height="12.3" fill="#e56a5d"/><rect x="441.2" y="518.1" width="15.1" height="12.3" fill="#e56a5d"/><rect x="455.3" y="518.1" width="15.1" height="12.3" fill="#e56a5d"/><rect x="469.4" y="518.1" width="15.1" height="12.3" fill="#e56a5d"/><rect x="483.6" y="518.1" width="15.1" height="12.3" fill="#e56a5d"/><rect x="497.7" y="518.1" width="15.1" height="12.3" fill="#e56a5d"/><rect x="511.9" y="518.1" width="15.1" height="12.3" fill="#e56a5d"/><rect x="526.0" y="518.1" width="15.1" height="12.3" fill="#e56a5d"/><rect x="540.1" y="518.1" width="15.1" height="12.3" fill="#e56a5d"/><rect x="554.3" y="518.1" width="15.1" height="12.3" fill="#e56a5d"/><rect x="568.4" y="518.1" width="15.1" height="12.3" fill="#e87059"/><rect x="582.6" y="518.1" width="15.1" height="12.3" fill="#e97257"/><rect x="596.7" y="518.1" width="15.1" height="12.3" fill="#ea7457"/><rect x="610.8" y="518.1" width="15.1" height="12.3" fill="#eb7655"/><rect x="625.0" y="518.1" width="15.1" height="12.3" fill="#ed7953"/><rect x="639.1" y="518.1" width="15.1" height="12.3" fill="#ed7a52"/><rect x="653.3" y="518.1" width="15.1" height="12.3" fill="#ef7c51"/><rect x="667.4" y="518.1" width="15.1" height="12.3" fill="#ef7e50"/><rect x="681.5" y="518.1" width="15.1" height="12.3" fill="#ef7e50"/><rect x="695.7" y="518.1" width="15.1" height="12.3" fill="#ef7e50"/><rect x="709.8" y="518.1" width="15.1" height="12.3" fill="#ef7e50"/><rect x="724.0" y="518.1" width="15.1" height="12.3" fill="#ef7e50"/><rect x="738.1" y="518.1" width="15.1" height="12.3" fill="#ef7e50"/><rect x="214.9" y="529.4" width="15.1" height="12.3" fill="#f2844b"/><rect x="229.1" y="529.4" width="15.1" height="12.3" fill="#f2844b"/><rect x="243.2" y="529.4" width="15.1" height="12.3" fill="#f2844b"/><rect x="257.3" y="529.4" width="15.1" height="12.3" fill="#f2844b"/><rect x="271.5" y="529.4" width="15.1" height="12.3" fill="#f2844b"/><rect x="285.6" y="529.4" width="15.1" height="12.3" fill="#f2844b"/><rect x="299.8" y="529.4" width="15.1" height="12.3" fill="#f2844b"/><rect x="313.9" y="529.4" width="15.1" height="12.3" fill="#e87059"/><rect x="328.0" y="529.4" width="15.1" height="12.3" fill="#e56a5d"/><rect x="342.2" y="529.4" width="15.1" height="12.3" fill="#e56a5d"/><rect x="356.3" y="529.4" width="15.1" height="12.3" fill="#e56a5d"/><rect x="370.5" y="529.4" width="15.1" height="12.3" fill="#e56a5d"/><rect x="384.6" y="529.4" width="15.1" height="12.3" fill="#e56a5d"/><rect x="398.7" y="529.4" width="15.1" height="12.3" fill="#e56a5d"/><rect x="412.9" y="529.4" width="15.1" height="12.3" fill="#e56a5d"/><rect x="427.0" y="529.4" width="15.1" height="12.3" fill="#e56a5d"/><rect x="441.2" y="529.4" width="15.1" height="12.3" fill="#e56a5d"/><rect x="455.3" y="529.4" width="15.1" height="12.3" fill="#e56a5d"/><rect x="469.4" y="529.4" width="15.1" height="12.3" fill="#e56a5d"/><rect x="483.6" y="529.4" width="15.1" height="12.3" fill="#e56a5d"/><rect x="497.7" y="529.4" width="15.1" height="12.3" fill="#e56a5d"/><rect x="511.9" y="529.4" width="15.1" height="12.3" fill="#e56a5d"/><rect x="526.0" y="529.4" width="15.1" height="12.3" fill="#e56a5d"/><rect x="540.1" y="529.4" width="15.1" height="12.3" fill="#e56a5d"/><rect x="554.3" y="529.4" width="15.1" height="12.3" fill="#e56a5d"/><rect x="568.4" y="529.4" width="15.1" height="12.3" fill="#e87059"/><rect x="582.6" y="529.4" width="15.1" height="12.3" fill="#e97257"/><rect x="596.7" y="529.4" width="15.1" height="12.3" fill="#eb7556"/><rect x="610.8" y="529.4" width="15.1" height="12.3" fill="#eb7655"/><rect x="625.0" y="529.4" width="15.1" height="12.3" fill="#ed7953"/><rect x="639.1" y="529.4" width="15.1" height="12.3" fill="#ee7b51"/><rect x="653.3" y="529.4" width="15.1" height="12.3" fill="#ef7e50"/><rect x="667.4" y="529.4" width="15.1" height="12.3" fill="#ef7e50"/><rect x="681.5" y="529.4" width="15.1" height="12.3" fill="#ef7e50"/><rect x="695.7" y="529.4" width="15.1" height="12.3" fill="#ef7e50"/><rect x="709.8" y="529.4" width="15.1" height="12.3" fill="#ef7e50"/><rect x="724.0" y="529.4" width="15.1" height="12.3" fill="#ef7e50"/><rect x="738.1" y="529.4" width="15.1" height="12.3" fill="#ef7e50"/><rect x="214.9" y="540.7" width="15.1" height="12.3" fill="#f2844b"/><rect x="229.1" y="540.7" width="15.1" height="12.3" fill="#f2844b"/><rect x="243.2" y="540.7" width="15.1" height="12.3" fill="#f2844b"/><rect x="257.3" y="540.7" width="15.1" height="12.3" fill="#f2844b"/><rect x="271.5" y="540.7" width="15.1" height="12.3" fill="#f2844b"/><rect x="285.6" y="540.7" width="15.1" height="12.3" fill="#f2844b"/><rect x="299.8" y="540.7" width="15.1" height="12.3" fill="#f2844b"/><rect x="313.9" y="540.7" width="15.1" height="12.3" fill="#e87059"/><rect x="328.0" y="540.7" width="15.1" height="12.3" fill="#e56a5d"/><rect x="342.2" y="540.7" width="15.1" height="12.3" fill="#e56a5d"/><rect x="356.3" y="540.7" width="15.1" height="12.3" fill="#e56a5d"/><rect x="370.5" y="540.7" width="15.1" height="12.3" fill="#e56a5d"/><rect x="384.6" y="540.7" width="15.1" height="12.3" fill="#e56a5d"/><rect x="398.7" y="540.7" width="15.1" height="12.3" fill="#e56a5d"/><rect x="412.9" y="540.7" width="15.1" height="12.3" fill="#e56a5d"/><rect x="427.0" y="540.7" width="15.1" height="12.3" fill="#e56a5d"/><rect x="441.2" y="540.7" width="15.1" height="12.3" fill="#e56a5d"/><rect x="455.3" y="540.7" width="15.1" height="12.3" fill="#e56a5d"/><rect x="469.4" y="540.7" width="15.1" height="12.3" fill="#e56a5d"/><rect x="483.6" y="540.7" width="15.1" height="12.3" fill="#e56a5d"/><rect x="497.7" y="540.7" width="15.1" height="12.3" fill="#e56a5d"/><rect x="511.9" y="540.7" width="15.1" height="12.3" fill="#e56a5d"/><rect x="526.0" y="540.7" width="15.1" height="12.3" fill="#e56a5d"/><rect x="540.1" y="540.7" width="15.1" height="12.3" fill="#e56a5d"/><rect x="554.3" y="540.7" width="15.1" height="12.3" fill="#e56a5d"/><rect x="568.4" y="540.7" width="15.1" height="12.3" fill="#e97158"/><rect x="582.6" y="540.7" width="15.1" height="12.3" fill="#ea7457"/><rect x="596.7" y="540.7" width="15.1" height="12.3" fill="#eb7556"/><rect x="610.8" y="540.7" width="15.1" height="12.3" fill="#ec7754"/><rect x="625.0" y="540.7" width="15.1" height="12.3" fill="#ed7a52"/><rect x="639.1" y="540.7" width="15.1" height="12.3" fill="#ee7b51"/><rect x="653.3" y="540.7" width="15.1" height="12.3" fill="#ef7e50"/><rect x="667.4" y="540.7" width="15.1" height="12.3" fill="#ef7e50"/><rect x="681.5" y="540.7" width="15.1" height="12.3" fill="#ef7e50"/><rect x="695.7" y="540.7" width="15.1" height="12.3" fill="#ef7e50"/><rect x="709.8" y="540.7" width="15.1" height="12.3" fill="#ef7e50"/><rect x="724.0" y="540.7" width="15.1" height="12.3" fill="#ef7e50"/><rect x="738.1" y="540.7" width="15.1" height="12.3" fill="#ef7e50"/><rect x="214.9" y="552.1" width="15.1" height="12.3" fill="#f2844b"/><rect x="229.1" y="552.1" width="15.1" height="12.3" fill="#f2844b"/><rect x="243.2" y="552.1" width="15.1" height="12.3" fill="#f2844b"/><rect x="257.3" y="552.1" width="15.1" height="12.3" fill="#f2844b"/><rect x="271.5" y="552.1" width="15.1" height="12.3" fill="#f2844b"/><rect x="285.6" y="552.1" width="15.1" height="12.3" fill="#f2844b"/><rect x="299.8" y="552.1" width="15.1" height="12.3" fill="#f2844b"/><rect x="313.9" y="552.1" width="15.1" height="12.3" fill="#e87059"/><rect x="328.0" y="552.1" width="15.1" height="12.3" fill="#e56a5d"/><rect x="342.2" y="552.1" width="15.1" height="12.3" fill="#e56a5d"/><rect x="356.3" y="552.1" width="15.1" height="12.3" fill="#e56a5d"/><rect x="370.5" y="552.1" width="15.1" height="12.3" fill="#e56a5d"/><rect x="384.6" y="552.1" width="15.1" height="12.3" fill="#e56a5d"/><rect x="398.7" y="552.1" width="15.1" height="12.3" fill="#e56a5d"/><rect x="412.9" y="552.1" width="15.1" height="12.3" fill="#e56a5d"/><rect x="427.0" y="552.1" width="15.1" height="12.3" fill="#e56a5d"/><rect x="441.2" y="552.1" width="15.1" height="12.3" fill="#e56a5d"/><rect x="455.3" y="552.1" width="15.1" height="12.3" fill="#e56a5d"/><rect x="469.4" y="552.1" width="15.1" height="12.3" fill="#e56a5d"/><rect x="483.6" y="552.1" width="15.1" height="12.3" fill="#e56a5d"/><rect x="497.7" y="552.1" width="15.1" height="12.3" fill="#e56a5d"/><rect x="511.9" y="552.1" width="15.1" height="12.3" fill="#e56a5d"/><rect x="526.0" y="552.1" width="15.1" height="12.3" fill="#e56a5d"/><rect x="540.1" y="552.1" width="15.1" height="12.3" fill="#e56a5d"/><rect x="554.3" y="552.1" width="15.1" height="12.3" fill="#e56a5d"/><rect x="568.4" y="552.1" width="15.1" height="12.3" fill="#e97158"/><rect x="582.6" y="552.1" width="15.1" height="12.3" fill="#ea7457"/><rect x="596.7" y="552.1" width="15.1" height="12.3" fill="#eb7655"/><rect x="610.8" y="552.1" width="15.1" height="12.3" fill="#ec7754"/><rect x="625.0" y="552.1" width="15.1" height="12.3" fill="#ed7a52"/><rect x="639.1" y="552.1" width="15.1" height="12.3" fill="#ef7c51"/><rect x="653.3" y="552.1" width="15.1" height="12.3" fill="#ef7e50"/><rect x="667.4" y="552.1" width="15.1" height="12.3" fill="#ef7e50"/><rect x="681.5" y="552.1" width="15.1" height="12.3" fill="#ef7e50"/><rect x="695.7" y="552.1" width="15.1" height="12.3" fill="#ef7e50"/><rect x="709.8" y="552.1" width="15.1" height="12.3" fill="#ef7e50"/><rect x="724.0" y="552.1" width="15.1" height="12.3" fill="#ef7e50"/><rect x="738.1" y="552.1" width="15.1" height="12.3" fill="#ef7e50"/><rect x="214.9" y="563.4" width="15.1" height="12.3" fill="#f2844b"/><rect x="229.1" y="563.4" width="15.1" height="12.3" fill="#f2844b"/><rect x="243.2" y="563.4" width="15.1" height="12.3" fill="#f2844b"/><rect x="257.3" y="563.4" width="15.1" height="12.3" fill="#f2844b"/><rect x="271.5" y="563.4" width="15.1" height="12.3" fill="#f2844b"/><rect x="285.6" y="563.4" width="15.1" height="12.3" fill="#f2844b"/><rect x="299.8" y="563.4" width="15.1" height="12.3" fill="#f2844b"/><rect x="313.9" y="563.4" width="15.1" height="12.3" fill="#e87059"/><rect x="328.0" y="563.4" width="15.1" height="12.3" fill="#e56a5d"/><rect x="342.2" y="563.4" width="15.1" height="12.3" fill="#e56a5d"/><rect x="356.3" y="563.4" width="15.1" height="12.3" fill="#e56a5d"/><rect x="370.5" y="563.4" width="15.1" height="12.3" fill="#e56a5d"/><rect x="384.6" y="563.4" width="15.1" height="12.3" fill="#e56a5d"/><rect x="398.7" y="563.4" width="15.1" height="12.3" fill="#e56a5d"/><rect x="412.9" y="563.4" width="15.1" height="12.3" fill="#e56a5d"/><rect x="427.0" y="563.4" width="15.1" height="12.3" fill="#e56a5d"/><rect x="441.2" y="563.4" width="15.1" height="12.3" fill="#e56a5d"/><rect x="455.3" y="563.4" width="15.1" height="12.3" fill="#e56a5d"/><rect x="469.4" y="563.4" width="15.1" height="12.3" fill="#e56a5d"/><rect x="483.6" y="563.4" width="15.1" height="12.3" fill="#e56a5d"/><rect x="497.7" y="563.4" width="15.1" height="12.3" fill="#e56a5d"/><rect x="511.9" y="563.4" width="15.1" height="12.3" fill="#e56a5d"/><rect x="526.0" y="563.4" width="15.1" height="12.3" fill="#e56a5d"/><rect x="540.1" y="563.4" width="15.1" height="12.3" fill="#e56a5d"/><rect x="554.3" y="563.4" width="15.1" height="12.3" fill="#e56a5d"/><rect x="568.4" y="563.4" width="15.1" height="12.3" fill="#e97257"/><rect x="582.6" y="563.4" width="15.1" height="12.3" fill="#eb7556"/><rect x="596.7" y="563.4" width="15.1" height="12.3" fill="#eb7655"/><rect x="610.8" y="563.4" width="15.1" height="12.3" fill="#ed7953"/><rect x="625.0" y="563.4" width="15.1" height="12.3" fill="#ee7b51"/><rect x="639.1" y="563.4" width="15.1" height="12.3" fill="#ef7c51"/><rect x="653.3" y="563.4" width="15.1" height="12.3" fill="#ef7e50"/><rect x="667.4" y="563.4" width="15.1" height="12.3" fill="#ef7e50"/><rect x="681.5" y="563.4" width="15.1" height="12.3" fill="#ef7e50"/><rect x="695.7" y="563.4" width="15.1" height="12.3" fill="#ef7e50"/><rect x="709.8" y="563.4" width="15.1" height="12.3" fill="#ef7e50"/><rect x="724.0" y="563.4" width="15.1" height="12.3" fill="#ef7e50"/><rect x="738.1" y="563.4" width="15.1" height="12.3" fill="#ef7e50"/><rect x="214.9" y="574.8" width="15.1" height="12.3" fill="#f2844b"/><rect x="229.1" y="574.8" width="15.1" height="12.3" fill="#f2844b"/><rect x="243.2" y="574.8" width="15.1" height="12.3" fill="#f2844b"/><rect x="257.3" y="574.8" width="15.1" height="12.3" fill="#f2844b"/><rect x="271.5" y="574.8" width="15.1" height="12.3" fill="#f2844b"/><rect x="285.6" y="574.8" width="15.1" height="12.3" fill="#f2844b"/><rect x="299.8" y="574.8" width="15.1" height="12.3" fill="#f2844b"/><rect x="313.9" y="574.8" width="15.1" height="12.3" fill="#e87059"/><rect x="328.0" y="574.8" width="15.1" height="12.3" fill="#e56a5d"/><rect x="342.2" y="574.8" width="15.1" height="12.3" fill="#e56a5d"/><rect x="356.3" y="574.8" width="15.1" height="12.3" fill="#e56a5d"/><rect x="370.5" y="574.8" width="15.1" height="12.3" fill="#e56a5d"/><rect x="384.6" y="574.8" width="15.1" height="12.3" fill="#e56a5d"/><rect x="398.7" y="574.8" width="15.1" height="12.3" fill="#e56a5d"/><rect x="412.9" y="574.8" width="15.1" height="12.3" fill="#e56a5d"/><rect x="427.0" y="574.8" width="15.1" height="12.3" fill="#e56a5d"/><rect x="441.2" y="574.8" width="15.1" height="12.3" fill="#e56a5d"/><rect x="455.3" y="574.8" width="15.1" height="12.3" fill="#e56a5d"/><rect x="469.4" y="574.8" width="15.1" height="12.3" fill="#e56a5d"/><rect x="483.6" y="574.8" width="15.1" height="12.3" fill="#e56a5d"/><rect x="497.7" y="574.8" width="15.1" height="12.3" fill="#e56a5d"/><rect x="511.9" y="574.8" width="15.1" height="12.3" fill="#e56a5d"/><rect x="526.0" y="574.8" width="15.1" height="12.3" fill="#e56a5d"/><rect x="540.1" y="574.8" width="15.1" height="12.3" fill="#e56a5d"/><rect x="554.3" y="574.8" width="15.1" height="12.3" fill="#e56a5d"/><rect x="568.4" y="574.8" width="15.1" height="12.3" fill="#e97257"/><rect x="582.6" y="574.8" width="15.1" height="12.3" fill="#eb7556"/><rect x="596.7" y="574.8" width="15.1" height="12.3" fill="#ec7754"/><rect x="610.8" y="574.8" width="15.1" height="12.3" fill="#ed7a52"/><rect x="625.0" y="574.8" width="15.1" height="12.3" fill="#ee7b51"/><rect x="639.1" y="574.8" width="15.1" height="12.3" fill="#ef7e50"/><rect x="653.3" y="574.8" width="15.1" height="12.3" fill="#ef7e50"/><rect x="667.4" y="574.8" width="15.1" height="12.3" fill="#ef7e50"/><rect x="681.5" y="574.8" width="15.1" height="12.3" fill="#ef7e50"/><rect x="695.7" y="574.8" width="15.1" height="12.3" fill="#ef7e50"/><rect x="709.8" y="574.8" width="15.1" height="12.3" fill="#ef7e50"/><rect x="724.0" y="574.8" width="15.1" height="12.3" fill="#ef7e50"/><rect x="738.1" y="574.8" width="15.1" height="12.3" fill="#ef7e50"/><rect x="214.9" y="586.1" width="15.1" height="12.3" fill="#f2844b"/><rect x="229.1" y="586.1" width="15.1" height="12.3" fill="#f2844b"/><rect x="243.2" y="586.1" width="15.1" height="12.3" fill="#f2844b"/><rect x="257.3" y="586.1" width="15.1" height="12.3" fill="#f2844b"/><rect x="271.5" y="586.1" width="15.1" height="12.3" fill="#f2844b"/><rect x="285.6" y="586.1" width="15.1" height="12.3" fill="#f2844b"/><rect x="299.8" y="586.1" width="15.1" height="12.3" fill="#f2844b"/><rect x="313.9" y="586.1" width="15.1" height="12.3" fill="#e87059"/><rect x="328.0" y="586.1" width="15.1" height="12.3" fill="#e56a5d"/><rect x="342.2" y="586.1" width="15.1" height="12.3" fill="#e56a5d"/><rect x="356.3" y="586.1" width="15.1" height="12.3" fill="#e56a5d"/><rect x="370.5" y="586.1" width="15.1" height="12.3" fill="#e56a5d"/><rect x="384.6" y="586.1" width="15.1" height="12.3" fill="#e56a5d"/><rect x="398.7" y="586.1" width="15.1" height="12.3" fill="#e56a5d"/><rect x="412.9" y="586.1" width="15.1" height="12.3" fill="#e56a5d"/><rect x="427.0" y="586.1" width="15.1" height="12.3" fill="#e56a5d"/><rect x="441.2" y="586.1" width="15.1" height="12.3" fill="#e56a5d"/><rect x="455.3" y="586.1" width="15.1" height="12.3" fill="#e56a5d"/><rect x="469.4" y="586.1" width="15.1" height="12.3" fill="#e56a5d"/><rect x="483.6" y="586.1" width="15.1" height="12.3" fill="#e56a5d"/><rect x="497.7" y="586.1" width="15.1" height="12.3" fill="#e56a5d"/><rect x="511.9" y="586.1" width="15.1" height="12.3" fill="#e56a5d"/><rect x="526.0" y="586.1" width="15.1" height="12.3" fill="#e56a5d"/><rect x="540.1" y="586.1" width="15.1" height="12.3" fill="#e56a5d"/><rect x="554.3" y="586.1" width="15.1" height="12.3" fill="#e56a5d"/><rect x="568.4" y="586.1" width="15.1" height="12.3" fill="#e97257"/><rect x="582.6" y="586.1" width="15.1" height="12.3" fill="#eb7556"/><rect x="596.7" y="586.1" width="15.1" height="12.3" fill="#ec7754"/><rect x="610.8" y="586.1" width="15.1" height="12.3" fill="#ed7a52"/><rect x="625.0" y="586.1" width="15.1" height="12.3" fill="#ee7b51"/><rect x="639.1" y="586.1" width="15.1" height="12.3" fill="#ef7e50"/><rect x="653.3" y="586.1" width="15.1" height="12.3" fill="#ef7e50"/><rect x="667.4" y="586.1" width="15.1" height="12.3" fill="#ef7e50"/><rect x="681.5" y="586.1" width="15.1" height="12.3" fill="#ef7e50"/><rect x="695.7" y="586.1" width="15.1" height="12.3" fill="#ef7e50"/><rect x="709.8" y="586.1" width="15.1" height="12.3" fill="#ef7e50"/><rect x="724.0" y="586.1" width="15.1" height="12.3" fill="#ef7e50"/><rect x="738.1" y="586.1" width="15.1" height="12.3" fill="#ef7e50"/><rect x="214.9" y="597.4" width="15.1" height="12.3" fill="#f2844b"/><rect x="229.1" y="597.4" width="15.1" height="12.3" fill="#f2844b"/><rect x="243.2" y="597.4" width="15.1" height="12.3" fill="#f2844b"/><rect x="257.3" y="597.4" width="15.1" height="12.3" fill="#f2844b"/><rect x="271.5" y="597.4" width="15.1" height="12.3" fill="#f2844b"/><rect x="285.6" y="597.4" width="15.1" height="12.3" fill="#f2844b"/><rect x="299.8" y="597.4" width="15.1" height="12.3" fill="#f2844b"/><rect x="313.9" y="597.4" width="15.1" height="12.3" fill="#e87059"/><rect x="328.0" y="597.4" width="15.1" height="12.3" fill="#e56a5d"/><rect x="342.2" y="597.4" width="15.1" height="12.3" fill="#e56a5d"/><rect x="356.3" y="597.4" width="15.1" height="12.3" fill="#e56a5d"/><rect x="370.5" y="597.4" width="15.1" height="12.3" fill="#e56a5d"/><rect x="384.6" y="597.4" width="15.1" height="12.3" fill="#e56a5d"/><rect x="398.7" y="597.4" width="15.1" height="12.3" fill="#e56a5d"/><rect x="412.9" y="597.4" width="15.1" height="12.3" fill="#e56a5d"/><rect x="427.0" y="597.4" width="15.1" height="12.3" fill="#e56a5d"/><rect x="441.2" y="597.4" width="15.1" height="12.3" fill="#e56a5d"/><rect x="455.3" y="597.4" width="15.1" height="12.3" fill="#e56a5d"/><rect x="469.4" y="597.4" width="15.1" height="12.3" fill="#e56a5d"/><rect x="483.6" y="597.4" width="15.1" height="12.3" fill="#e56a5d"/><rect x="497.7" y="597.4" width="15.1" height="12.3" fill="#e56a5d"/><rect x="511.9" y="597.4" width="15.1" height="12.3" fill="#e56a5d"/><rect x="526.0" y="597.4" width="15.1" height="12.3" fill="#e56a5d"/><rect x="540.1" y="597.4" width="15.1" height="12.3" fill="#e56a5d"/><rect x="554.3" y="597.4" width="15.1" height="12.3" fill="#e56a5d"/><rect x="568.4" y="597.4" width="15.1" height="12.3" fill="#e97257"/><rect x="582.6" y="597.4" width="15.1" height="12.3" fill="#eb7556"/><rect x="596.7" y="597.4" width="15.1" height="12.3" fill="#ec7754"/><rect x="610.8" y="597.4" width="15.1" height="12.3" fill="#ed7a52"/><rect x="625.0" y="597.4" width="15.1" height="12.3" fill="#ee7b51"/><rect x="639.1" y="597.4" width="15.1" height="12.3" fill="#ef7e50"/><rect x="653.3" y="597.4" width="15.1" height="12.3" fill="#ef7e50"/><rect x="667.4" y="597.4" width="15.1" height="12.3" fill="#ef7e50"/><rect x="681.5" y="597.4" width="15.1" height="12.3" fill="#ef7e50"/><rect x="695.7" y="597.4" width="15.1" height="12.3" fill="#ef7e50"/><rect x="709.8" y="597.4" width="15.1" height="12.3" fill="#ef7e50"/><rect x="724.0" y="597.4" width="15.1" height="12.3" fill="#ef7e50"/><rect x="738.1" y="597.4" width="15.1" height="12.3" fill="#ef7e50"/><rect x="214.9" y="608.8" width="15.1" height="12.3" fill="#f2844b"/><rect x="229.1" y="608.8" width="15.1" height="12.3" fill="#f2844b"/><rect x="243.2" y="608.8" width="15.1" height="12.3" fill="#f2844b"/><rect x="257.3" y="608.8" width="15.1" height="12.3" fill="#f2844b"/><rect x="271.5" y="608.8" width="15.1" height="12.3" fill="#f2844b"/><rect x="285.6" y="608.8" width="15.1" height="12.3" fill="#f2844b"/><rect x="299.8" y="608.8" width="15.1" height="12.3" fill="#f2844b"/><rect x="313.9" y="608.8" width="15.1" height="12.3" fill="#e87059"/><rect x="328.0" y="608.8" width="15.1" height="12.3" fill="#e56a5d"/><rect x="342.2" y="608.8" width="15.1" height="12.3" fill="#e56a5d"/><rect x="356.3" y="608.8" width="15.1" height="12.3" fill="#e56a5d"/><rect x="370.5" y="608.8" width="15.1" height="12.3" fill="#e56a5d"/><rect x="384.6" y="608.8" width="15.1" height="12.3" fill="#e56a5d"/><rect x="398.7" y="608.8" width="15.1" height="12.3" fill="#e56a5d"/><rect x="412.9" y="608.8" width="15.1" height="12.3" fill="#e56a5d"/><rect x="427.0" y="608.8" width="15.1" height="12.3" fill="#e56a5d"/><rect x="441.2" y="608.8" width="15.1" height="12.3" fill="#e56a5d"/><rect x="455.3" y="608.8" width="15.1" height="12.3" fill="#e56a5d"/><rect x="469.4" y="608.8" width="15.1" height="12.3" fill="#e56a5d"/><rect x="483.6" y="608.8" width="15.1" height="12.3" fill="#e56a5d"/><rect x="497.7" y="608.8" width="15.1" height="12.3" fill="#e56a5d"/><rect x="511.9" y="608.8" width="15.1" height="12.3" fill="#e56a5d"/><rect x="526.0" y="608.8" width="15.1" height="12.3" fill="#e56a5d"/><rect x="540.1" y="608.8" width="15.1" height="12.3" fill="#e56a5d"/><rect x="554.3" y="608.8" width="15.1" height="12.3" fill="#e56a5d"/><rect x="568.4" y="608.8" width="15.1" height="12.3" fill="#e97257"/><rect x="582.6" y="608.8" width="15.1" height="12.3" fill="#eb7556"/><rect x="596.7" y="608.8" width="15.1" height="12.3" fill="#ec7754"/><rect x="610.8" y="608.8" width="15.1" height="12.3" fill="#ed7a52"/><rect x="625.0" y="608.8" width="15.1" height="12.3" fill="#ee7b51"/><rect x="639.1" y="608.8" width="15.1" height="12.3" fill="#ef7e50"/><rect x="653.3" y="608.8" width="15.1" height="12.3" fill="#ef7e50"/><rect x="667.4" y="608.8" width="15.1" height="12.3" fill="#ef7e50"/><rect x="681.5" y="608.8" width="15.1" height="12.3" fill="#ef7e50"/><rect x="695.7" y="608.8" width="15.1" height="12.3" fill="#ef7e50"/><rect x="709.8" y="608.8" width="15.1" height="12.3" fill="#ef7e50"/><rect x="724.0" y="608.8" width="15.1" height="12.3" fill="#ef7e50"/><rect x="738.1" y="608.8" width="15.1" height="12.3" fill="#ef7e50"/></g></g><path d="M314.5 19.0V587.0M328.5 19.0V587.0M342.5 19.0V587.0M356.5 19.0V587.0M370.5 19.0V587.0M385.5 19.0V587.0M399.5 19.0V587.0M413.5 19.0V587.0M427.5 19.0V587.0M441.5 19.0V587.0M455.5 19.0V587.0M469.5 19.0V587.0M484.5 19.0V587.0M498.5 19.0V587.0M512.5 19.0V587.0M526.5 19.0V587.0M540.5 19.0V587.0M554.5 19.0V587.0M568.5 19.0V587.0M583.5 19.0V587.0M597.5 19.0V587.0M611.5 19.0V587.0M625.5 19.0V587.0M639.5 19.0V587.0M653.5 19.0V587.0M667.5 19.0V587.0M682.5 19.0V587.0M696.5 19.0V587.0M710.5 19.0V587.0M314.0 19.5H711.0M314.0 30.5H711.0M314.0 42.5H711.0M314.0 53.5H711.0M314.0 64.5H711.0M314.0 76.5H711.0M314.0 87.5H711.0M314.0 98.5H711.0M314.0 110.5H711.0M314.0 121.5H711.0M314.0 133.5H711.0M314.0 144.5H711.0M314.0 155.5H711.0M314.0 167.5H711.0M314.0 178.5H711.0M314.0 189.5H711.0M314.0 201.5H711.0M314.0 212.5H711.0M314.0 223.5H711.0M314.0 235.5H711.0M314.0 246.5H711.0M314.0 257.5H711.0M314.0 269.5H711.0M314.0 280.5H711.0M314.0 291.5H711.0M314.0 303.5H711.0M314.0 314.5H711.0M314.0 325.5H711.0M314.0 337.5H711.0M314.0 348.5H711.0M314.0 359.5H711.0M314.0 371.5H711.0M314.0 382.5H711.0M314.0 393.5H711.0M314.0 405.5H711.0M314.0 416.5H711.0M314.0 427.5H711.0M314.0 439.5H711.0M314.0 450.5H711.0M314.0 461.5H711.0M314.0 473.5H711.0M314.0 484.5H711.0M314.0 495.5H711.0M314.0 507.5H711.0M314.0 518.5H711.0M314.0 529.5H711.0M314.0 541.5H711.0M314.0 552.5H711.0M314.0 563.5H711.0M314.0 575.5H711.0M314.0 586.5H711.0M257.5 563.5V586.5M271.5 563.5V586.5M286.5 563.5V586.5M300.5 563.5V586.5M257.5 563.5H314.5M257.5 575.5H314.5M257.5 586.5H314.5" stroke="#7d7d7d" stroke-width="1" fill="none"/></svg></div><div style="left:380px;top:691px;width:1px;height:109px;background:#b9babb;"></div><div class="t" style="left:389px;top:697.50px;font-size:13px;color:#31363b;">Temporal Controller</div><svg style="position:absolute;left:385px;top:712px" width="70" height="21">
<rect x="0.5" y="0.5" width="20" height="20" rx="2" fill="#dcdcdc" stroke="#a8a8a8"/>
<circle cx="10.5" cy="10.5" r="5.5" fill="none" stroke="#777" stroke-width="1"/>
<path d="M5 5 L16 16 M16 5 L5 16" stroke="#d42020" stroke-width="1.6"/>
<rect x="23.5" y="0.5" width="20" height="20" rx="2" fill="#f3f3f3" stroke="#b8b8b8"/>
<circle cx="33.5" cy="10.5" r="5.5" fill="none" stroke="#777" stroke-width="1"/><path d="M33.5 7V10.5L35.5 12.5" stroke="#777" fill="none"/>
<rect x="46.5" y="0.5" width="20" height="20" rx="2" fill="#f3f3f3" stroke="#b8b8b8"/>
<circle cx="56.5" cy="10.5" r="5.5" fill="none" stroke="#777" stroke-width="1"/><path d="M55 7.5 L58.5 10.5 L55 13.5Z" fill="#5a9a3a"/>
</svg><div class="t" style="left:455px;top:716.50px;font-size:13px;color:#31363b;">Temporal navigation disabled</div><div style="left:49px;top:80px;width:652px;height:572px;background:#eff0f1;border-radius:3px 3px 0 0;box-shadow:-1.5px 14.5px 36px 1.5px rgba(0,0,0,0.72);overflow:hidden;z-index:10;"><svg style="position:absolute;left:3px;top:4px" width="19" height="18" viewBox="0 0 19 18"><circle cx="8.5" cy="8.5" r="6.8" fill="none" stroke="#589632" stroke-width="3"/><circle cx="8.5" cy="8.5" r="6.8" fill="none" stroke="#eec90d" stroke-width="1.2" stroke-dasharray="2 2"/><path d="M10 10 L16 16" stroke="#589632" stroke-width="3.2"/><circle cx="8.5" cy="8" r="2" fill="#ee7913"/></svg><div class="t" style="left:267px;top:6.92px;font-size:12.5px;color:#a7aaad;">Export Mesh Vertices</div><svg style="position:absolute;left:586px;top:4px" width="66" height="18"><path d="M4 6.5L8.5 11L13 6.5" stroke="#a5a8ab" stroke-width="1.2" fill="none"/><path d="M26 10.5L30.5 6L35 10.5" stroke="#a5a8ab" stroke-width="1.2" fill="none"/><circle cx="52" cy="8.5" r="8.5" fill="#b9bcbf"/><path d="M48.5 5L55.5 12M55.5 5L48.5 12" stroke="#eef0f1" stroke-width="1.4"/></svg><div style="left:9px;top:36.5px;width:86px;height:26.5px;background:linear-gradient(#fdfdfd 70%,#f3f4f4);border:1px solid #b9babb;border-bottom:none;border-radius:3px 3px 0 0;z-index:2;"></div><div style="left:94.5px;top:38px;width:42px;height:24px;background:#e6e7e8;border:1px solid #b9babb;border-bottom:none;border-left:none;border-radius:0 3px 0 0;"></div><div class="t" style="left:20px;top:43.92px;font-size:12.5px;color:#31363b;z-index:3;">Parameters</div><div class="t" style="left:106px;top:45.42px;font-size:12.5px;color:#31363b;">Log</div><div style="left:9.5px;top:61.5px;width:458px;height:423px;background:#eff0f1;border:1px solid #b9babb;"></div><div class="t" style="left:14px;top:69.60px;font-size:13px;color:#31363b;">Input Mesh Layer</div><div class="cmb" style="left:14px;top:88.5px;width:423px;height:23px;"></div><svg style="position:absolute;left:21px;top:94px" width="14" height="14"><path d="M1.5 2V12M4.5 2V12M1 7H8M5 12L12 3H5Z" stroke="#5a6a80" stroke-width="1.1" fill="#d8dee8"/></svg><div class="t" style="left:36.5px;top:94.00px;font-size:13px;color:#31363b;">Madagascar.wave.7days []</div><svg style="position:absolute;left:421px;top:97px" width="8" height="6"><path d="M0.5 1.5h6l-3 3.5z" fill="#4d4d4d"/></svg><div class="btn" style="left:442px;top:88px;width:22.5px;height:23px;"><div class="t" style="left:5px;top:6px;font-size:12px;color:#31363b">...</div></div><div class="t" style="left:14px;top:118.60px;font-size:13px;color:#31363b;">Dataset Groups</div><div style="left:14px;top:138.5px;width:424px;height:23px;background:#eff0f1;border:1px solid #c1c3c4;border-radius:3px;"></div><div class="t" style="left:18px;top:144.42px;font-size:12.5px;color:#a8abae;">0 options selected</div><div class="btn" style="left:442px;top:138.5px;width:22.5px;height:23px;"><div class="t" style="left:5px;top:6px;font-size:12px;color:#31363b">...</div></div><div class="t" style="left:14px;top:167.80px;font-size:13px;color:#31363b;">Dataset Time</div><svg style="position:absolute;left:22.0px;top:200px" width="12" height="12"><circle cx="6" cy="6" r="5" fill="#f0f1f2" stroke="#b3b5b7"/></svg><div class="t" style="left:38.5px;top:200.42px;font-size:12.5px;color:#a5a8ab;">Current Canvas Time</div><svg style="position:absolute;left:165.0px;top:200px" width="12" height="12"><circle cx="6" cy="6" r="5" fill="#f0f1f2" stroke="#b3b5b7"/><circle cx="6" cy="6" r="2.5" fill="#a5a8ab"/></svg><div class="t" style="left:181px;top:200.42px;font-size:12.5px;color:#a5a8ab;">Defined Date/Time</div><svg style="position:absolute;left:296.0px;top:200px" width="12" height="12"><circle cx="6" cy="6" r="5" fill="#f0f1f2" stroke="#b3b5b7"/></svg><div class="t" style="left:313px;top:200.42px;font-size:12.5px;color:#a5a8ab;">Dataset Group Time Step</div><div class="t" style="left:14px;top:230.40px;font-size:13px;color:#31363b;">Output Coordinate System [optional]</div><div class="cmb" style="left:14px;top:250.5px;width:424.5px;height:23px;"></div><svg style="position:absolute;left:423px;top:259px" width="8" height="6"><path d="M0.5 1.5h6l-3 3.5z" fill="#4d4d4d"/></svg><div class="btn" style="left:444px;top:250.5px;width:20.5px;height:22px;"></div><svg style="position:absolute;left:447px;top:253px" width="16" height="16"><circle cx="8" cy="8" r="6" fill="#c8dcea" stroke="#5a7a9a" stroke-width="0.8"/><path d="M2 8h12M8 2v12M4 4Q8 8 4 12M12 4Q8 8 12 12" stroke="#5a7a9a" stroke-width="0.6" fill="none"/><rect x="9" y="9" width="6" height="6" fill="#d9a90f"/></svg><div class="t" style="left:14px;top:279.70px;font-size:13px;color:#31363b;">Export Vector Option</div><div class="cmb" style="left:14px;top:299.5px;width:450.5px;height:23px;"></div><div class="t" style="left:19.5px;top:305.00px;font-size:13px;color:#31363b;">Cartesian (x,y)</div><svg style="position:absolute;left:448px;top:309px" width="8" height="6"><path d="M0.5 1.5h6l-3 3.5z" fill="#4d4d4d"/></svg><div class="t" style="left:14px;top:330.00px;font-size:13px;color:#31363b;">Output Vector Layer</div><div class="fld" style="left:14px;top:349.5px;width:423.5px;height:23px;"></div><div class="t" style="left:17px;top:355.42px;font-size:12.5px;color:#a8abae;">[Create temporary layer]</div><div class="btn" style="left:442.5px;top:349.5px;width:22px;height:23px;"><div class="t" style="left:5px;top:6px;font-size:12px;color:#31363b">...</div></div><div style="left:14.5px;top:382.5px;width:11.5px;height:11.5px;background:#fcfcfc;border:1px solid #9da0a3;border-radius:2px;"><svg style="position:absolute;left:0;top:0" width="10" height="10"><path d="M2 5.2L4 7.8L8.3 1.8" stroke="#232629" stroke-width="1.4" fill="none"/></svg></div><div class="t" style="left:30.5px;top:382.50px;font-size:13px;color:#31363b;">Open output file after running algorithm</div><div style="left:10.5px;top:472.5px;width:456px;height:11.5px;background:#f7f7f7;border-top:1px solid #cfd0d1;"></div><div style="left:10.5px;top:472.5px;width:12px;height:11.5px;border-right:1px solid #cfd0d1;"><svg style="position:absolute;left:2px;top:2px" width="8" height="8"><path d="M5.5 1.5v6l-3.5-3z" fill="#606060"/></svg></div><div style="left:454.5px;top:472.5px;width:12px;height:11.5px;border-left:1px solid #cfd0d1;"><svg style="position:absolute;left:2px;top:2px" width="8" height="8"><path d="M2.5 1.5v6l3.5-3z" fill="#606060"/></svg></div><div style="left:450.5px;top:472.5px;width:3px;height:11.5px;border-left:1px solid #d8d8d8;"></div><svg style="position:absolute;left:471px;top:37px" width="6" height="8"><path d="M1 1v6l3.5-3z" fill="#777"/></svg><svg style="position:absolute;left:474px;top:250px" width="2" height="24"><path d="M0.5 0v24" stroke="#c4c5c6" stroke-dasharray="1 2"/></svg><div style="left:482.5px;top:36px;width:160px;height:449.5px;background:#fcfcfc;border:1px solid #b9babb;border-right-color:#e6e6e6;"></div><div class="t" style="left:488px;top:44.67px;font-size:19px;color:#3b3f44;-webkit-text-stroke:0.8px #3b3f44;">Export Mesh</div><div class="t" style="left:488px;top:68.42px;font-size:19px;color:#3b3f44;-webkit-text-stroke:0.8px #3b3f44;">Vertices</div><div class="t" style="left:488px;top:104.59px;font-size:12.3px;color:#5a5e63;">Export mesh's vertices to a</div><div class="t" style="left:488px;top:120.84px;font-size:12.3px;color:#5a5e63;">point vector layer with</div><div class="t" style="left:488px;top:137.09px;font-size:12.3px;color:#5a5e63;">dataset values on vertices</div><div class="t" style="left:488px;top:153.34px;font-size:12.3px;color:#5a5e63;">as attribute values</div><div style="left:9.5px;top:512.5px;width:554px;height:22px;background:#fcfcfc;border:1px solid #bdbfc1;border-radius:3px;"></div><div class="t" style="left:278.5px;top:517.42px;font-size:12.5px;color:#31363b;">0%</div><div style="left:569px;top:512.5px;width:73px;height:21.5px;background:linear-gradient(#f1f1f2,#e6e7e8);border:1px solid #c7c9ca;border-radius:3px;"></div><div class="t" style="left:585px;top:518.42px;font-size:12.5px;color:#a7aaad;">Cancel</div><div class="btn" style="left:9.5px;top:540.5px;width:72.5px;height:22.5px;"></div><svg style="position:absolute;left:21px;top:544px" width="15" height="16"><path d="M1 1h4M1 1v4M14 1h-4M14 1v4M1 15h4M1 15v-4M14 15h-4M14 15v-4" stroke="#e04848" stroke-width="1.4"/><circle cx="4" cy="12" r="2" fill="#e04848"/><circle cx="11" cy="12" r="2" fill="#e04848"/><circle cx="7.5" cy="7.5" r="1.6" fill="#f0a0a0"/></svg><div class="t" style="left:40px;top:546.00px;font-size:13px;color:#31363b;"><u>A</u>ide</div><div class="btn" style="left:87px;top:540.5px;width:152px;height:22.5px;"></div><div class="t" style="left:99px;top:546.84px;font-size:12px;color:#31363b;">Run as Batch Process…</div><div style="left:491px;top:540.5px;width:72.5px;height:22.5px;border:1px solid #6a9ccf;border-radius:3px;background:linear-gradient(#f7f7f7,#eceded);"></div><svg style="position:absolute;left:507px;top:544px" width="16" height="14"><path d="M1 9L9 2L14 4L6 12Z" fill="#6b9a56" stroke="#3e6a30" stroke-width="0.9"/><path d="M9 2L13 1L14 4" fill="#4e7a3e"/></svg><div class="t" style="left:523px;top:546.50px;font-size:13px;color:#31363b;">Run</div><div class="btn" style="left:569px;top:540.5px;width:72.5px;height:22.5px;"></div><svg style="position:absolute;left:577px;top:547px" width="13" height="13"><path d="M2 1Q7 4 11 12M11 1L1 12" stroke="#232629" stroke-width="2.2" fill="none"/></svg><div class="t" style="left:592px;top:546.50px;font-size:13px;color:#31363b;"><u>F</u>ermer</div></div><svg style="position:absolute;left:641px;top:284px;z-index:20" width="16" height="22"><path d="M2.25 2.25L11.5 12.25L9 14.75L8.75 18.75L5.5 15.75L2.25 15.5Z" fill="#3d3f42" stroke="#fff" stroke-width="1.3" stroke-linejoin="round"/></svg></body></html>
